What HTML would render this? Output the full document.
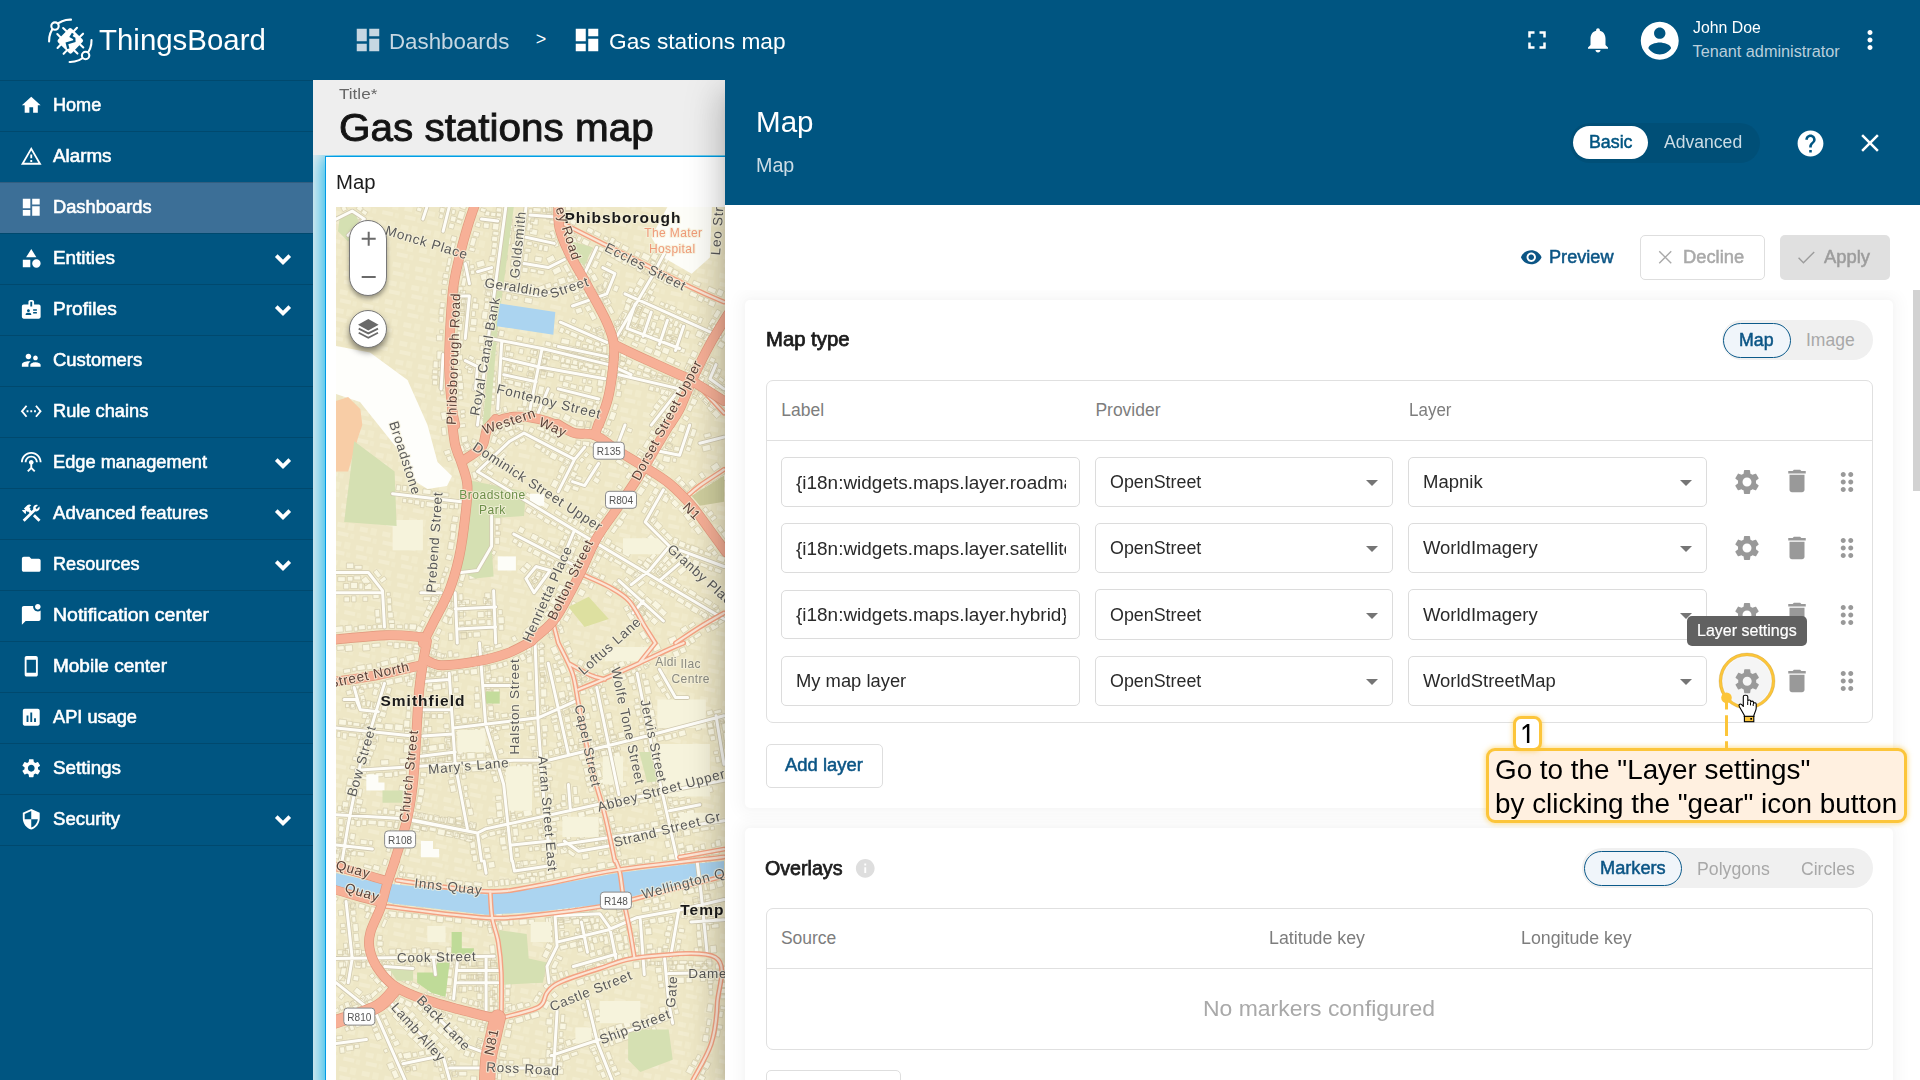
<!DOCTYPE html>
<html lang="en"><head><meta charset="utf-8"><title>ThingsBoard - Gas stations map</title>
<style>
*{box-sizing:border-box;margin:0;padding:0}
html,body{width:1920px;height:1080px;overflow:hidden;background:#fff}
body{position:relative;font-family:"Liberation Sans",Arial,sans-serif;}
.a{position:absolute}
.t{position:absolute;white-space:nowrap;line-height:1;transform-origin:0 50%;}
.ic{position:absolute;overflow:visible}
.sep{position:absolute;left:0;width:313px;height:1px;background:rgba(0,0,0,.14)}
.inp{position:absolute;height:50px;border:1px solid #dcdcdc;border-radius:5px;background:#fff}
.tri{position:absolute;width:0;height:0;border-left:6.5px solid transparent;border-right:6.5px solid transparent;border-top:6.5px solid #757575}
</style></head>
<body>
<!-- ===== dashboard area (left of panel) ===== -->
<div class="a" style="left:313px;top:80px;width:412px;height:1000px;background:#eeeeee"></div>
<!-- selected widget -->
<div class="a" style="left:313px;top:155px;width:412px;height:925px;overflow:hidden"><div class="a" id="widget" style="left:11.8px;top:1px;width:420px;height:940px;background:#fff;border:1.3px solid #039be5;box-shadow:0 0 20px 2px #00b2ec;"></div></div>
<svg class="a" style="left:336px;top:207px;filter:blur(.55px)" width="389" height="873" viewBox="336 207 389 873" font-family="Liberation Sans, Arial, sans-serif">
<rect x="336" y="207" width="389" height="873" fill="#eee7c6"/>
<defs><pattern id="bld" width="23" height="19" patternUnits="userSpaceOnUse" patternTransform="rotate(12)"><rect x="2" y="3" width="8" height="5" fill="#f8f5df"/><rect x="13" y="2" width="6" height="7" fill="#f6f2d8"/><rect x="4" y="12" width="11" height="4" fill="#f9f6e2"/><rect x="17" y="12" width="4" height="5" fill="#f4f0d4"/></pattern></defs>
<rect x="336" y="207" width="389" height="873" fill="url(#bld)" opacity=".35"/>
<path d="M502.0 208.2l-0.6 4.2l-5.4 -0.7l0.6 -4.2zM501.6 213.3l-0.5 3.8l-5.0 -0.7l0.5 -3.8zM500.9 217.9l-0.5 3.9l-4.7 -0.6l0.5 -3.9zM499.3 223.7l-0.9 6.6l-6.3 -0.8l0.9 -6.6zM499.1 231.9l-0.5 3.7l-6.0 -0.8l0.5 -3.7zM497.9 236.8l-0.7 5.0l-5.9 -0.8l0.7 -5.0zM497.5 242.9l-0.7 5.3l-5.1 -0.7l0.7 -5.3zM496.5 249.0l-0.9 6.8l-4.7 -0.6l0.9 -6.8zM495.3 257.1l-0.7 5.0l-5.8 -0.8l0.7 -5.0zM508.0 218.5l-0.5 4.1l4.7 0.6l0.5 -4.1zM507.5 224.5l-0.5 3.7l5.5 0.7l0.5 -3.7zM506.4 229.9l-0.7 5.0l5.5 0.7l0.7 -5.0zM505.1 236.5l-1.0 7.6l6.3 0.8l1.0 -7.6zM503.1 254.8l-0.7 4.9l4.6 0.6l0.7 -4.9zM501.9 261.3l-0.6 4.3l3.8 0.5l0.6 -4.3zM493.8 268.6l-0.7 5.4l-6.1 -0.8l0.7 -5.4zM493.1 274.9l-1.0 7.8l-5.9 -0.8l1.0 -7.8zM492.0 284.8l-0.7 5.2l-6.1 -0.8l0.7 -5.2zM490.9 292.2l-0.6 4.6l-4.2 -0.6l0.6 -4.6zM489.4 298.2l-0.5 3.5l-4.7 -0.6l0.5 -3.5zM489.7 303.1l-0.9 6.9l-5.0 -0.7l0.9 -6.9zM488.2 311.6l-1.1 7.9l-5.8 -0.8l1.1 -7.9zM487.2 321.6l-0.7 5.4l-3.8 -0.5l0.7 -5.4zM500.8 269.5l-0.6 4.3l4.5 0.6l0.6 -4.3zM499.7 279.4l-0.9 6.5l3.9 0.5l0.9 -6.5zM498.8 287.1l-0.5 4.1l6.0 0.8l0.5 -4.1zM498.3 293.4l-0.5 3.9l3.8 0.5l0.5 -3.9zM496.9 298.5l-0.6 4.3l3.5 0.5l0.6 -4.3zM495.1 312.6l-1.0 7.7l5.5 0.7l1.0 -7.7zM484.9 336.2l-0.9 7.5l-5.9 -0.7l0.9 -7.5zM484.0 345.5l-0.7 5.2l-3.6 -0.4l0.7 -5.2zM482.2 359.9l-1.0 8.4l-6.3 -0.8l1.0 -8.4zM480.3 375.7l-1.0 7.6l-4.9 -0.6l1.0 -7.6zM478.8 385.0l-0.8 6.8l-6.2 -0.8l0.8 -6.8zM475.4 408.8l-0.9 7.1l-4.0 -0.5l0.9 -7.1zM493.4 331.1l-0.7 5.2l5.1 0.6l0.7 -5.2zM492.6 337.3l-0.8 6.7l5.0 0.6l0.8 -6.7zM490.8 346.0l-0.9 7.6l4.1 0.5l0.9 -7.6zM490.4 354.8l-0.8 6.4l4.2 0.5l0.8 -6.4zM488.2 369.3l-0.7 5.6l6.2 0.8l0.7 -5.6zM487.6 376.4l-0.4 3.6l4.8 0.6l0.4 -3.6zM486.6 380.9l-0.5 4.3l4.9 0.6l0.5 -4.3zM486.0 387.1l-0.8 6.0l5.1 0.6l0.8 -6.0zM485.0 395.0l-0.6 4.7l4.3 0.5l0.6 -4.7zM484.1 401.6l-0.9 7.2l6.2 0.8l0.9 -7.2zM483.0 410.2l-0.8 6.0l5.5 0.7l0.8 -6.0zM521.4 216.3l-0.5 4.2l-3.8 -0.4l0.5 -4.2zM519.5 227.6l-0.5 4.2l-5.6 -0.6l0.5 -4.2zM519.2 233.6l-0.9 8.3l-4.1 -0.5l0.9 -8.3zM518.0 244.0l-1.0 8.4l-6.0 -0.7l1.0 -8.4zM517.4 253.4l-0.6 5.2l-4.1 -0.5l0.6 -5.2zM516.1 259.8l-0.7 6.2l-4.8 -0.5l0.7 -6.2zM514.9 266.8l-0.7 6.0l-3.7 -0.4l0.7 -6.0zM529.1 208.6l-0.5 4.8l3.6 0.4l0.5 -4.8zM528.4 215.3l-0.6 5.6l6.2 0.7l0.6 -5.6zM527.5 222.8l-0.9 8.0l5.2 0.6l0.9 -8.0zM525.1 248.0l-0.4 3.8l6.0 0.7l0.4 -3.8zM524.2 253.2l-0.9 8.1l4.3 0.5l0.9 -8.1zM523.2 262.2l-0.5 4.0l4.0 0.5l0.5 -4.0zM522.5 267.1l-0.6 5.0l5.7 0.7l0.6 -5.0zM485.8 290.1l7.0 1.4l-1.0 5.1l-7.0 -1.4zM493.9 291.5l4.0 0.8l-1.1 5.8l-4.0 -0.8zM506.4 293.5l5.1 1.0l-1.1 5.9l-5.1 -1.0zM513.2 295.2l5.1 1.0l-0.7 3.6l-5.1 -1.0zM525.0 297.0l7.7 1.5l-1.0 5.4l-7.7 -1.5zM502.8 285.4l5.0 1.0l0.9 -4.5l-5.0 -1.0zM508.5 286.7l5.9 1.1l0.8 -4.0l-5.9 -1.1zM515.9 288.1l3.9 0.7l0.9 -4.6l-3.9 -0.7zM520.7 288.7l4.6 0.9l1.0 -5.2l-4.6 -0.9zM526.9 289.5l7.0 1.3l1.2 -6.0l-7.0 -1.3zM571.4 288.8l6.6 -2.1l1.7 5.3l-6.6 2.1zM579.2 286.8l5.1 -1.6l1.2 3.6l-5.1 1.6zM539.0 291.5l6.6 -2.1l-1.5 -4.7l-6.6 2.1zM546.4 289.1l5.7 -1.8l-1.6 -4.9l-5.7 1.8zM553.9 287.3l4.5 -1.5l-1.1 -3.5l-4.5 1.5zM559.5 285.2l6.9 -2.2l-2.0 -6.1l-6.9 2.2zM567.9 283.0l6.6 -2.1l-1.8 -5.5l-6.6 2.1zM575.9 279.9l4.0 -1.3l-1.3 -4.1l-4.0 1.3zM581.7 277.9l3.4 -1.1l-1.1 -3.5l-3.4 1.1zM491.3 342.1l4.9 0.9l-1.0 5.0l-4.9 -0.9zM519.5 348.3l4.5 0.9l-1.0 5.2l-4.5 -0.9zM530.7 349.6l6.9 1.3l-0.8 4.1l-6.9 -1.3zM491.3 335.1l5.9 1.1l0.9 -4.8l-5.9 -1.1zM498.4 335.9l5.0 1.0l1.1 -5.9l-5.0 -1.0zM516.0 340.1l6.3 1.2l0.9 -4.5l-6.3 -1.2zM528.9 342.3l4.7 0.9l0.8 -4.2l-4.7 -0.9zM543.6 352.2l7.8 1.9l-1.5 6.1l-7.8 -1.9zM552.9 354.7l7.0 1.7l-1.1 4.7l-7.0 -1.7zM561.6 356.8l3.6 0.9l-1.5 6.1l-3.6 -0.9zM566.2 358.3l4.8 1.2l-1.3 5.6l-4.8 -1.2zM573.2 359.5l4.9 1.2l-1.2 5.0l-4.9 -1.2zM579.2 361.7l4.4 1.1l-1.5 6.0l-4.4 -1.1zM585.3 362.3l8.2 2.0l-1.1 4.7l-8.2 -2.0zM594.4 365.0l5.1 1.2l-0.9 3.7l-5.1 -1.2zM544.7 345.5l5.9 1.4l1.1 -4.5l-5.9 -1.4zM552.1 346.7l8.1 2.0l0.9 -3.8l-8.1 -2.0zM561.5 349.4l4.5 1.1l1.0 -4.2l-4.5 -1.1zM567.0 351.2l8.0 1.9l1.4 -5.9l-8.0 -1.9zM577.0 353.6l6.8 1.7l1.5 -6.0l-6.8 -1.7zM592.6 356.9l8.1 2.0l1.0 -4.1l-8.1 -2.0zM601.7 358.8l6.7 1.6l1.5 -6.1l-6.7 -1.6zM608.9 369.2l5.7 2.6l-1.5 3.3l-5.7 -2.6zM616.4 372.3l6.1 2.8l-1.8 4.0l-6.1 -2.8zM612.0 362.6l5.8 2.7l1.9 -4.2l-5.8 -2.7zM619.2 364.9l4.6 2.1l2.0 -4.4l-4.6 -2.1zM505.3 362.7l4.9 1.2l-0.8 3.5l-4.9 -1.2zM511.7 363.8l4.7 1.1l-1.3 5.4l-4.7 -1.1zM518.2 366.1l5.1 1.2l-1.1 4.6l-5.1 -1.2zM505.9 355.6l7.1 1.7l1.0 -4.3l-7.1 -1.7zM526.6 359.8l4.1 1.0l0.8 -3.6l-4.1 -1.0zM540.3 370.4l5.1 0.9l-0.7 4.0l-5.1 -0.9zM547.5 371.8l6.7 1.2l-0.8 4.6l-6.7 -1.2zM560.1 374.7l4.1 0.7l-1.1 6.3l-4.1 -0.7zM565.3 375.2l7.5 1.4l-0.9 4.7l-7.5 -1.4zM582.9 378.1l3.6 0.7l-0.8 4.7l-3.6 -0.7zM588.3 379.8l3.6 0.7l-0.7 3.6l-3.6 -0.7zM540.9 363.9l4.7 0.9l1.0 -5.6l-4.7 -0.9zM560.7 367.0l8.1 1.5l0.8 -4.6l-8.1 -1.5zM570.1 368.4l8.0 1.5l0.7 -4.0l-8.0 -1.5zM579.9 370.6l7.2 1.3l1.0 -5.2l-7.2 -1.3zM588.4 372.3l7.3 1.3l0.7 -3.7l-7.3 -1.3zM596.8 373.1l3.8 0.7l0.6 -3.5l-3.8 -0.7zM505.7 378.9l8.2 1.8l-0.9 4.2l-8.2 -1.8zM514.8 381.1l6.9 1.5l-1.0 4.7l-6.9 -1.5zM522.9 382.3l6.7 1.5l-1.2 5.6l-6.7 -1.5zM507.1 372.0l4.9 1.1l1.1 -5.1l-4.9 -1.1zM526.6 375.5l5.9 1.3l0.9 -4.1l-5.9 -1.3zM497.0 351.2l-0.2 3.7l-4.4 -0.3l0.2 -3.7zM496.4 371.2l-0.2 4.0l-5.3 -0.3l0.2 -4.0zM495.8 376.9l-0.3 4.2l-4.1 -0.2l0.3 -4.2zM495.9 382.3l-0.3 4.5l-3.5 -0.2l0.3 -4.5zM495.7 388.1l-0.3 5.1l-4.1 -0.2l0.3 -5.1zM495.2 395.0l-0.2 4.0l-4.7 -0.3l0.2 -4.0zM494.7 400.6l-0.3 4.3l-5.6 -0.3l0.3 -4.3zM505.6 345.6l-0.3 5.1l5.2 0.3l0.3 -5.1zM504.6 351.9l-0.5 8.5l4.6 0.3l0.5 -8.5zM503.5 366.3l-0.3 5.5l6.1 0.4l0.3 -5.5zM503.7 373.3l-0.4 6.2l5.4 0.3l0.4 -6.2zM503.1 381.6l-0.3 5.3l5.0 0.3l0.3 -5.3zM537.5 350.6l-1.2 5.8l-3.6 -0.7l1.2 -5.8zM536.6 358.5l-1.3 6.5l-5.9 -1.2l1.3 -6.5zM535.1 366.0l-1.1 5.4l-5.9 -1.2l1.1 -5.4zM533.7 373.4l-1.1 5.4l-5.0 -1.0l1.1 -5.4zM531.8 380.0l-1.4 7.0l-6.1 -1.2l1.4 -7.0zM530.4 387.8l-0.7 3.6l-5.9 -1.2l0.7 -3.6zM529.7 392.4l-1.3 6.5l-4.3 -0.9l1.3 -6.5zM527.9 400.2l-1.3 6.7l-4.7 -0.9l1.3 -6.7zM545.1 351.1l-0.9 4.6l5.7 1.1l0.9 -4.6zM543.7 357.5l-1.2 5.8l3.7 0.7l1.2 -5.8zM542.3 364.2l-1.1 5.6l4.9 1.0l1.1 -5.6zM541.5 370.7l-1.4 7.0l5.7 1.1l1.4 -7.0zM539.0 385.6l-1.7 8.3l5.6 1.1l1.7 -8.3zM536.8 395.8l-1.2 5.8l6.2 1.2l1.2 -5.8zM565.4 351.5l4.1 0.9l-1.0 4.9l-4.1 -0.9zM571.6 352.7l5.9 1.2l-0.9 4.4l-5.9 -1.2zM578.2 354.7l8.0 1.7l-1.1 5.4l-8.0 -1.7zM588.2 356.8l4.0 0.8l-1.0 5.0l-4.0 -0.8zM593.9 358.1l6.1 1.3l-1.1 5.1l-6.1 -1.3zM560.6 343.2l8.3 1.7l1.1 -5.1l-8.3 -1.7zM575.3 346.0l4.7 1.0l1.1 -5.3l-4.7 -1.0zM582.1 347.5l5.0 1.0l0.7 -3.4l-5.0 -1.0zM587.8 349.1l5.5 1.2l1.0 -4.9l-5.5 -1.2zM595.3 350.8l6.6 1.4l0.7 -3.5l-6.6 -1.4zM560.7 326.9l4.1 1.8l-2.1 4.9l-4.1 -1.8zM566.2 329.2l4.3 1.9l-1.6 3.6l-4.3 -1.9zM571.5 331.2l6.8 3.0l-1.9 4.3l-6.8 -3.0zM579.2 334.9l5.8 2.5l-1.8 4.2l-5.8 -2.5zM586.7 337.7l6.6 2.9l-1.7 3.9l-6.6 -2.9zM595.4 341.0l5.1 2.2l-1.7 3.9l-5.1 -2.2zM570.8 322.3l4.0 1.7l1.8 -4.1l-4.0 -1.7zM583.2 328.4l6.6 2.9l2.0 -4.5l-6.6 -2.9zM591.7 331.5l3.7 1.6l1.7 -3.8l-3.7 -1.6zM596.1 333.7l6.4 2.8l2.4 -5.5l-6.4 -2.8zM631.8 301.5l3.3 1.5l-1.7 3.9l-3.3 -1.5zM636.4 302.8l6.6 2.9l-1.8 4.1l-6.6 -2.9zM644.6 307.2l7.3 3.3l-2.2 4.9l-7.3 -3.3zM660.8 313.6l5.2 2.3l-2.3 5.2l-5.2 -2.3zM667.5 316.4l6.0 2.7l-1.5 3.4l-6.0 -2.7zM675.5 320.0l3.7 1.6l-2.6 5.7l-3.7 -1.6zM680.0 322.8l3.4 1.5l-2.3 5.1l-3.4 -1.5zM697.7 330.0l7.4 3.3l-2.6 5.8l-7.4 -3.3zM705.6 334.3l3.4 1.5l-2.5 5.5l-3.4 -1.5zM710.8 336.6l6.1 2.7l-1.8 4.0l-6.1 -2.7zM627.7 291.3l4.7 2.1l1.9 -4.4l-4.7 -2.1zM640.8 297.0l5.5 2.5l2.5 -5.5l-5.5 -2.5zM647.8 300.0l5.2 2.3l2.4 -5.3l-5.2 -2.3zM659.4 304.7l4.0 1.8l1.4 -3.2l-4.0 -1.8zM664.1 307.6l3.2 1.4l2.0 -4.5l-3.2 -1.4zM668.9 309.0l5.5 2.4l1.9 -4.1l-5.5 -2.4zM675.8 313.0l4.5 2.0l1.7 -3.8l-4.5 -2.0zM682.2 315.1l6.1 2.7l1.5 -3.4l-6.1 -2.7zM690.1 318.5l6.1 2.7l1.9 -4.2l-6.1 -2.7zM697.2 322.4l3.6 1.6l2.5 -5.6l-3.6 -1.6zM710.2 327.7l4.3 1.9l2.0 -4.5l-4.3 -1.9zM631.2 304.1l-2.4 7.3l-5.2 -1.7l2.4 -7.3zM627.8 313.0l-2.3 7.0l-5.0 -1.7l2.3 -7.0zM625.2 321.0l-1.5 4.4l-3.9 -1.3l1.5 -4.4zM637.9 306.3l-1.4 4.1l4.0 1.3l1.4 -4.1zM636.1 311.5l-1.6 4.9l3.9 1.3l1.6 -4.9zM628.3 332.3l6.7 2.6l-1.7 4.5l-6.7 -2.6zM635.7 335.9l4.2 1.6l-1.7 4.4l-4.2 -1.6zM641.0 337.2l6.5 2.5l-1.8 4.7l-6.5 -2.5zM656.8 343.4l5.3 2.0l-1.9 4.9l-5.3 -2.0zM663.6 346.7l6.6 2.6l-2.2 5.7l-6.6 -2.6zM629.9 325.2l6.2 2.4l1.4 -3.5l-6.2 -2.4zM637.4 328.2l6.2 2.4l1.5 -4.0l-6.2 -2.4zM644.9 331.0l5.2 2.0l2.0 -5.2l-5.2 -2.0zM660.5 336.7l3.4 1.3l1.8 -4.8l-3.4 -1.3zM664.8 338.6l5.7 2.2l1.4 -3.5l-5.7 -2.2zM671.9 341.6l5.7 2.2l1.9 -5.1l-5.7 -2.2zM647.2 313.8l-1.4 4.3l-5.3 -1.8l1.4 -4.3zM645.1 319.3l-2.7 8.0l-4.3 -1.4l2.7 -8.0zM642.2 328.1l-1.1 3.4l-4.5 -1.5l1.1 -3.4zM654.0 314.6l-1.5 4.4l5.4 1.8l1.5 -4.4zM652.4 321.2l-2.4 7.1l4.4 1.5l2.4 -7.1zM649.2 329.2l-2.4 7.2l5.1 1.7l2.4 -7.2zM660.4 328.5l-1.8 5.5l-4.2 -1.4l1.8 -5.5zM658.6 335.7l-1.7 5.0l-5.7 -1.9l1.7 -5.0zM670.1 323.0l-1.4 4.2l3.3 1.1l1.4 -4.2zM668.5 329.1l-1.6 4.8l4.7 1.6l1.6 -4.8zM666.7 335.2l-1.7 5.0l6.0 2.0l1.7 -5.0zM679.7 327.9l-2.3 7.0l-3.7 -1.2l2.3 -7.0zM676.6 336.8l-1.1 3.4l-6.0 -2.0l1.1 -3.4zM674.9 341.8l-1.3 4.0l-4.0 -1.3l1.3 -4.0zM686.5 330.2l-2.4 7.1l3.8 1.3l2.4 -7.1zM680.4 347.4l-1.4 4.3l5.3 1.8l1.4 -4.3zM603.6 272.2l5.6 2.8l-1.9 3.8l-5.6 -2.8zM605.4 264.8l5.2 2.6l1.8 -3.5l-5.2 -2.6zM610.8 274.1l-2.3 5.9l-5.1 -2.0l2.3 -5.9zM608.1 282.0l-3.1 7.7l-3.5 -1.4l3.1 -7.7zM614.7 284.8l-2.2 5.6l4.6 1.8l2.2 -5.6zM603.5 291.1l-4.9 1.7l-2.0 -5.7l4.9 -1.7zM597.3 293.3l-6.9 2.4l-1.4 -3.9l6.9 -2.4zM589.1 296.2l-7.2 2.5l-1.5 -4.1l7.2 -2.5zM579.9 299.2l-4.6 1.6l-1.7 -4.7l4.6 -1.6zM606.6 298.2l-4.8 1.7l1.5 4.1l4.8 -1.7zM600.0 299.8l-3.5 1.2l1.9 5.3l3.5 -1.2zM581.1 307.0l-6.2 2.2l1.8 5.0l6.2 -2.2zM592.7 248.2l-1.9 4.1l-5.0 -2.3l1.9 -4.1zM587.2 259.2l-2.8 6.2l-4.2 -1.9l2.8 -6.2zM583.6 267.1l-2.0 4.3l-4.0 -1.8l2.0 -4.3zM598.8 250.9l-3.4 7.4l3.3 1.5l3.4 -7.4zM594.6 259.7l-3.2 6.9l4.7 2.2l3.2 -6.9zM527.2 241.0l5.4 1.2l-0.8 3.7l-5.4 -1.2zM534.1 243.3l3.5 0.7l-0.7 3.4l-3.5 -0.7zM539.4 244.2l3.9 0.8l-1.3 6.0l-3.9 -0.8zM544.2 245.3l4.6 1.0l-1.2 5.6l-4.6 -1.0zM529.2 234.0l7.6 1.6l1.2 -5.6l-7.6 -1.6zM544.5 237.2l6.9 1.5l0.7 -3.5l-6.9 -1.5zM530.5 268.4l5.9 1.0l-0.6 3.6l-5.9 -1.0zM537.6 269.8l6.8 1.1l-0.6 3.9l-6.8 -1.1zM534.3 261.1l7.3 1.2l0.9 -5.1l-7.3 -1.2zM551.8 269.9l7.5 -3.8l2.7 5.4l-7.5 3.8zM548.6 263.5l7.1 -3.6l-2.6 -5.3l-7.1 3.6zM530.8 218.6l7.6 0.6l-0.5 5.9l-7.6 -0.6zM550.0 220.0l5.2 0.4l-0.3 3.7l-5.2 -0.4zM532.8 211.6l8.1 0.6l0.3 -4.2l-8.1 -0.6zM542.6 212.4l4.5 0.3l0.3 -4.3l-4.5 -0.3zM548.9 212.7l3.9 0.3l0.5 -5.9l-3.9 -0.3zM460.1 299.3l7.9 0.0l-0.0 5.1l-7.9 -0.0zM458.6 292.3l4.4 0.0l0.0 -5.6l-4.4 -0.0zM465.8 298.6l-0.5 5.3l-3.8 -0.4l0.5 -5.3zM465.2 305.6l-0.6 6.5l-4.5 -0.4l0.6 -6.5zM464.2 313.6l-0.8 8.4l-6.1 -0.6l0.8 -8.4zM462.7 323.4l-0.7 7.4l-4.8 -0.5l0.7 -7.4zM473.3 297.7l-0.4 4.4l3.7 0.4l0.4 -4.4zM472.5 302.9l-0.5 5.8l6.3 0.6l0.5 -5.8zM471.8 310.8l-0.5 5.5l3.8 0.4l0.5 -5.5zM470.9 318.3l-0.6 6.7l6.3 0.6l0.6 -6.7zM469.7 326.7l-0.4 4.3l6.4 0.6l0.4 -4.3zM461.8 267.0l0.7 3.7l-5.7 1.1l-0.7 -3.7zM469.4 265.3l0.8 3.9l4.4 -0.9l-0.8 -3.9zM470.0 270.5l0.9 4.3l4.1 -0.8l-0.9 -4.3zM479.9 274.8l7.9 -2.2l1.7 5.9l-7.9 2.2zM477.6 267.9l7.8 -2.2l-1.7 -5.8l-7.8 2.2zM483.7 222.7l5.8 0.7l-0.7 5.3l-5.8 -0.7zM484.7 215.5l4.8 0.6l0.6 -4.7l-4.8 -0.6zM490.5 216.1l5.1 0.6l0.5 -4.0l-5.1 -0.6zM620.5 337.0l4.2 -7.2l3.2 1.9l-4.2 7.2zM625.9 328.1l3.0 -5.1l3.8 2.2l-3.0 5.1zM629.4 322.0l4.3 -7.3l5.6 3.3l-4.3 7.3zM635.3 313.2l4.0 -6.9l3.2 1.9l-4.0 6.9zM639.4 304.3l1.8 -3.1l5.1 3.0l-1.8 3.1zM642.7 300.5l3.9 -6.6l4.4 2.6l-3.9 6.6zM647.0 292.9l2.3 -4.0l4.5 2.6l-2.3 4.0zM649.7 288.0l3.6 -6.1l3.5 2.1l-3.6 6.1zM614.5 332.6l2.5 -4.2l-3.6 -2.1l-2.5 4.2zM618.1 327.2l3.2 -5.5l-3.5 -2.1l-3.2 5.5zM621.4 320.6l3.6 -6.1l-3.2 -1.9l-3.6 6.1zM630.4 305.4l3.0 -5.1l-5.3 -3.1l-3.0 5.1zM634.7 299.7l2.7 -4.6l-3.4 -2.0l-2.7 4.6zM637.4 293.6l3.1 -5.3l-4.2 -2.4l-3.1 5.3zM641.6 287.2l3.8 -6.5l-5.3 -3.1l-3.8 6.5zM655.5 276.7l2.8 -5.3l4.4 2.4l-2.8 5.3zM659.2 270.2l3.9 -7.4l3.7 2.0l-3.9 7.4zM663.6 261.8l3.6 -6.7l3.2 1.7l-3.6 6.7zM668.1 254.6l1.7 -3.2l4.7 2.5l-1.7 3.2zM648.6 274.9l3.7 -6.9l-5.0 -2.7l-3.7 6.9zM653.0 267.4l2.8 -5.3l-3.8 -2.0l-2.8 5.3zM655.7 261.0l3.0 -5.7l-5.4 -2.9l-3.0 5.7zM659.5 254.5l2.0 -3.8l-5.3 -2.8l-2.0 3.8zM620.7 378.8l6.0 1.4l-1.1 4.6l-6.0 -1.4zM649.7 385.7l4.6 1.1l-1.1 4.6l-4.6 -1.1zM656.0 386.8l3.7 0.9l-1.1 4.7l-3.7 -0.9zM661.1 388.7l8.1 1.9l-1.3 5.7l-8.1 -1.9zM622.1 371.2l4.7 1.1l1.3 -5.4l-4.7 -1.1zM628.0 372.6l6.4 1.5l1.0 -4.1l-6.4 -1.5zM635.8 374.8l4.8 1.1l1.0 -4.3l-4.8 -1.1zM642.3 376.4l8.1 1.9l1.1 -4.9l-8.1 -1.9zM651.4 378.6l4.1 1.0l0.9 -3.8l-4.1 -1.0zM656.6 379.4l4.8 1.1l1.0 -4.1l-4.8 -1.1zM662.3 380.8l6.4 1.5l1.2 -5.1l-6.4 -1.5zM670.3 383.1l5.7 1.3l1.2 -5.0l-5.7 -1.3zM676.1 388.1l-2.8 3.6l-4.0 -3.1l2.8 -3.6zM672.1 392.5l-3.2 4.1l-4.8 -3.7l3.2 -4.1zM668.4 397.7l-3.0 3.9l-5.1 -4.0l3.0 -3.9zM664.4 402.4l-2.4 3.0l-4.8 -3.8l2.4 -3.0zM660.8 406.2l-3.5 4.5l-4.5 -3.5l3.5 -4.5zM656.9 411.6l-4.4 5.7l-3.1 -2.4l4.4 -5.7zM681.5 393.0l-4.4 5.7l4.5 3.5l4.4 -5.7zM671.1 406.5l-2.2 2.8l4.6 3.6l2.2 -2.8zM662.6 416.9l-4.0 5.1l3.7 2.9l4.0 -5.1zM657.4 422.9l-3.1 3.9l3.7 2.9l3.1 -3.9zM560.0 392.9l7.5 1.9l-1.2 4.8l-7.5 -1.9zM568.7 395.7l4.1 1.0l-1.3 5.1l-4.1 -1.0zM581.5 398.0l4.4 1.1l-1.2 4.6l-4.4 -1.1zM587.7 400.1l6.1 1.5l-1.2 4.8l-6.1 -1.5zM562.1 386.2l5.9 1.5l1.2 -4.9l-5.9 -1.5zM569.7 387.9l6.3 1.6l1.1 -4.4l-6.3 -1.6zM578.1 389.9l3.9 1.0l1.1 -4.5l-3.9 -1.0zM583.3 391.2l7.7 1.9l1.6 -6.2l-7.7 -1.9zM541.0 395.8l-2.3 5.6l-3.5 -1.5l2.3 -5.6zM538.3 403.5l-3.3 7.8l-5.7 -2.4l3.3 -7.8zM550.9 392.2l-2.3 5.6l3.8 1.6l2.3 -5.6zM548.0 398.7l-2.0 4.9l6.0 2.5l2.0 -4.9zM545.3 405.1l-2.9 6.9l4.1 1.7l2.9 -6.9zM711.4 365.6l-2.5 5.9l-5.1 -2.2l2.5 -5.9zM718.1 367.9l-2.2 5.1l3.6 1.5l2.2 -5.1zM709.7 382.9l6.1 4.4l-2.1 3.0l-6.1 -4.4zM713.3 376.7l3.3 2.3l3.6 -5.1l-3.3 -2.3zM718.1 379.6l4.4 3.2l2.1 -3.0l-4.4 -3.2zM343.0 211.7l4.2 -2.1l-2.1 -4.2l-4.2 2.1zM352.5 215.5l4.9 3.3l-3.3 4.9l-4.9 -3.3zM358.5 219.2l3.7 2.5l-3.6 5.3l-3.7 -2.5zM356.1 208.8l4.5 3.0l2.6 -3.9l-4.5 -3.0zM361.1 212.8l4.4 2.9l2.3 -3.5l-4.4 -2.9zM361.2 217.6l-4.8 4.8l-3.2 -3.2l4.8 -4.8zM355.1 222.6l-3.4 3.4l-4.2 -4.2l3.4 -3.4zM351.3 227.0l-5.3 5.3l-2.8 -2.8l5.3 -5.3zM364.8 223.8l-3.2 3.2l4.5 4.5l3.2 -3.2zM356.6 231.6l-4.6 4.6l3.3 3.3l4.6 -4.6zM422.3 208.3l-1.3 3.9l-4.8 -1.6l1.3 -3.9zM445.3 208.2l-1.3 5.1l-4.9 -1.2l1.3 -5.1zM443.6 214.5l-1.1 4.5l-3.8 -0.9l1.1 -4.5zM452.3 209.1l-1.2 4.7l3.5 0.9l1.2 -4.7zM451.2 215.6l-1.3 5.4l5.3 1.3l1.3 -5.4zM449.5 222.8l-1.3 5.1l5.2 1.3l1.3 -5.1zM466.0 364.7l6.3 3.2l-1.6 3.2l-6.3 -3.2zM468.3 358.3l4.8 2.4l1.6 -3.2l-4.8 -2.4zM473.3 367.8l-0.5 5.7l-5.5 -0.5l0.5 -5.7zM480.6 368.2l-0.7 7.4l4.1 0.4l0.7 -7.4zM439.1 361.2l-0.4 6.9l-5.7 -0.3l0.4 -6.9zM438.1 370.1l-0.2 3.8l-5.6 -0.3l0.2 -3.8zM437.9 375.3l-0.2 4.1l-5.8 -0.3l0.2 -4.1zM437.8 380.3l-0.3 4.8l-5.1 -0.3l0.3 -4.8zM446.5 356.2l-0.2 3.8l4.6 0.3l0.2 -3.8zM446.2 361.4l-0.2 4.2l5.6 0.3l0.2 -4.2zM445.9 367.3l-0.4 6.1l4.8 0.3l0.4 -6.1zM445.9 375.5l-0.5 7.9l3.9 0.2l0.5 -7.9zM402.8 498.2l4.0 0.5l-0.5 4.3l-4.0 -0.5zM408.2 498.9l4.9 0.6l-0.5 4.1l-4.9 -0.6zM414.8 499.6l5.1 0.6l-0.6 4.9l-5.1 -0.6zM421.1 501.0l3.5 0.4l-0.8 6.4l-3.5 -0.4zM426.5 501.4l8.3 1.0l-0.6 5.2l-8.3 -1.0zM441.1 502.9l6.7 0.8l-0.6 5.3l-6.7 -0.8zM449.8 504.5l4.7 0.6l-0.5 3.9l-4.7 -0.6zM395.8 490.5l4.3 0.5l0.7 -5.8l-4.3 -0.5zM402.1 491.1l4.4 0.5l0.7 -5.9l-4.4 -0.5zM407.8 491.7l5.3 0.6l0.7 -6.0l-5.3 -0.6zM422.5 493.7l8.2 1.0l0.6 -4.9l-8.2 -1.0zM432.2 494.7l6.4 0.7l0.4 -3.7l-6.4 -0.7zM440.3 495.9l8.3 1.0l0.4 -3.7l-8.3 -1.0zM477.8 475.9l4.8 2.9l-2.2 3.7l-4.8 -2.9zM490.0 483.4l6.9 4.1l-2.1 3.4l-6.9 -4.1zM497.9 488.1l4.5 2.7l-2.1 3.5l-4.5 -2.7zM511.9 496.8l7.1 4.3l-2.8 4.6l-7.1 -4.3zM527.6 506.5l5.1 3.1l-2.8 4.7l-5.1 -3.1zM534.1 509.5l3.1 1.9l-2.1 3.5l-3.1 -1.9zM538.5 512.7l5.8 3.5l-2.4 4.0l-5.8 -3.5zM545.5 517.4l5.4 3.3l-2.4 4.0l-5.4 -3.3zM552.1 520.4l5.3 3.2l-2.0 3.3l-5.3 -3.2zM559.1 524.8l5.3 3.2l-2.2 3.6l-5.3 -3.2zM565.7 528.6l5.4 3.3l-2.0 3.3l-5.4 -3.3zM481.0 469.1l3.3 2.0l2.5 -4.1l-3.3 -2.0zM485.8 472.6l6.2 3.8l2.0 -3.3l-6.2 -3.8zM501.3 482.1l5.4 3.3l3.0 -5.0l-5.4 -3.3zM507.6 485.7l4.0 2.4l2.4 -4.0l-4.0 -2.4zM525.1 495.6l6.7 4.1l2.1 -3.4l-6.7 -4.1zM533.4 500.7l5.9 3.6l3.1 -5.1l-5.9 -3.6zM539.8 505.3l7.1 4.3l2.9 -4.8l-7.1 -4.3zM554.1 513.1l5.9 3.6l2.2 -3.6l-5.9 -3.6zM560.9 517.2l5.5 3.3l2.0 -3.3l-5.5 -3.3zM566.9 521.3l3.8 2.3l2.7 -4.4l-3.8 -2.3zM571.9 523.9l3.6 2.2l3.2 -5.2l-3.6 -2.2zM574.9 535.1l3.1 1.8l-2.3 3.9l-3.1 -1.8zM586.2 541.8l5.9 3.5l-2.4 4.0l-5.9 -3.5zM593.6 545.6l4.7 2.8l-3.1 5.3l-4.7 -2.8zM599.8 549.1l3.9 2.3l-3.2 5.3l-3.9 -2.3zM605.1 552.5l4.6 2.7l-2.5 4.2l-4.6 -2.7zM611.0 556.1l3.0 1.8l-2.7 4.5l-3.0 -1.8zM615.2 558.4l7.2 4.3l-1.9 3.1l-7.2 -4.3zM623.1 563.4l4.2 2.5l-2.6 4.3l-4.2 -2.5zM628.2 566.7l7.1 4.2l-3.3 5.6l-7.1 -4.2zM636.3 571.1l6.8 4.0l-3.0 5.0l-6.8 -4.0zM650.3 579.6l5.9 3.5l-2.3 3.8l-5.9 -3.5zM658.1 583.7l5.7 3.4l-2.3 3.9l-5.7 -3.4zM665.0 588.2l4.5 2.7l-2.3 3.8l-4.5 -2.7zM671.5 591.7l4.1 2.4l-2.2 3.6l-4.1 -2.4zM578.6 528.6l5.0 3.0l2.5 -4.2l-5.0 -3.0zM585.1 532.0l3.3 2.0l2.3 -3.8l-3.3 -2.0zM589.2 535.0l7.0 4.2l2.3 -3.9l-7.0 -4.2zM598.4 539.7l3.8 2.2l2.7 -4.5l-3.8 -2.2zM604.1 543.0l4.8 2.9l3.1 -5.2l-4.8 -2.9zM609.4 546.9l4.2 2.5l2.2 -3.7l-4.2 -2.5zM614.5 549.5l6.0 3.6l2.1 -3.6l-6.0 -3.6zM621.8 553.5l6.7 4.0l2.8 -4.7l-6.7 -4.0zM636.7 562.4l4.5 2.7l2.0 -3.4l-4.5 -2.7zM642.0 565.7l5.8 3.4l3.2 -5.4l-5.8 -3.4zM648.3 570.3l5.8 3.5l2.4 -4.1l-5.8 -3.5zM655.9 574.3l4.8 2.9l1.9 -3.1l-4.8 -2.9zM662.3 577.6l5.6 3.3l2.2 -3.7l-5.6 -3.3zM669.0 581.9l5.4 3.2l3.3 -5.6l-5.4 -3.2zM675.2 585.5l4.4 2.6l1.9 -3.2l-4.4 -2.6zM678.7 596.6l6.5 3.9l-2.4 4.1l-6.5 -3.9zM686.7 601.0l5.8 3.5l-2.7 4.6l-5.8 -3.5zM693.4 605.5l6.1 3.6l-2.9 5.0l-6.1 -3.6zM701.0 610.2l7.2 4.3l-2.5 4.2l-7.2 -4.3zM709.3 614.9l3.6 2.1l-1.8 3.0l-3.6 -2.1zM714.5 617.2l4.6 2.7l-3.3 5.6l-4.6 -2.7zM682.2 590.4l3.6 2.1l1.9 -3.2l-3.6 -2.1zM687.4 592.8l7.1 4.2l2.3 -4.0l-7.1 -4.2zM695.0 597.9l7.0 4.1l2.0 -3.4l-7.0 -4.1zM703.0 602.0l7.2 4.3l2.5 -4.3l-7.2 -4.3zM711.7 607.2l5.0 3.0l2.3 -3.8l-5.0 -3.0zM486.9 467.6l4.8 -4.5l2.9 3.0l-4.8 4.5zM492.5 462.2l3.4 -3.2l2.8 3.0l-3.4 3.2zM497.6 458.1l6.2 -5.8l2.8 3.0l-6.2 5.8zM476.0 467.6l3.8 -3.5l-3.4 -3.6l-3.8 3.5zM487.0 457.0l3.3 -3.1l-4.2 -4.5l-3.3 3.1zM491.8 453.6l3.2 -3.0l-4.2 -4.4l-3.2 3.0zM499.8 445.3l3.1 -2.9l-3.9 -4.2l-3.1 2.9zM503.4 441.6l2.9 -2.7l-3.1 -3.3l-2.9 2.7zM514.0 442.5l3.2 -1.8l2.1 3.6l-3.2 1.8zM518.8 439.7l5.2 -3.0l2.1 3.6l-5.2 3.0zM510.7 436.8l4.4 -2.5l-3.0 -5.3l-4.4 2.5zM515.7 433.3l4.9 -2.8l-2.0 -3.5l-4.9 2.8zM535.7 442.9l6.3 3.3l-2.0 3.8l-6.3 -3.3zM542.9 446.9l3.3 1.7l-2.3 4.5l-3.3 -1.7zM547.3 449.4l3.2 1.6l-2.6 4.9l-3.2 -1.6zM552.0 451.7l6.2 3.2l-3.0 5.7l-6.2 -3.2zM560.0 455.9l4.5 2.3l-2.2 4.2l-4.5 -2.3zM566.3 459.4l4.9 2.6l-1.8 3.5l-4.9 -2.6zM528.1 431.4l4.2 2.2l2.5 -4.7l-4.2 -2.2zM538.9 436.6l3.3 1.7l2.6 -5.0l-3.3 -1.7zM543.5 438.7l4.5 2.3l3.0 -5.7l-4.5 -2.3zM548.6 441.6l5.4 2.8l2.4 -4.7l-5.4 -2.8zM555.9 445.5l6.4 3.3l2.1 -4.1l-6.4 -3.3zM563.9 449.6l5.8 3.0l2.6 -4.9l-5.8 -3.0zM570.6 459.6l-3.2 6.4l-4.5 -2.3l3.2 -6.4zM566.2 467.0l-3.6 7.3l-4.5 -2.3l3.6 -7.3zM562.0 475.7l-2.1 4.2l-3.6 -1.8l2.1 -4.2zM559.3 481.8l-3.4 6.8l-5.5 -2.8l3.4 -6.8zM576.2 463.2l-3.4 6.8l3.5 1.7l3.4 -6.8zM572.4 470.9l-2.4 4.7l5.3 2.6l2.4 -4.7zM569.7 477.2l-2.4 4.9l5.8 2.9l2.4 -4.9zM566.3 483.6l-3.4 6.7l5.2 2.6l3.4 -6.7zM514.2 537.9l4.2 2.2l-2.1 4.1l-4.2 -2.2zM519.2 541.3l4.0 2.1l-2.4 4.6l-4.0 -2.1zM529.4 546.3l3.5 1.8l-2.5 4.8l-3.5 -1.8zM534.7 549.0l6.6 3.4l-2.5 4.8l-6.6 -3.4zM542.4 553.2l4.7 2.4l-2.6 5.0l-4.7 -2.4zM548.1 556.5l6.7 3.5l-2.1 4.0l-6.7 -3.5zM556.1 560.3l4.0 2.0l-2.9 5.7l-4.0 -2.0zM561.8 563.1l4.6 2.4l-1.7 3.3l-4.6 -2.4zM568.0 566.3l5.3 2.7l-2.8 5.5l-5.3 -2.7zM517.4 531.4l5.2 2.7l2.8 -5.3l-5.2 -2.7zM530.1 538.2l6.1 3.1l2.6 -5.1l-6.1 -3.1zM537.2 542.4l5.6 2.9l2.7 -5.2l-5.6 -2.9zM544.7 545.6l3.5 1.8l2.7 -5.3l-3.5 -1.8zM548.9 548.1l5.6 2.9l1.7 -3.3l-5.6 -2.9zM556.3 551.3l3.4 1.7l2.6 -5.0l-3.4 -1.7zM560.7 554.1l6.7 3.5l2.8 -5.4l-6.7 -3.5zM568.2 558.2l3.1 1.6l3.0 -5.7l-3.1 -1.6zM572.4 560.3l4.2 2.2l2.8 -5.4l-4.2 -2.2zM568.1 536.1l-1.8 4.4l-3.8 -1.6l1.8 -4.4zM565.5 541.2l-2.2 5.4l-4.6 -1.9l2.2 -5.4zM563.1 548.3l-1.7 4.2l-5.8 -2.4l1.7 -4.2zM577.4 533.5l-2.1 5.1l4.8 2.0l2.1 -5.1zM574.4 539.7l-1.9 4.6l5.2 2.2l1.9 -4.6zM571.8 546.0l-3.1 7.5l4.5 1.9l3.1 -7.5zM580.5 446.8l-2.4 2.9l-4.7 -3.9l2.4 -2.9zM577.2 450.1l-5.2 6.2l-4.0 -3.3l5.2 -6.2zM586.2 451.7l-3.2 3.8l3.2 2.6l3.2 -3.8zM581.8 457.0l-2.9 3.5l2.9 2.4l2.9 -3.5zM573.1 485.3l6.4 2.1l-1.4 4.1l-6.4 -2.1zM574.6 478.7l6.6 2.2l1.1 -3.4l-6.6 -2.2zM592.6 480.9l2.7 -4.3l5.1 3.2l-2.7 4.3zM595.2 475.3l2.9 -4.6l3.0 1.9l-2.9 4.6zM589.7 470.7l3.3 -5.2l-3.7 -2.3l-3.3 5.2zM530.7 578.8l2.5 -3.0l3.8 3.2l-2.5 3.0zM524.5 573.9l3.0 -3.6l-4.8 -4.0l-3.0 3.6zM528.5 570.1l3.3 -4.0l-4.9 -4.1l-3.3 4.0zM536.9 570.4l4.6 1.3l-1.6 5.5l-4.6 -1.3zM542.4 572.4l3.7 1.1l-1.4 5.0l-3.7 -1.1zM539.2 563.4l5.6 1.6l1.0 -3.5l-5.6 -1.6zM546.3 565.4l4.0 1.1l1.4 -5.0l-4.0 -1.1zM542.8 573.7l-4.6 6.4l-4.0 -2.9l4.6 -6.4zM538.0 581.1l-2.4 3.3l-4.0 -2.9l2.4 -3.3zM534.9 585.9l-2.5 3.5l-4.1 -3.0l2.5 -3.5zM544.6 584.1l-3.5 4.8l4.7 3.5l3.5 -4.8zM533.7 584.1l-1.9 -3.4l4.5 -2.6l1.9 3.4zM337.7 576.7l7.6 0.0l-0.0 4.9l-7.6 -0.0zM347.3 576.5l5.6 0.0l-0.0 4.7l-5.6 -0.0zM353.8 575.9l6.9 0.0l-0.0 4.0l-6.9 -0.0zM346.4 568.5l7.3 0.0l0.0 -5.4l-7.3 -0.0zM354.7 569.2l7.4 0.0l0.0 -3.8l-7.4 -0.0zM365.9 576.0l4.7 6.0l-5.0 3.9l-4.7 -6.0zM373.2 572.0l4.8 6.2l3.5 -2.7l-4.8 -6.2zM379.2 580.0l2.5 3.2l5.1 -3.9l-2.5 -3.2zM379.0 592.4l0.3 6.0l-6.2 0.3l-0.3 -6.0zM379.5 609.3l0.4 7.6l-4.7 0.3l-0.4 -7.6zM380.8 617.8l0.3 5.2l-5.3 0.3l-0.3 -5.2zM386.4 592.5l0.2 3.6l3.8 -0.2l-0.2 -3.6zM386.9 598.0l0.3 5.8l4.5 -0.2l-0.3 -5.8zM387.2 604.9l0.4 6.6l4.4 -0.2l-0.4 -6.6zM387.6 612.4l0.3 5.7l5.5 -0.3l-0.3 -5.7zM388.3 620.0l0.2 3.7l6.0 -0.3l-0.2 -3.7zM344.0 596.9l5.5 0.0l-0.0 5.0l-5.5 -0.0zM351.6 595.9l4.4 0.0l-0.0 6.0l-4.4 -0.0zM362.9 596.8l4.8 0.0l-0.0 4.6l-4.8 -0.0zM343.6 589.0l5.3 0.0l0.0 -5.5l-5.3 -0.0zM350.6 588.6l6.9 0.0l0.0 -6.2l-6.9 -0.0zM359.0 589.1l3.8 0.0l0.0 -6.0l-3.8 -0.0zM364.5 589.5l7.3 0.0l0.0 -6.2l-7.3 -0.0zM451.3 594.2l0.3 6.4l-5.2 0.2l-0.3 -6.4zM451.8 601.5l0.3 6.7l-4.3 0.2l-0.3 -6.7zM452.3 617.4l0.3 6.9l-4.6 0.2l-0.3 -6.9zM452.8 632.9l0.3 7.5l-4.5 0.2l-0.3 -7.5zM458.8 593.9l0.3 7.2l4.0 -0.2l-0.3 -7.2zM459.1 602.3l0.2 5.4l6.4 -0.3l-0.2 -5.4zM459.2 609.9l0.3 8.2l4.1 -0.2l-0.3 -8.2zM460.6 625.5l0.2 4.8l4.1 -0.2l-0.2 -4.8zM460.8 632.4l0.3 6.7l5.8 -0.2l-0.3 -6.7zM490.2 592.8l0.2 6.3l-5.5 0.2l-0.2 -6.3zM490.6 600.9l0.3 8.1l-5.1 0.2l-0.3 -8.1zM490.8 610.2l0.3 7.4l-3.6 0.1l-0.3 -7.4zM491.0 619.5l0.3 8.2l-4.3 0.2l-0.3 -8.2zM498.1 609.7l0.2 5.2l4.1 -0.2l-0.2 -5.2zM497.9 617.0l0.3 6.8l6.2 -0.2l-0.3 -6.8zM498.7 624.8l0.2 5.6l5.0 -0.2l-0.2 -5.6zM458.0 612.5l7.7 -0.4l0.2 3.9l-7.7 0.4zM477.2 611.7l6.7 -0.3l0.3 6.1l-6.7 0.3zM485.0 611.5l6.6 -0.3l0.2 4.3l-6.6 0.3zM456.6 604.7l4.6 -0.2l-0.2 -4.2l-4.6 0.2zM462.1 604.5l7.5 -0.4l-0.2 -4.6l-7.5 0.4zM471.4 604.6l5.1 -0.3l-0.2 -3.5l-5.1 0.3zM483.5 603.7l3.7 -0.2l-0.3 -6.0l-3.7 0.2zM488.2 603.3l5.2 -0.3l-0.2 -4.5l-5.2 0.3zM458.9 633.0l7.7 -0.4l0.3 5.9l-7.7 0.4zM468.1 632.4l3.6 -0.2l0.3 5.0l-3.6 0.2zM473.1 632.1l7.1 -0.4l0.3 5.2l-7.1 0.4zM458.2 625.2l5.9 -0.3l-0.2 -3.9l-5.9 0.3zM465.5 625.2l5.8 -0.3l-0.2 -4.5l-5.8 0.3zM472.4 624.9l4.5 -0.2l-0.3 -5.7l-4.5 0.2zM478.3 624.1l7.0 -0.4l-0.2 -4.1l-7.0 0.4zM423.3 596.8l7.1 0.0l-0.0 3.7l-7.1 -0.0zM431.5 596.1l7.1 0.0l-0.0 5.4l-7.1 -0.0zM423.1 589.2l8.5 0.0l0.0 -4.4l-8.5 -0.0zM432.5 589.4l8.0 0.0l0.0 -5.9l-8.0 -0.0zM627.8 427.4l-1.4 3.8l4.9 1.8l1.4 -3.8zM685.9 425.6l-2.4 7.2l-5.7 -1.9l2.4 -7.2zM692.2 428.2l-2.5 7.5l4.7 1.6l2.5 -7.5zM689.1 437.3l-2.5 7.6l4.4 1.5l2.5 -7.6zM686.8 446.0l-1.4 4.3l4.6 1.5l1.4 -4.3zM679.2 451.7l-5.7 -1.1l0.9 -4.6l5.7 1.1zM671.8 449.6l-6.6 -1.3l1.1 -5.5l6.6 1.3zM676.7 458.4l-3.7 -0.7l-0.8 4.1l3.7 0.7zM670.9 456.9l-7.3 -1.5l-1.2 5.9l7.3 1.5zM701.8 446.2l8.1 -2.0l1.4 5.7l-8.1 2.0zM704.6 438.2l6.8 -1.7l-1.0 -3.9l-6.8 1.7zM659.6 489.8l-3.2 5.8l-4.6 -2.6l3.2 -5.8zM654.8 496.9l-3.1 5.4l-3.8 -2.1l3.1 -5.4zM651.6 503.8l-1.8 3.2l-5.2 -2.9l1.8 -3.2zM648.2 508.2l-3.3 5.9l-3.6 -2.0l3.3 -5.9zM665.3 493.5l-3.8 6.8l5.3 3.0l3.8 -6.8zM656.9 509.1l-3.6 6.4l3.1 1.7l3.6 -6.4zM652.8 516.3l-3.2 5.7l4.4 2.5l3.2 -5.7zM651.0 533.6l5.4 5.4l-4.0 4.0l-5.4 -5.4zM662.2 544.0l4.0 4.0l-4.0 4.0l-4.0 -4.0zM649.3 520.3l2.8 2.8l3.4 -3.4l-2.8 -2.8zM653.2 525.1l5.2 5.2l4.3 -4.3l-5.2 -5.2zM660.3 531.4l3.4 3.4l3.3 -3.3l-3.4 -3.4zM664.3 535.3l5.7 5.7l3.2 -3.2l-5.7 -5.7zM670.6 550.7l5.8 2.1l-1.3 3.6l-5.8 -2.1zM678.2 553.5l5.0 1.9l-1.8 4.8l-5.0 -1.9zM685.1 556.4l6.3 2.3l-1.8 4.8l-6.3 -2.3zM693.6 558.9l6.5 2.4l-2.2 6.0l-6.5 -2.4zM700.8 562.3l7.5 2.8l-1.2 3.3l-7.5 -2.8zM709.5 565.3l4.1 1.5l-1.7 4.5l-4.1 -1.5zM715.3 567.4l6.8 2.5l-1.5 4.0l-6.8 -2.5zM672.1 543.1l4.5 1.7l2.2 -6.0l-4.5 -1.7zM678.0 545.9l6.1 2.3l1.9 -5.2l-6.1 -2.3zM685.4 548.2l3.4 1.2l1.6 -4.3l-3.4 -1.2zM689.6 550.1l7.8 2.9l1.9 -5.2l-7.8 -2.9zM698.6 553.2l3.8 1.4l1.5 -4.1l-3.8 -1.4zM703.8 554.7l6.7 2.5l1.3 -3.5l-6.7 -2.5zM716.7 560.1l7.0 2.6l1.9 -5.2l-7.0 -2.6zM665.1 546.3l-2.7 3.3l-4.2 -3.5l2.7 -3.3zM660.9 550.5l-2.7 3.2l-2.9 -2.4l2.7 -3.2zM656.7 555.3l-4.1 4.9l-3.2 -2.7l4.1 -4.9zM652.6 561.3l-2.7 3.2l-4.9 -4.1l2.7 -3.2zM670.5 550.4l-3.0 3.7l3.5 2.9l3.0 -3.7zM666.4 555.3l-4.8 5.7l3.3 2.8l4.8 -5.7zM661.1 562.3l-2.9 3.4l3.2 2.7l2.9 -3.4zM657.5 566.9l-3.8 4.5l4.7 3.9l3.8 -4.5zM645.7 568.3l-2.9 2.2l-3.0 -3.8l2.9 -2.2zM642.4 571.5l-3.1 2.4l-2.4 -3.0l3.1 -2.4zM637.9 574.7l-4.5 3.5l-2.4 -3.0l4.5 -3.5zM642.9 579.8l-6.1 4.8l2.4 3.0l6.1 -4.8zM684.0 554.1l-5.9 5.1l-2.7 -3.1l5.9 -5.1zM677.7 560.3l-4.4 3.8l-3.7 -4.3l4.4 -3.8zM672.2 564.1l-3.4 2.9l-3.6 -4.2l3.4 -2.9zM668.1 568.3l-4.5 3.8l-2.6 -3.1l4.5 -3.8zM663.1 572.9l-2.8 2.4l-3.2 -3.7l2.8 -2.4zM683.1 565.7l-6.2 5.4l3.7 4.3l6.2 -5.4zM670.2 575.7l-3.0 2.5l2.7 3.2l3.0 -2.5zM617.8 584.6l5.1 4.6l-2.4 2.6l-5.1 -4.6zM629.7 596.1l4.9 4.4l-2.8 3.1l-4.9 -4.4zM636.5 601.4l4.3 3.9l-2.8 3.1l-4.3 -3.9zM642.5 606.6l3.9 3.5l-3.7 4.1l-3.9 -3.5zM646.8 610.9l5.7 5.1l-2.4 2.6l-5.7 -5.1zM653.9 616.9l4.7 4.2l-3.8 4.2l-4.7 -4.2zM623.9 579.6l3.1 2.9l2.6 -2.9l-3.1 -2.9zM627.8 583.8l2.8 2.5l2.8 -3.1l-2.8 -2.5zM636.5 592.2l6.1 5.6l2.9 -3.2l-6.1 -5.6zM644.4 599.0l6.0 5.4l2.6 -2.8l-6.0 -5.4zM651.3 604.6l6.2 5.6l4.1 -4.5l-6.2 -5.6zM658.1 611.6l5.6 5.1l3.7 -4.0l-5.6 -5.1zM633.7 607.0l-2.9 3.4l-2.9 -2.4l2.9 -3.4zM644.6 605.1l-3.1 3.7l3.2 2.7l3.1 -3.7zM640.7 609.8l-2.5 3.0l4.4 3.7l2.5 -3.0zM487.8 518.5l0.0 3.5l-4.9 0.0l-0.0 -3.5zM488.0 523.8l0.0 4.4l-6.4 0.0l-0.0 -4.4zM495.0 517.7l0.0 6.8l5.8 -0.0l-0.0 -6.8zM495.2 525.5l0.0 4.8l3.6 -0.0l-0.0 -4.8zM495.2 531.3l0.0 3.9l5.2 -0.0l-0.0 -3.9zM494.8 537.3l0.0 7.0l4.8 -0.0l-0.0 -7.0zM486.9 546.3l-2.2 3.7l-4.0 -2.3l2.2 -3.7zM479.4 559.2l-2.3 3.9l-5.0 -2.9l2.3 -3.9zM493.5 549.9l-2.3 3.9l3.1 1.8l2.3 -3.9zM490.2 555.0l-1.9 3.3l3.0 1.8l1.9 -3.3zM475.7 567.0l-5.1 0.6l-0.6 -5.0l5.1 -0.6zM469.4 568.2l-4.8 0.6l-0.5 -3.6l4.8 -0.6zM475.7 574.3l-6.9 0.9l0.5 4.3l6.9 -0.9zM455.8 731.5l3.7 -0.4l0.5 3.9l-3.7 0.4zM461.3 730.7l4.6 -0.5l0.7 5.9l-4.6 0.5zM467.7 729.6l4.4 -0.5l0.7 5.6l-4.4 0.5zM474.1 728.8l3.9 -0.5l0.6 5.5l-3.9 0.5zM479.6 728.2l6.4 -0.8l0.5 3.8l-6.4 0.8zM487.7 727.7l5.6 -0.7l0.6 5.1l-5.6 0.7zM495.1 726.7l4.6 -0.5l0.5 4.3l-4.6 0.5zM501.3 725.6l8.0 -0.9l0.5 4.1l-8.0 0.9zM516.6 723.9l7.0 -0.8l0.8 6.3l-7.0 0.8zM525.5 722.6l7.1 -0.8l0.4 3.6l-7.1 0.8zM455.5 723.9l5.8 -0.7l-0.5 -4.1l-5.8 0.7zM462.3 723.5l5.3 -0.6l-0.7 -5.6l-5.3 0.6zM469.0 722.1l3.8 -0.5l-0.6 -4.6l-3.8 0.5zM474.3 721.4l4.6 -0.5l-0.5 -4.4l-4.6 0.5zM487.8 720.3l6.5 -0.8l-0.5 -3.8l-6.5 0.8zM495.8 719.1l3.7 -0.4l-0.8 -6.4l-3.7 0.4zM501.4 718.1l6.6 -0.8l-0.5 -4.4l-6.6 0.8zM508.9 717.1l5.6 -0.7l-0.4 -3.7l-5.6 0.7zM516.0 717.1l3.7 -0.4l-0.5 -4.3l-3.7 0.4zM526.9 715.6l4.3 -0.5l-0.5 -4.0l-4.3 0.5zM533.1 714.9l4.1 -0.5l-0.5 -4.2l-4.1 0.5zM550.6 716.5l6.0 -2.6l1.8 4.0l-6.0 2.6zM557.9 713.4l3.8 -1.7l1.7 3.7l-3.8 1.7zM563.7 711.0l4.7 -2.1l1.7 3.9l-4.7 2.1zM569.4 708.2l3.9 -1.7l2.5 5.5l-3.9 1.7zM543.8 710.8l5.8 -2.6l-1.4 -3.2l-5.8 2.6zM560.9 703.7l4.4 -2.0l-1.9 -4.2l-4.4 2.0zM566.4 701.0l3.7 -1.6l-1.7 -3.8l-3.7 1.6zM589.1 754.2l4.1 -1.0l1.5 6.1l-4.1 1.0zM594.9 752.4l3.6 -0.9l1.5 5.9l-3.6 0.9zM600.1 751.2l7.2 -1.8l1.4 5.7l-7.2 1.8zM609.4 749.4l4.6 -1.1l0.9 3.7l-4.6 1.1zM615.1 747.4l4.5 -1.1l0.9 3.6l-4.5 1.1zM628.1 744.9l4.9 -1.2l1.3 5.2l-4.9 1.2zM549.4 756.1l3.9 -1.0l-1.2 -5.1l-3.9 1.0zM555.3 754.8l5.4 -1.3l-1.5 -6.0l-5.4 1.3zM562.2 752.6l5.2 -1.3l-1.5 -6.2l-5.2 1.3zM569.2 751.3l3.6 -0.9l-1.3 -5.1l-3.6 0.9zM574.2 750.2l3.8 -0.9l-1.2 -4.9l-3.8 0.9zM579.8 748.3l4.5 -1.1l-1.4 -5.6l-4.5 1.1zM586.1 746.7l8.2 -2.0l-1.1 -4.7l-8.2 2.0zM595.8 745.1l4.4 -1.1l-1.0 -4.3l-4.4 1.1zM601.3 743.0l6.1 -1.5l-1.2 -4.9l-6.1 1.5zM609.0 741.1l8.3 -2.0l-1.2 -5.0l-8.3 2.0zM619.1 738.6l6.1 -1.5l-1.4 -5.6l-6.1 1.5zM650.6 738.7l5.4 -1.4l1.3 5.1l-5.4 1.4zM657.1 736.9l5.9 -1.5l1.2 4.7l-5.9 1.5zM663.9 735.3l6.9 -1.8l1.5 5.6l-6.9 1.8zM671.9 733.3l4.2 -1.1l1.3 5.1l-4.2 1.1zM678.0 731.4l6.9 -1.8l1.5 5.6l-6.9 1.8zM695.0 727.4l5.5 -1.4l1.0 3.6l-5.5 1.4zM707.0 723.7l5.0 -1.3l1.5 5.6l-5.0 1.3zM713.1 722.1l5.4 -1.4l1.4 5.2l-5.4 1.4zM719.7 720.4l3.8 -1.0l1.0 3.9l-3.8 1.0zM647.1 732.4l5.7 -1.5l-1.0 -4.0l-5.7 1.5zM654.3 730.3l3.7 -1.0l-1.4 -5.4l-3.7 1.0zM660.2 729.0l5.4 -1.4l-1.2 -4.4l-5.4 1.4zM684.1 722.2l5.3 -1.4l-1.2 -4.6l-5.3 1.4zM690.6 720.3l6.9 -1.8l-1.6 -6.1l-6.9 1.8zM698.5 718.2l7.2 -1.9l-1.3 -5.1l-7.2 1.9zM707.4 715.9l6.0 -1.6l-1.2 -4.6l-6.0 1.6zM714.5 714.4l7.3 -1.9l-0.9 -3.5l-7.3 1.9zM367.7 773.4l6.7 -0.4l0.3 4.9l-6.7 0.4zM375.6 772.7l7.4 -0.5l0.3 4.3l-7.4 0.5zM384.4 772.5l8.0 -0.5l0.3 5.1l-8.0 0.5zM393.6 771.2l4.3 -0.3l0.4 5.6l-4.3 0.3zM398.7 771.1l7.5 -0.5l0.3 3.9l-7.5 0.5zM431.2 769.3l5.4 -0.3l0.2 3.8l-5.4 0.3zM438.6 768.3l8.4 -0.5l0.2 3.6l-8.4 0.5zM447.9 767.8l7.0 -0.5l0.3 5.4l-7.0 0.5zM455.9 768.1l6.5 -0.4l0.4 5.5l-6.5 0.4zM464.6 767.6l5.7 -0.4l0.3 4.7l-5.7 0.4zM471.4 766.3l8.5 -0.5l0.4 5.6l-8.5 0.5zM480.9 766.2l5.2 -0.3l0.4 5.7l-5.2 0.3zM487.0 765.6l3.7 -0.2l0.3 4.8l-3.7 0.2zM492.6 765.7l7.9 -0.5l0.3 5.3l-7.9 0.5zM501.7 764.4l7.8 -0.5l0.4 6.2l-7.8 0.5zM357.7 766.5l6.9 -0.4l-0.2 -3.5l-6.9 0.4zM366.6 765.9l3.5 -0.2l-0.4 -5.9l-3.5 0.2zM380.8 765.3l8.1 -0.5l-0.3 -5.3l-8.1 0.5zM400.0 764.0l8.4 -0.5l-0.4 -5.6l-8.4 0.5zM409.7 763.4l6.5 -0.4l-0.3 -4.0l-6.5 0.4zM418.3 763.0l8.1 -0.5l-0.2 -3.7l-8.1 0.5zM428.4 762.1l7.3 -0.5l-0.3 -5.2l-7.3 0.5zM437.8 761.6l8.2 -0.5l-0.2 -3.8l-8.2 0.5zM447.8 761.0l4.1 -0.3l-0.4 -6.1l-4.1 0.3zM453.3 760.2l7.1 -0.5l-0.3 -5.4l-7.1 0.5zM461.4 759.5l4.6 -0.3l-0.3 -5.5l-4.6 0.3zM467.1 759.2l8.2 -0.5l-0.4 -6.5l-8.2 0.5zM476.7 758.4l7.3 -0.5l-0.3 -4.9l-7.3 0.5zM486.0 758.1l5.9 -0.4l-0.2 -3.8l-5.9 0.4zM493.7 758.2l3.8 -0.2l-0.4 -6.5l-3.8 0.2zM516.6 764.1l3.7 0.0l-0.0 4.9l-3.7 -0.0zM521.8 764.2l5.2 0.0l-0.0 6.3l-5.2 -0.0zM528.0 763.6l4.1 0.0l-0.0 4.1l-4.1 -0.0zM533.6 764.3l8.1 0.0l-0.0 4.9l-8.1 -0.0zM533.5 756.2l6.9 0.0l0.0 -5.7l-6.9 -0.0zM488.7 832.0l6.1 -1.3l1.0 4.6l-6.1 1.3zM495.9 830.7l5.8 -1.3l0.9 4.2l-5.8 1.3zM503.0 829.4l6.3 -1.4l0.8 3.9l-6.3 1.4zM520.9 824.7l5.3 -1.2l1.1 5.0l-5.3 1.2zM527.6 824.0l4.0 -0.9l0.9 4.3l-4.0 0.9zM533.2 822.4l6.8 -1.5l1.0 4.5l-6.8 1.5zM542.0 820.2l7.6 -1.7l1.2 5.4l-7.6 1.7zM550.8 818.0l8.2 -1.8l0.9 4.1l-8.2 1.8zM561.3 816.5l6.1 -1.3l0.9 4.0l-6.1 1.3zM577.5 812.6l6.7 -1.5l1.2 5.5l-6.7 1.5zM585.0 810.9l8.2 -1.8l0.9 4.3l-8.2 1.8zM487.6 825.0l6.3 -1.4l-1.3 -5.8l-6.3 1.4zM494.5 822.8l7.5 -1.6l-0.8 -3.7l-7.5 1.6zM504.1 820.9l5.9 -1.3l-1.0 -4.4l-5.9 1.3zM512.1 819.1l3.7 -0.8l-1.3 -5.9l-3.7 0.8zM518.0 817.6l4.7 -1.0l-0.8 -3.9l-4.7 1.0zM524.2 817.1l8.3 -1.8l-1.4 -6.3l-8.3 1.8zM542.2 812.7l4.7 -1.0l-0.8 -3.8l-4.7 1.0zM547.9 811.5l7.3 -1.6l-0.8 -3.9l-7.3 1.6zM556.7 809.7l5.4 -1.2l-1.1 -5.0l-5.4 1.2zM568.7 807.2l4.6 -1.0l-0.8 -3.7l-4.6 1.0zM583.6 804.1l5.6 -1.2l-1.1 -4.9l-5.6 1.2zM591.2 802.0l3.8 -0.8l-0.8 -3.7l-3.8 0.8zM599.2 807.6l5.0 -0.9l0.9 4.9l-5.0 0.9zM606.2 806.6l4.9 -0.9l0.8 4.4l-4.9 0.9zM618.4 804.3l6.6 -1.3l0.7 3.9l-6.6 1.3zM626.7 802.7l5.1 -1.0l0.7 3.7l-5.1 1.0zM633.5 801.0l4.3 -0.8l1.0 5.4l-4.3 0.8zM639.2 800.1l7.9 -1.5l0.7 3.4l-7.9 1.5zM648.2 798.4l3.9 -0.7l1.0 5.5l-3.9 0.7zM654.2 797.4l6.7 -1.3l0.8 4.1l-6.7 1.3zM668.0 794.6l8.0 -1.5l0.7 3.7l-8.0 1.5zM677.5 793.5l6.7 -1.3l0.9 4.9l-6.7 1.3zM686.0 791.1l7.4 -1.4l0.9 4.8l-7.4 1.4zM702.9 788.0l3.7 -0.7l1.1 5.5l-3.7 0.7zM708.5 787.4l3.7 -0.7l1.0 5.2l-3.7 0.7zM607.2 799.4l7.0 -1.3l-0.7 -3.8l-7.0 1.3zM635.9 793.6l6.2 -1.2l-0.8 -4.0l-6.2 1.2zM643.6 792.2l5.3 -1.0l-0.9 -4.9l-5.3 1.0zM650.5 791.0l5.9 -1.1l-0.9 -4.9l-5.9 1.1zM657.7 789.0l6.1 -1.2l-0.8 -4.3l-6.1 1.2zM665.7 787.9l6.0 -1.1l-0.8 -4.2l-6.0 1.1zM680.3 785.1l5.8 -1.1l-1.1 -5.6l-5.8 1.1zM687.2 784.0l4.9 -0.9l-0.9 -4.5l-4.9 0.9zM693.9 782.3l4.6 -0.9l-1.1 -5.7l-4.6 0.9zM700.3 781.7l6.8 -1.3l-0.8 -4.2l-6.8 1.3zM560.0 848.4l7.4 -1.1l0.8 5.7l-7.4 1.1zM576.9 846.6l7.8 -1.1l0.7 4.8l-7.8 1.1zM601.1 842.2l5.6 -0.8l0.6 4.0l-5.6 0.8zM608.6 841.2l7.9 -1.2l0.7 4.8l-7.9 1.2zM617.9 840.0l3.6 -0.5l0.7 4.6l-3.6 0.5zM622.7 839.1l7.2 -1.1l0.7 4.5l-7.2 1.1zM631.7 837.8l3.6 -0.5l0.8 5.5l-3.6 0.5zM636.9 837.4l7.7 -1.1l0.9 6.2l-7.7 1.1zM645.7 836.2l5.1 -0.7l0.5 3.6l-5.1 0.7zM652.0 835.0l6.0 -0.9l0.6 3.8l-6.0 0.9zM665.3 833.1l4.7 -0.7l0.9 6.0l-4.7 0.7zM671.1 832.6l3.7 -0.5l0.9 5.8l-3.7 0.5zM676.6 831.3l5.8 -0.9l0.9 6.4l-5.8 0.9zM683.3 830.4l6.6 -1.0l0.8 5.8l-6.6 1.0zM691.9 829.2l7.4 -1.1l0.6 3.8l-7.4 1.1zM700.4 827.5l8.4 -1.2l0.5 3.7l-8.4 1.2zM710.2 826.6l3.9 -0.6l0.5 3.7l-3.9 0.6zM566.4 840.1l4.5 -0.7l-0.9 -6.1l-4.5 0.7zM579.4 838.5l5.3 -0.8l-0.6 -3.8l-5.3 0.8zM586.3 836.8l5.1 -0.7l-0.9 -6.0l-5.1 0.7zM592.7 836.2l5.2 -0.8l-0.7 -4.7l-5.2 0.8zM599.0 835.5l5.7 -0.8l-0.7 -4.7l-5.7 0.8zM605.8 834.7l7.6 -1.1l-0.7 -4.6l-7.6 1.1zM615.1 833.1l8.2 -1.2l-0.8 -5.5l-8.2 1.2zM625.1 831.8l4.4 -0.6l-0.6 -4.0l-4.4 0.6zM631.2 830.7l6.7 -1.0l-0.6 -3.9l-6.7 1.0zM639.5 829.4l5.0 -0.7l-0.7 -5.1l-5.0 0.7zM645.5 828.5l4.1 -0.6l-0.6 -4.4l-4.1 0.6zM651.3 827.4l7.3 -1.1l-0.8 -5.2l-7.3 1.1zM659.7 826.1l6.3 -0.9l-0.8 -5.7l-6.3 0.9zM667.4 825.9l7.5 -1.1l-0.8 -5.4l-7.5 1.1zM675.7 823.8l8.1 -1.2l-0.9 -6.3l-8.1 1.2zM685.6 822.3l4.3 -0.6l-0.9 -5.9l-4.3 0.6zM691.5 821.5l5.6 -0.8l-0.9 -5.9l-5.6 0.8zM698.9 820.9l4.5 -0.7l-0.9 -6.1l-4.5 0.7zM704.7 820.3l3.8 -0.6l-0.5 -3.7l-3.8 0.6zM338.4 818.4l4.9 0.3l-0.4 6.3l-4.9 -0.3zM345.2 819.4l4.0 0.2l-0.4 6.3l-4.0 -0.2zM350.7 819.3l4.2 0.2l-0.3 5.6l-4.2 -0.2zM356.4 820.0l4.5 0.3l-0.4 6.4l-4.5 -0.3zM362.1 819.7l4.7 0.3l-0.3 5.6l-4.7 -0.3zM368.2 819.9l8.3 0.5l-0.3 4.6l-8.3 -0.5zM377.9 820.6l7.3 0.4l-0.3 5.7l-7.3 -0.4zM387.2 821.4l5.2 0.3l-0.3 5.7l-5.2 -0.3zM394.1 822.1l4.3 0.2l-0.4 6.2l-4.3 -0.2zM337.4 811.1l4.9 0.3l0.3 -5.4l-4.9 -0.3zM343.7 811.8l4.6 0.3l0.3 -4.8l-4.6 -0.3zM349.1 812.2l7.6 0.4l0.3 -5.1l-7.6 -0.4zM358.4 812.2l7.4 0.4l0.2 -4.4l-7.4 -0.4zM377.1 813.8l4.4 0.3l0.2 -3.8l-4.4 -0.3zM382.9 814.1l4.6 0.3l0.3 -6.1l-4.6 -0.3zM388.8 814.2l6.4 0.4l0.2 -4.1l-6.4 -0.4zM407.4 822.5l3.6 0.7l-1.1 5.7l-3.6 -0.7zM412.6 823.8l7.3 1.5l-0.9 4.3l-7.3 -1.5zM421.6 825.7l6.6 1.3l-0.9 4.5l-6.6 -1.3zM429.7 826.8l6.8 1.4l-0.8 3.9l-6.8 -1.4zM438.1 828.5l7.5 1.5l-1.2 6.0l-7.5 -1.5zM446.5 830.3l4.7 0.9l-0.7 3.7l-4.7 -0.9zM452.6 831.4l5.7 1.1l-0.9 4.5l-5.7 -1.1zM460.1 833.5l4.5 0.9l-0.7 3.5l-4.5 -0.9zM465.8 834.7l7.3 1.5l-1.3 6.4l-7.3 -1.5zM409.3 815.1l8.0 1.6l0.9 -4.6l-8.0 -1.6zM418.5 817.1l5.9 1.2l0.9 -4.7l-5.9 -1.2zM432.9 820.2l5.4 1.1l1.1 -5.4l-5.4 -1.1zM439.9 821.8l4.6 0.9l1.0 -5.1l-4.6 -0.9zM446.5 822.9l7.7 1.5l1.3 -6.3l-7.7 -1.5zM455.1 824.5l7.6 1.5l1.0 -4.8l-7.6 -1.5zM463.6 826.3l7.0 1.4l0.8 -4.0l-7.0 -1.4zM472.2 828.3l3.5 0.7l0.9 -4.7l-3.5 -0.7zM480.3 835.8l6.1 -3.1l2.0 3.9l-6.1 3.1zM445.6 674.6l0.5 7.1l-4.6 0.3l-0.5 -7.1zM445.6 682.8l0.4 5.6l-3.9 0.3l-0.4 -5.6zM446.8 696.4l0.3 5.1l-5.4 0.4l-0.3 -5.1zM447.1 703.5l0.3 4.9l-3.8 0.3l-0.3 -4.9zM448.2 709.2l0.3 4.5l-4.8 0.3l-0.3 -4.5zM448.9 723.7l0.3 4.7l-5.2 0.3l-0.3 -4.7zM449.7 729.8l0.5 8.1l-4.4 0.3l-0.5 -8.1zM450.4 739.4l0.5 8.1l-3.8 0.3l-0.5 -8.1zM450.8 748.8l0.4 5.4l-3.9 0.3l-0.4 -5.4zM450.9 755.6l0.3 4.6l-3.7 0.2l-0.3 -4.6zM453.3 674.3l0.5 7.6l4.7 -0.3l-0.5 -7.6zM453.4 687.8l0.4 5.5l5.3 -0.4l-0.4 -5.5zM454.3 695.3l0.5 7.0l5.3 -0.4l-0.5 -7.0zM454.7 704.0l0.3 4.4l4.8 -0.3l-0.3 -4.4zM455.7 715.4l0.4 6.0l4.2 -0.3l-0.4 -6.0zM456.9 737.7l0.5 8.2l4.3 -0.3l-0.5 -8.2zM457.4 747.9l0.6 8.5l5.4 -0.4l-0.6 -8.5zM451.9 767.2l0.8 4.4l-4.8 0.9l-0.8 -4.4zM453.6 773.2l0.7 4.0l-4.8 0.9l-0.7 -4.0zM454.3 778.9l0.8 4.4l-6.3 1.2l-0.8 -4.4zM455.2 784.6l1.3 6.9l-5.6 1.1l-1.3 -6.9zM461.3 816.3l1.4 7.5l-6.0 1.1l-1.4 -7.5zM459.4 766.2l1.4 7.6l5.4 -1.0l-1.4 -7.6zM461.2 774.8l0.8 4.5l4.4 -0.8l-0.8 -4.5zM463.0 786.0l0.9 4.9l4.2 -0.8l-0.9 -4.9zM463.8 792.4l1.0 5.3l3.5 -0.7l-1.0 -5.3zM465.2 799.6l1.5 8.2l4.1 -0.8l-1.5 -8.2zM467.2 808.9l1.3 6.9l5.2 -1.0l-1.3 -6.9zM476.6 654.0l0.5 7.0l-5.1 0.4l-0.5 -7.0zM477.2 662.9l0.4 4.8l-4.7 0.4l-0.4 -4.8zM478.6 686.6l0.4 5.3l-3.8 0.3l-0.4 -5.3zM479.6 693.2l0.5 6.7l-5.5 0.4l-0.5 -6.7zM480.1 702.0l0.4 5.8l-5.8 0.4l-0.4 -5.8zM481.0 718.4l0.3 4.1l-3.9 0.3l-0.3 -4.1zM483.9 645.7l0.4 5.7l5.9 -0.4l-0.4 -5.7zM483.9 653.1l0.3 4.4l3.7 -0.3l-0.3 -4.4zM484.9 665.8l0.6 7.4l5.2 -0.4l-0.6 -7.4zM485.7 674.3l0.4 5.5l5.4 -0.4l-0.4 -5.5zM485.7 681.3l0.6 8.5l4.1 -0.3l-0.6 -8.5zM487.3 691.0l0.3 3.8l4.8 -0.4l-0.3 -3.8zM487.1 696.7l0.6 7.7l5.2 -0.4l-0.6 -7.7zM487.8 706.0l0.4 4.8l5.3 -0.4l-0.4 -4.8zM488.7 711.7l0.4 5.9l4.7 -0.4l-0.4 -5.9zM488.2 744.9l2.3 7.6l-4.1 1.2l-2.3 -7.6zM490.4 754.3l2.1 7.0l-5.1 1.5l-2.1 -7.0zM495.1 770.1l1.0 3.5l-4.7 1.4l-1.0 -3.5zM496.8 775.0l1.9 6.3l-4.7 1.4l-1.9 -6.3zM490.2 725.5l1.0 3.4l4.3 -1.3l-1.0 -3.4zM491.4 730.9l1.1 3.5l5.2 -1.6l-1.1 -3.5zM493.0 736.3l1.3 4.4l5.4 -1.6l-1.3 -4.4zM497.6 750.0l1.4 4.5l4.8 -1.5l-1.4 -4.5zM502.7 766.7l1.2 4.1l5.8 -1.7l-1.2 -4.1zM503.8 772.3l1.1 3.7l4.3 -1.3l-1.1 -3.7zM501.7 795.3l0.5 4.6l-6.3 0.7l-0.5 -4.6zM501.6 801.9l0.8 7.8l-5.9 0.6l-0.8 -7.8zM502.4 810.6l0.7 6.6l-6.0 0.6l-0.7 -6.6zM503.4 819.4l0.9 8.1l-4.4 0.5l-0.9 -8.1zM505.1 829.2l0.7 6.3l-4.3 0.5l-0.7 -6.3zM505.4 836.7l0.8 7.8l-6.1 0.6l-0.8 -7.8zM506.9 845.5l0.4 4.1l-5.8 0.6l-0.4 -4.1zM507.1 785.4l0.4 4.0l4.5 -0.5l-0.4 -4.0zM507.9 791.5l0.8 7.2l3.8 -0.4l-0.8 -7.2zM508.7 800.4l0.7 6.8l6.1 -0.6l-0.7 -6.8zM510.3 808.5l0.5 5.2l4.2 -0.4l-0.5 -5.2zM510.5 815.6l0.6 6.1l5.6 -0.6l-0.6 -6.1zM511.3 822.7l0.5 4.9l5.7 -0.6l-0.5 -4.9zM512.5 828.6l0.8 7.8l5.4 -0.6l-0.8 -7.8zM514.4 847.6l0.5 4.8l4.3 -0.4l-0.5 -4.8zM514.6 853.3l0.4 4.3l4.8 -0.5l-0.4 -4.3zM531.2 645.8l0.3 8.0l-4.6 0.2l-0.3 -8.0zM532.0 654.7l0.3 8.1l-5.5 0.2l-0.3 -8.1zM532.0 671.9l0.3 8.1l-4.9 0.2l-0.3 -8.1zM532.8 690.2l0.1 3.6l-6.0 0.2l-0.1 -3.6zM533.7 695.8l0.2 4.6l-5.8 0.2l-0.2 -4.6zM533.5 710.3l0.2 4.6l-4.6 0.2l-0.2 -4.6zM539.3 644.1l0.1 3.8l5.1 -0.2l-0.1 -3.8zM539.5 649.5l0.2 5.6l4.5 -0.2l-0.2 -5.6zM539.1 656.5l0.2 6.5l5.1 -0.2l-0.2 -6.5zM539.3 664.3l0.2 6.0l4.8 -0.2l-0.2 -6.0zM540.3 672.4l0.1 3.8l4.0 -0.1l-0.1 -3.8zM540.1 677.5l0.2 4.7l5.8 -0.2l-0.2 -4.7zM540.2 683.6l0.1 3.7l3.7 -0.1l-0.1 -3.7zM540.6 689.0l0.3 8.1l6.0 -0.2l-0.3 -8.1zM540.4 698.4l0.3 6.8l4.2 -0.2l-0.3 -6.8zM540.9 706.0l0.3 7.2l5.4 -0.2l-0.3 -7.2zM541.7 714.3l0.2 4.4l4.0 -0.2l-0.2 -4.4zM534.5 725.8l0.6 7.5l-5.3 0.4l-0.6 -7.5zM535.1 735.0l0.3 4.4l-6.4 0.5l-0.3 -4.4zM535.9 746.3l0.3 3.6l-4.8 0.4l-0.3 -3.6zM536.3 751.9l0.4 5.0l-4.2 0.3l-0.4 -5.0zM537.1 765.5l0.6 8.4l-4.6 0.3l-0.6 -8.4zM538.5 776.1l0.3 3.6l-5.1 0.4l-0.3 -3.6zM538.7 781.0l0.3 4.5l-5.8 0.4l-0.3 -4.5zM539.6 787.1l0.3 3.7l-5.8 0.4l-0.3 -3.7zM539.6 791.9l0.4 4.8l-5.5 0.4l-0.4 -4.8zM541.8 725.6l0.5 6.5l5.7 -0.4l-0.5 -6.5zM542.2 733.2l0.3 4.0l4.5 -0.3l-0.3 -4.0zM542.5 739.0l0.5 7.1l3.8 -0.3l-0.5 -7.1zM544.1 753.9l0.6 8.2l4.3 -0.3l-0.6 -8.2zM544.6 763.9l0.4 4.8l6.3 -0.5l-0.4 -4.8zM546.2 777.2l0.3 3.6l6.0 -0.4l-0.3 -3.6zM545.8 782.1l0.4 4.8l4.1 -0.3l-0.4 -4.8zM546.4 787.9l0.3 4.4l4.2 -0.3l-0.3 -4.4zM547.5 793.9l0.5 6.1l5.8 -0.4l-0.5 -6.1zM540.4 807.7l0.7 6.3l-4.9 0.5l-0.7 -6.3zM542.2 823.8l0.4 3.6l-5.6 0.6l-0.4 -3.6zM542.9 828.5l0.6 5.2l-5.0 0.5l-0.6 -5.2zM544.2 835.4l0.6 5.6l-6.4 0.7l-0.6 -5.6zM544.8 842.1l0.5 4.8l-3.8 0.4l-0.5 -4.8zM545.6 857.1l0.4 4.1l-4.1 0.4l-0.4 -4.1zM549.9 822.1l0.4 4.1l6.0 -0.6l-0.4 -4.1zM550.6 828.1l0.4 4.0l6.3 -0.7l-0.4 -4.0zM550.5 833.0l0.5 5.1l5.5 -0.6l-0.5 -5.1zM551.9 839.4l0.9 8.1l4.6 -0.5l-0.9 -8.1zM552.3 849.5l0.5 5.0l5.1 -0.5l-0.5 -5.0zM545.0 666.9l1.8 8.0l-6.2 1.4l-1.8 -8.0zM547.1 675.8l1.4 6.4l-3.5 0.8l-1.4 -6.4zM553.5 706.3l1.5 6.7l-5.1 1.1l-1.5 -6.7zM557.1 718.0l0.9 3.9l-6.2 1.4l-0.9 -3.9zM557.9 723.9l1.5 6.8l-4.9 1.1l-1.5 -6.8zM560.0 732.2l1.6 7.3l-3.8 0.8l-1.6 -7.3zM561.4 741.6l1.0 4.6l-4.8 1.1l-1.0 -4.6zM563.7 747.7l1.3 5.9l-4.9 1.1l-1.3 -5.9zM552.6 663.9l1.1 4.9l3.8 -0.8l-1.1 -4.9zM553.8 670.3l1.3 5.8l6.0 -1.3l-1.3 -5.8zM555.3 677.8l1.1 4.9l5.6 -1.2l-1.1 -4.9zM558.1 692.3l1.6 7.3l6.3 -1.4l-1.6 -7.3zM560.3 700.5l1.5 6.9l5.6 -1.2l-1.5 -6.9zM562.3 709.1l1.4 6.2l6.1 -1.4l-1.4 -6.2zM563.9 717.0l1.3 5.8l5.6 -1.3l-1.3 -5.8zM565.5 724.4l1.2 5.5l4.7 -1.0l-1.2 -5.5zM566.7 731.5l1.2 5.5l4.5 -1.0l-1.2 -5.5zM568.7 739.0l1.5 6.9l4.6 -1.0l-1.5 -6.9zM594.5 696.4l1.6 7.5l-4.1 0.9l-1.6 -7.5zM596.2 705.0l1.2 5.7l-4.6 0.9l-1.2 -5.7zM599.7 721.1l1.4 6.9l-4.8 1.0l-1.4 -6.9zM601.2 729.0l0.8 3.8l-5.8 1.2l-0.8 -3.8zM602.8 734.4l1.7 8.0l-5.2 1.1l-1.7 -8.0zM604.8 743.3l1.0 4.6l-6.2 1.3l-1.0 -4.6zM605.6 749.8l1.1 5.1l-5.1 1.1l-1.1 -5.1zM608.4 761.6l1.7 8.1l-4.4 0.9l-1.7 -8.1zM610.7 771.3l1.3 6.5l-5.3 1.1l-1.3 -6.5zM611.6 779.1l1.3 6.2l-3.9 0.8l-1.3 -6.2zM613.2 786.5l1.2 5.9l-4.2 0.9l-1.2 -5.9zM600.3 688.1l1.0 4.7l4.7 -1.0l-1.0 -4.7zM602.3 694.7l0.8 4.1l4.1 -0.8l-0.8 -4.1zM603.5 700.0l1.1 5.4l4.8 -1.0l-1.1 -5.4zM605.5 713.5l1.2 6.0l5.4 -1.1l-1.2 -6.0zM607.4 720.7l1.6 7.8l4.5 -0.9l-1.6 -7.8zM609.4 730.2l0.9 4.4l3.9 -0.8l-0.9 -4.4zM610.3 736.0l0.7 3.4l5.5 -1.1l-0.7 -3.4zM611.3 740.8l0.9 4.5l5.8 -1.2l-0.9 -4.5zM613.1 746.7l1.0 4.9l4.2 -0.9l-1.0 -4.9zM613.6 752.9l1.4 6.8l6.0 -1.3l-1.4 -6.8zM620.1 782.5l1.0 4.7l5.9 -1.2l-1.0 -4.7zM634.0 675.4l1.5 7.4l-6.3 1.3l-1.5 -7.4zM635.5 684.5l1.0 4.8l-3.7 0.7l-1.0 -4.8zM638.3 697.9l0.9 4.6l-3.9 0.8l-0.9 -4.6zM639.8 704.1l0.9 4.3l-6.0 1.2l-0.9 -4.3zM640.2 709.5l1.2 6.0l-4.8 1.0l-1.2 -6.0zM642.3 716.9l1.1 5.7l-3.6 0.7l-1.1 -5.7zM643.8 724.5l0.8 4.1l-5.2 1.0l-0.8 -4.1zM644.5 730.6l1.5 7.6l-5.5 1.1l-1.5 -7.6zM646.9 739.0l1.1 5.4l-3.9 0.8l-1.1 -5.4zM641.1 673.9l1.1 5.4l3.8 -0.8l-1.1 -5.4zM642.8 680.5l1.1 5.4l5.8 -1.2l-1.1 -5.4zM643.9 686.9l1.5 7.7l6.1 -1.2l-1.5 -7.7zM645.9 696.4l1.2 6.2l3.8 -0.8l-1.2 -6.2zM647.2 703.8l1.0 5.0l4.6 -0.9l-1.0 -5.0zM648.0 710.4l1.5 7.3l5.8 -1.2l-1.5 -7.3zM649.8 719.7l1.4 7.2l5.5 -1.1l-1.4 -7.2zM651.7 728.2l1.5 7.5l4.8 -1.0l-1.5 -7.5zM648.0 746.5l1.5 6.8l-4.6 1.0l-1.5 -6.8zM652.9 768.4l0.8 3.6l-5.8 1.3l-0.8 -3.6zM655.2 779.9l0.9 3.9l-3.8 0.9l-0.9 -3.9zM657.0 785.4l1.5 6.8l-6.1 1.4l-1.5 -6.8zM658.8 793.0l1.6 7.2l-3.9 0.9l-1.6 -7.2zM660.5 801.8l1.3 6.0l-6.1 1.4l-1.3 -6.0zM662.4 809.6l1.1 4.8l-6.2 1.4l-1.1 -4.8zM663.3 816.3l1.6 7.0l-4.8 1.1l-1.6 -7.0zM669.2 840.1l1.5 6.9l-4.8 1.1l-1.5 -6.9zM654.7 744.5l1.4 6.2l4.4 -1.0l-1.4 -6.2zM656.6 751.7l1.8 7.8l5.9 -1.3l-1.8 -7.8zM660.6 769.6l1.6 7.0l5.8 -1.3l-1.6 -7.0zM663.7 783.6l1.8 8.1l4.1 -0.9l-1.8 -8.1zM666.1 792.7l0.8 3.7l5.0 -1.1l-0.8 -3.7zM667.3 797.6l1.4 6.3l4.3 -1.0l-1.4 -6.3zM668.9 805.7l1.3 5.7l4.8 -1.1l-1.3 -5.7zM672.1 821.0l1.7 7.6l5.8 -1.3l-1.7 -7.6zM674.2 830.1l1.6 7.0l6.3 -1.4l-1.6 -7.0zM677.2 844.1l1.1 5.1l6.1 -1.4l-1.1 -5.1zM679.0 850.3l1.8 8.1l5.1 -1.2l-1.8 -8.1zM712.2 718.9l1.4 8.3l-6.2 1.0l-1.4 -8.3zM713.8 728.1l1.0 6.1l-6.3 1.0l-1.0 -6.1zM715.0 735.3l0.8 4.8l-5.1 0.9l-0.8 -4.8zM718.1 750.5l0.6 3.5l-4.7 0.8l-0.6 -3.5zM719.3 756.1l1.1 6.3l-4.2 0.7l-1.1 -6.3zM719.7 718.0l0.6 3.8l5.5 -0.9l-0.6 -3.8zM721.4 722.9l1.4 8.4l5.8 -1.0l-1.4 -8.4zM723.0 732.7l1.3 8.0l5.0 -0.8l-1.3 -8.0zM724.1 742.0l1.2 7.1l5.4 -0.9l-1.2 -7.1zM725.6 751.0l1.3 7.6l4.0 -0.7l-1.3 -7.6zM380.4 684.4l-1.2 4.1l-6.0 -1.8l1.2 -4.1zM378.5 689.8l-1.9 6.2l-4.6 -1.4l1.9 -6.2zM374.8 702.6l-2.3 7.6l-3.9 -1.2l2.3 -7.6zM372.3 710.9l-1.5 5.1l-3.4 -1.0l1.5 -5.1zM370.8 717.5l-2.4 8.0l-4.0 -1.2l2.4 -8.0zM367.9 726.4l-1.3 4.4l-4.6 -1.4l1.3 -4.4zM366.0 732.9l-1.7 5.6l-3.8 -1.1l1.7 -5.6zM363.8 739.8l-2.1 7.2l-3.9 -1.2l2.1 -7.2zM361.4 747.9l-2.3 7.7l-3.7 -1.1l2.3 -7.7zM358.5 757.4l-1.2 4.0l-5.1 -1.5l1.2 -4.0zM387.4 686.8l-1.9 6.3l4.6 1.4l1.9 -6.3zM384.9 694.0l-2.3 7.6l6.2 1.9l2.3 -7.6zM382.9 703.3l-1.9 6.4l5.5 1.6l1.9 -6.4zM380.5 710.8l-1.6 5.2l6.1 1.8l1.6 -5.2zM378.0 717.2l-1.3 4.3l4.3 1.3l1.3 -4.3zM374.1 730.9l-2.0 6.6l3.4 1.0l2.0 -6.6zM372.2 738.4l-1.0 3.5l4.9 1.5l1.0 -3.5zM370.4 743.4l-1.6 5.3l6.1 1.8l1.6 -5.3zM368.2 750.0l-1.4 4.6l5.6 1.7l1.4 -4.6zM366.9 755.4l-2.3 7.6l4.8 1.4l2.3 -7.6zM356.2 766.1l-0.8 4.0l-5.7 -1.1l0.8 -4.0zM353.2 779.0l-1.4 7.0l-5.5 -1.1l1.4 -7.0zM351.5 787.0l-1.3 6.7l-5.3 -1.1l1.3 -6.7zM350.8 795.1l-1.2 6.0l-3.5 -0.7l1.2 -6.0zM349.0 802.3l-1.6 8.2l-6.1 -1.2l1.6 -8.2zM346.6 812.3l-0.8 4.0l-5.6 -1.1l0.8 -4.0zM363.2 767.6l-1.2 6.0l4.1 0.8l1.2 -6.0zM362.1 775.6l-0.7 3.4l6.3 1.3l0.7 -3.4zM359.0 788.4l-1.6 8.2l3.7 0.7l1.6 -8.2zM356.8 798.3l-1.0 5.1l6.3 1.3l1.0 -5.1zM356.3 804.4l-1.7 8.3l4.9 1.0l1.7 -8.3zM354.4 814.5l-1.0 5.1l4.6 0.9l1.0 -5.1zM344.3 826.4l-0.9 5.5l-5.1 -0.9l0.9 -5.5zM342.9 832.7l-0.7 4.1l-3.6 -0.6l0.7 -4.1zM342.3 838.6l-0.7 4.5l-5.6 -0.9l0.7 -4.5zM340.6 844.9l-1.0 6.2l-4.6 -0.8l1.0 -6.2zM339.8 852.4l-1.1 6.6l-6.2 -1.0l1.1 -6.6zM350.4 833.0l-1.1 6.3l5.3 0.9l1.1 -6.3zM348.8 840.8l-0.6 3.5l6.4 1.1l0.6 -3.5zM348.3 846.2l-0.8 4.5l5.4 0.9l0.8 -4.5zM346.9 851.7l-0.6 3.5l4.2 0.7l0.6 -3.5zM346.4 856.5l-0.8 4.7l4.2 0.7l0.8 -4.7zM337.3 731.2l3.6 0.4l-0.6 6.0l-3.6 -0.4zM342.6 732.6l4.6 0.5l-0.6 6.2l-4.6 -0.5zM348.8 732.6l7.9 0.8l-0.4 3.8l-7.9 -0.8zM358.1 734.1l5.1 0.5l-0.6 5.3l-5.1 -0.5zM371.1 735.0l7.8 0.8l-0.7 6.2l-7.8 -0.8zM387.0 737.0l7.6 0.8l-0.5 4.6l-7.6 -0.8zM396.7 738.3l6.8 0.7l-0.4 4.2l-6.8 -0.7zM404.9 739.0l4.4 0.5l-0.4 3.9l-4.4 -0.5zM338.4 724.7l7.7 0.8l0.6 -5.7l-7.7 -0.8zM347.3 725.0l4.7 0.5l0.4 -3.9l-4.7 -0.5zM352.8 725.9l6.7 0.7l0.4 -3.7l-6.7 -0.7zM360.6 727.2l3.6 0.4l0.4 -3.8l-3.6 -0.4zM365.8 727.5l7.3 0.8l0.4 -4.2l-7.3 -0.8zM374.8 727.9l8.2 0.9l0.5 -4.7l-8.2 -0.9zM384.4 729.1l8.4 0.9l0.6 -5.8l-8.4 -0.9zM394.3 730.2l8.3 0.9l0.7 -6.4l-8.3 -0.9zM404.4 731.2l5.7 0.6l0.4 -4.2l-5.7 -0.6zM432.6 684.4l8.5 -0.7l0.5 5.9l-8.5 0.7zM423.7 677.6l5.8 -0.4l-0.4 -5.1l-5.8 0.4zM430.7 677.1l3.8 -0.3l-0.3 -4.0l-3.8 0.3zM436.0 676.6l6.1 -0.5l-0.4 -4.7l-6.1 0.5zM422.5 713.0l7.2 0.0l-0.0 5.0l-7.2 -0.0zM431.6 713.9l4.5 0.0l-0.0 4.6l-4.5 -0.0zM437.5 713.5l5.7 0.0l-0.0 5.2l-5.7 -0.0zM423.8 706.1l6.2 0.0l0.0 -5.2l-6.2 -0.0zM430.9 706.2l6.7 0.0l0.0 -4.4l-6.7 -0.0zM439.7 705.5l8.0 0.0l0.0 -4.2l-8.0 -0.0zM424.4 739.9l4.5 -0.3l0.4 5.9l-4.5 0.3zM444.5 737.8l5.9 -0.4l0.3 4.3l-5.9 0.4zM424.0 732.2l7.9 -0.5l-0.3 -5.2l-7.9 0.5zM424.2 759.3l6.4 -0.8l0.4 3.6l-6.4 0.8zM432.6 758.5l4.2 -0.5l0.6 5.0l-4.2 0.5zM438.4 758.2l4.2 -0.5l0.7 5.6l-4.2 0.5zM444.1 757.1l8.1 -1.0l0.7 6.2l-8.1 1.0zM422.3 752.3l4.8 -0.6l-0.7 -5.7l-4.8 0.6zM429.1 751.5l8.3 -1.0l-0.7 -6.1l-8.3 1.0zM438.8 749.9l6.0 -0.7l-0.7 -5.8l-6.0 0.7zM446.0 749.6l3.5 -0.4l-0.6 -5.3l-3.5 0.4zM345.5 703.8l3.7 0.0l-0.0 3.8l-3.7 -0.0zM350.2 703.3l5.3 0.0l-0.0 5.7l-5.3 -0.0zM353.5 703.2l1.5 3.8l-3.5 1.4l-1.5 -3.8zM362.5 713.3l7.3 0.8l-0.5 4.9l-7.3 -0.8zM371.8 715.1l4.6 0.5l-0.4 3.9l-4.6 -0.5zM361.7 705.8l3.5 0.4l0.7 -6.4l-3.5 -0.4zM366.4 706.5l4.0 0.4l0.6 -5.8l-4.0 -0.4zM372.4 707.3l3.5 0.4l0.6 -5.3l-3.5 -0.4zM351.2 689.6l1.2 4.5l-5.3 1.4l-1.2 -4.5zM357.9 688.2l1.5 5.5l5.0 -1.4l-1.5 -5.5zM359.8 695.9l1.7 6.2l4.3 -1.2l-1.7 -6.2zM486.2 689.2l5.8 0.0l-0.0 5.4l-5.8 -0.0zM493.2 689.0l6.2 0.0l-0.0 4.2l-6.2 -0.0zM489.7 682.1l6.9 0.0l0.0 -4.5l-6.9 -0.0zM498.0 682.1l5.3 0.0l0.0 -5.9l-5.3 -0.0zM505.1 681.7l4.6 0.0l0.0 -4.3l-4.6 -0.0zM657.8 673.5l3.1 5.4l-5.4 3.1l-3.1 -5.4zM661.5 680.2l2.9 5.1l-5.5 3.1l-2.9 -5.1zM664.7 686.8l2.2 3.9l-4.7 2.7l-2.2 -3.9zM667.9 691.9l3.6 6.3l-3.3 1.9l-3.6 -6.3zM676.7 701.6l5.8 0.0l-0.0 5.9l-5.8 -0.0zM672.2 813.5l4.3 -0.9l0.9 4.4l-4.3 0.9zM677.5 812.5l6.7 -1.3l1.1 5.3l-6.7 1.3zM686.2 810.7l7.7 -1.5l1.0 5.0l-7.7 1.5zM670.7 806.5l7.9 -1.6l-1.0 -4.9l-7.9 1.6zM679.9 805.2l5.7 -1.1l-0.8 -4.2l-5.7 1.1zM687.0 803.7l4.2 -0.8l-1.0 -4.9l-4.2 0.8zM474.5 835.0l0.6 3.9l-4.9 0.7l-0.6 -3.9zM474.9 841.0l1.0 6.9l-5.3 0.8l-1.0 -6.9zM475.7 849.4l0.6 4.4l-5.5 0.8l-0.6 -4.4zM477.0 854.7l0.9 6.3l-5.0 0.7l-0.9 -6.3zM483.6 847.9l0.7 4.9l5.9 -0.8l-0.7 -4.9zM484.6 854.4l0.7 4.8l5.9 -0.9l-0.7 -4.8zM528.6 847.1l3.8 -0.4l0.5 4.5l-3.8 0.4zM534.2 846.9l4.8 -0.5l0.4 4.1l-4.8 0.5zM540.6 845.4l8.0 -0.8l0.7 6.4l-8.0 0.8zM513.2 841.4l3.9 -0.4l-0.5 -5.0l-3.9 0.4zM524.9 840.1l7.7 -0.8l-0.4 -3.7l-7.7 0.8zM541.8 838.1l7.9 -0.8l-0.5 -4.5l-7.9 0.8zM564.1 845.4l3.2 2.3l-2.2 3.0l-3.2 -2.3zM568.9 848.9l6.8 4.9l-2.4 3.3l-6.8 -4.9zM574.0 843.0l6.1 4.3l3.7 -5.2l-6.1 -4.3zM581.7 854.2l6.6 -1.1l0.9 5.4l-6.6 1.1zM598.3 852.1l3.7 -0.6l0.6 3.6l-3.7 0.6zM603.2 850.9l5.2 -0.9l0.8 4.6l-5.2 0.9zM579.4 847.3l6.0 -1.0l-0.8 -4.9l-6.0 1.0zM594.8 845.1l4.1 -0.7l-1.0 -6.1l-4.1 0.7zM599.7 844.0l4.7 -0.8l-0.8 -4.7l-4.7 0.8zM337.0 848.5l4.1 0.5l-0.6 5.1l-4.1 -0.5zM342.4 849.5l6.8 0.8l-0.5 4.6l-6.8 -0.8zM351.3 850.4l5.1 0.6l-0.6 5.1l-5.1 -0.6zM357.5 851.4l7.0 0.8l-0.5 4.3l-7.0 -0.8zM337.6 841.7l4.2 0.5l0.4 -4.0l-4.2 -0.5zM342.8 842.5l8.0 0.9l0.5 -4.2l-8.0 -0.9zM360.0 844.1l6.8 0.8l0.5 -4.8l-6.8 -0.8zM368.5 844.9l3.9 0.4l0.5 -4.6l-3.9 -0.4zM413.3 824.7l7.2 1.4l-1.1 6.0l-7.2 -1.4zM421.8 826.3l4.7 0.9l-0.8 4.1l-4.7 -0.9zM446.1 830.8l7.7 1.5l-1.0 5.3l-7.7 -1.5zM455.4 833.0l4.2 0.8l-0.9 5.1l-4.2 -0.8zM460.8 833.4l6.3 1.2l-1.1 6.0l-6.3 -1.2zM468.3 834.8l7.5 1.4l-0.8 4.1l-7.5 -1.4zM414.6 817.7l5.8 1.1l0.9 -5.0l-5.8 -1.1zM422.3 819.3l4.9 0.9l1.1 -5.8l-4.9 -0.9zM428.4 820.0l3.8 0.7l1.0 -5.5l-3.8 -0.7zM433.7 821.0l8.1 1.5l0.9 -4.6l-8.1 -1.5zM443.3 823.0l3.7 0.7l1.1 -6.0l-3.7 -0.7zM448.6 823.7l4.4 0.8l1.2 -6.2l-4.4 -0.8zM454.8 825.3l6.2 1.2l0.8 -4.0l-6.2 -1.2zM461.9 826.1l6.2 1.2l0.7 -3.5l-6.2 -1.2zM468.8 828.1l6.5 1.2l1.2 -6.4l-6.5 -1.2zM565.4 794.5l0.5 5.9l-4.1 0.3l-0.5 -5.9zM565.9 801.7l0.4 4.6l-5.6 0.4l-0.4 -4.6zM572.7 786.6l0.6 8.2l4.4 -0.3l-0.6 -8.2zM573.5 796.6l0.6 7.6l5.8 -0.4l-0.6 -7.6zM338.7 961.9l6.9 -0.1l0.1 6.0l-6.9 0.1zM356.5 962.1l3.7 -0.0l0.0 3.5l-3.7 0.0zM361.7 962.0l3.9 -0.1l0.1 6.1l-3.9 0.1zM366.7 962.1l6.9 -0.1l0.1 4.7l-6.9 0.1zM375.2 961.8l6.0 -0.1l0.1 5.1l-6.0 0.1zM382.7 961.5l4.1 -0.1l0.1 5.6l-4.1 0.1zM388.9 961.8l5.3 -0.1l0.0 3.8l-5.3 0.1zM404.7 961.2l5.9 -0.1l0.1 6.1l-5.9 0.1zM420.1 961.2l5.5 -0.1l0.1 4.8l-5.5 0.1zM426.6 961.4l5.3 -0.1l0.1 5.5l-5.3 0.1zM433.4 960.4l4.9 -0.1l0.1 5.1l-4.9 0.1zM440.5 960.3l4.5 -0.1l0.1 4.0l-4.5 0.1zM447.0 961.0l4.9 -0.1l0.1 5.0l-4.9 0.1zM452.9 960.6l5.7 -0.1l0.1 4.2l-5.7 0.1zM460.3 960.7l6.7 -0.1l0.0 3.8l-6.7 0.1zM468.6 960.0l6.6 -0.1l0.1 6.2l-6.6 0.1zM476.8 960.0l7.0 -0.1l0.1 5.9l-7.0 0.1zM484.7 960.4l5.8 -0.1l0.1 6.1l-5.8 0.1zM337.5 954.5l6.6 -0.1l-0.1 -4.6l-6.6 0.1zM345.6 954.2l4.3 -0.1l-0.1 -6.0l-4.3 0.1zM350.9 954.0l8.4 -0.1l-0.1 -4.6l-8.4 0.1zM361.5 954.1l4.5 -0.1l-0.0 -3.6l-4.5 0.1zM367.9 954.3l3.5 -0.0l-0.0 -3.9l-3.5 0.0zM389.2 954.3l6.3 -0.1l-0.1 -5.1l-6.3 0.1zM396.6 953.8l4.5 -0.1l-0.1 -5.3l-4.5 0.1zM402.3 953.7l7.6 -0.1l-0.0 -3.8l-7.6 0.1zM411.9 953.6l4.7 -0.1l-0.1 -5.6l-4.7 0.1zM418.0 953.5l4.2 -0.1l-0.1 -4.4l-4.2 0.1zM424.0 953.6l6.2 -0.1l-0.1 -5.6l-6.2 0.1zM431.5 953.3l7.2 -0.1l-0.0 -3.7l-7.2 0.1zM446.2 953.2l5.3 -0.1l-0.1 -6.1l-5.3 0.1zM453.4 953.1l3.5 -0.0l-0.1 -6.3l-3.5 0.0zM460.7 974.1l8.3 0.0l-0.0 5.2l-8.3 -0.0zM470.8 974.6l6.0 0.0l-0.0 5.0l-6.0 -0.0zM477.9 974.3l7.7 0.0l-0.0 5.6l-7.7 -0.0zM471.7 966.4l4.8 0.0l0.0 -6.3l-4.8 -0.0zM477.8 967.1l6.2 0.0l0.0 -5.5l-6.2 -0.0zM490.2 966.8l6.9 0.0l0.0 -4.1l-6.9 -0.0zM458.9 986.2l7.7 0.0l-0.0 5.9l-7.7 -0.0zM468.1 986.0l4.1 0.0l-0.0 4.5l-4.1 -0.0zM474.1 986.4l4.7 0.0l-0.0 4.9l-4.7 -0.0zM479.6 986.7l4.2 0.0l-0.0 6.2l-4.2 -0.0zM484.8 986.3l5.1 0.0l-0.0 5.1l-5.1 -0.0zM466.6 979.0l6.9 0.0l0.0 -4.0l-6.9 -0.0zM475.8 978.7l7.7 0.0l0.0 -3.8l-7.7 -0.0zM485.2 978.9l6.9 0.0l0.0 -3.7l-6.9 -0.0zM454.2 960.2l-0.8 7.9l-4.3 -0.4l0.8 -7.9zM452.5 969.2l-0.8 7.7l-6.2 -0.6l0.8 -7.7zM452.5 978.0l-0.8 7.8l-6.4 -0.6l0.8 -7.8zM451.1 987.9l-0.5 4.7l-5.0 -0.5l0.5 -4.7zM461.6 960.4l-0.4 3.9l3.8 0.4l0.4 -3.9zM460.5 965.2l-0.4 3.7l5.9 0.6l0.4 -3.7zM458.9 979.3l-0.5 4.6l6.2 0.6l0.5 -4.6zM458.4 985.8l-0.7 6.7l3.9 0.4l0.7 -6.7zM482.1 968.5l0.0 7.4l-5.0 0.0l-0.0 -7.4zM482.9 977.5l0.0 6.2l-4.3 0.0l-0.0 -6.2zM482.4 985.2l0.0 6.1l-6.1 0.0l-0.0 -6.1zM482.2 993.1l0.0 6.4l-5.2 0.0l-0.0 -6.4zM482.8 1000.9l0.0 7.9l-5.0 0.0l-0.0 -7.9zM490.3 959.9l0.0 5.1l4.6 -0.0l-0.0 -5.1zM490.2 975.4l0.0 4.3l5.4 -0.0l-0.0 -4.3zM490.2 990.3l0.0 5.6l4.6 -0.0l-0.0 -5.6zM489.3 997.4l0.0 8.1l5.8 -0.0l-0.0 -8.1zM489.4 1006.5l0.0 4.5l4.5 -0.0l-0.0 -4.5zM554.2 1058.1l5.3 -1.8l1.3 4.0l-5.3 1.8zM561.2 1056.0l7.3 -2.4l1.8 5.5l-7.3 2.4zM570.5 1053.2l6.6 -2.2l1.2 3.7l-6.6 2.2zM588.9 1046.7l6.9 -2.3l1.9 5.6l-6.9 2.3zM550.7 1051.5l5.9 -2.0l-1.2 -3.6l-5.9 2.0zM557.9 1049.9l7.1 -2.4l-1.4 -4.1l-7.1 2.4zM566.9 1046.5l5.1 -1.7l-1.9 -5.6l-5.1 1.7zM572.9 1044.3l7.1 -2.4l-1.4 -4.3l-7.1 2.4zM581.0 1042.1l5.7 -1.9l-1.8 -5.5l-5.7 1.9zM587.8 1040.1l7.4 -2.5l-1.8 -5.3l-7.4 2.5zM602.5 1042.2l4.6 -1.4l1.7 5.5l-4.6 1.4zM609.0 1040.9l3.6 -1.1l1.6 5.2l-3.6 1.1zM614.3 1039.4l7.6 -2.3l1.3 4.4l-7.6 2.3zM623.2 1035.8l6.5 -1.9l1.5 4.8l-6.5 1.9zM631.5 1033.5l6.0 -1.8l1.4 4.5l-6.0 1.8zM638.8 1032.0l4.8 -1.5l1.6 5.5l-4.8 1.5zM645.5 1029.5l4.0 -1.2l1.5 4.8l-4.0 1.2zM651.2 1027.7l4.2 -1.2l1.8 6.1l-4.2 1.2zM600.7 1034.8l7.0 -2.1l-1.5 -5.0l-7.0 2.1zM609.5 1032.5l6.1 -1.8l-1.5 -5.1l-6.1 1.8zM616.7 1030.3l6.8 -2.0l-1.6 -5.3l-6.8 2.0zM624.8 1028.6l6.4 -1.9l-1.8 -6.0l-6.4 1.9zM632.0 1025.8l6.3 -1.9l-1.5 -4.9l-6.3 1.9zM639.3 1024.1l7.5 -2.3l-1.1 -3.6l-7.5 2.3zM648.3 1021.4l7.6 -2.3l-1.8 -6.1l-7.6 2.3zM551.0 917.5l0.4 5.6l-5.6 0.4l-0.4 -5.6zM552.5 925.1l0.4 5.6l-5.5 0.4l-0.4 -5.6zM552.4 931.6l0.3 4.2l-5.9 0.4l-0.3 -4.2zM552.8 936.7l0.4 6.1l-3.6 0.2l-0.4 -6.1zM558.5 916.7l0.4 5.9l4.6 -0.3l-0.4 -5.9zM559.0 924.8l0.3 3.9l5.1 -0.3l-0.3 -3.9zM559.9 930.8l0.4 6.2l4.6 -0.3l-0.4 -6.2zM560.4 939.1l0.3 4.8l4.8 -0.3l-0.3 -4.8zM553.0 945.5l-2.5 5.0l-5.8 -2.9l2.5 -5.0zM550.4 952.0l-3.4 6.8l-5.1 -2.6l3.4 -6.8zM557.4 954.7l-1.8 3.5l5.7 2.8l1.8 -3.5zM554.6 960.1l-3.7 7.3l4.3 2.2l3.7 -7.3zM543.5 969.2l0.9 7.3l-3.9 0.5l-0.9 -7.3zM550.9 968.9l0.6 4.7l5.9 -0.7l-0.6 -4.7zM551.6 975.8l0.7 5.5l4.9 -0.6l-0.7 -5.5zM559.4 945.8l7.8 -1.9l1.1 4.5l-7.8 1.9zM569.0 943.1l7.8 -1.9l1.3 5.5l-7.8 1.9zM578.1 940.7l4.9 -1.2l1.4 5.8l-4.9 1.2zM591.5 937.7l5.1 -1.2l1.5 6.2l-5.1 1.2zM598.8 936.4l4.4 -1.0l1.4 5.7l-4.4 1.0zM564.1 936.5l5.3 -1.3l-0.9 -3.8l-5.3 1.3zM576.9 933.7l3.5 -0.8l-1.3 -5.5l-3.5 0.8zM581.8 931.9l3.5 -0.8l-1.1 -4.4l-3.5 0.8zM586.9 931.2l5.1 -1.2l-1.4 -5.9l-5.1 1.2zM593.9 930.0l5.8 -1.4l-1.4 -5.9l-5.8 1.4zM610.8 932.3l5.5 -2.4l1.5 3.5l-5.5 2.4zM618.3 930.0l7.2 -3.1l1.4 3.3l-7.2 3.1zM626.5 926.4l3.9 -1.7l1.7 4.0l-3.9 1.7zM615.9 922.8l3.4 -1.5l-1.9 -4.5l-3.4 1.5zM620.4 921.0l6.6 -2.8l-2.1 -4.8l-6.6 2.8zM639.8 921.0l8.3 -1.5l0.7 4.1l-8.3 1.5zM649.1 919.0l6.4 -1.2l0.9 5.0l-6.4 1.2zM657.3 917.4l6.7 -1.2l1.1 6.2l-6.7 1.2zM665.0 916.8l7.1 -1.3l0.9 4.7l-7.1 1.3zM642.0 912.7l8.0 -1.5l-1.0 -5.4l-8.0 1.5zM652.2 911.2l6.4 -1.2l-0.7 -4.1l-6.4 1.2zM659.3 909.4l4.1 -0.7l-0.9 -5.1l-4.1 0.7zM664.6 908.9l6.5 -1.2l-1.0 -5.7l-6.5 1.2zM683.3 913.2l6.9 -1.6l0.9 4.0l-6.9 1.6zM690.9 911.4l5.0 -1.2l1.5 6.3l-5.0 1.2zM697.6 909.3l7.5 -1.8l0.9 3.8l-7.5 1.8zM707.1 906.9l5.2 -1.2l1.2 5.0l-5.2 1.2zM714.0 906.1l6.5 -1.5l1.3 5.5l-6.5 1.5zM681.1 906.1l4.0 -0.9l-0.8 -3.5l-4.0 0.9zM693.3 902.9l7.7 -1.8l-0.8 -3.6l-7.7 1.8zM702.7 900.3l7.5 -1.8l-1.2 -5.3l-7.5 1.8zM557.0 919.5l6.1 -0.3l0.3 5.8l-6.1 0.3zM564.0 918.9l7.1 -0.3l0.2 4.5l-7.1 0.3zM572.7 918.7l6.9 -0.3l0.3 6.2l-6.9 0.3zM581.0 918.4l7.7 -0.3l0.2 4.3l-7.7 0.3zM589.8 917.8l4.3 -0.2l0.3 6.4l-4.3 0.2zM595.6 918.1l3.6 -0.2l0.2 4.7l-3.6 0.2zM557.1 911.8l5.8 -0.3l-0.2 -3.6l-5.8 0.3zM564.0 911.5l4.4 -0.2l-0.2 -5.0l-4.4 0.2zM569.5 911.2l6.1 -0.3l-0.3 -5.7l-6.1 0.3zM577.3 910.7l5.9 -0.3l-0.3 -5.8l-5.9 0.3zM590.8 910.7l5.7 -0.3l-0.2 -4.9l-5.7 0.3zM602.2 924.4l2.9 4.0l-3.6 2.5l-2.9 -4.0zM604.3 914.1l2.4 3.4l3.4 -2.4l-2.4 -3.4zM607.1 918.4l4.0 5.6l5.0 -3.6l-4.0 -5.6zM606.1 930.3l0.8 4.1l-4.7 0.9l-0.8 -4.1zM607.5 935.6l1.6 8.2l-4.7 0.9l-1.6 -8.2zM609.2 945.6l1.6 7.8l-6.0 1.2l-1.6 -7.8zM613.4 929.5l0.7 3.5l5.6 -1.1l-0.7 -3.5zM614.8 934.9l1.4 7.0l6.4 -1.3l-1.4 -7.0zM617.2 943.4l1.5 7.4l6.3 -1.3l-1.5 -7.4zM576.7 969.3l8.1 -2.3l1.3 4.7l-8.1 2.3zM586.8 966.8l7.2 -2.1l1.8 6.2l-7.2 2.1zM595.6 963.5l7.8 -2.2l1.7 6.1l-7.8 2.2zM611.7 959.6l4.8 -1.4l1.7 6.1l-4.8 1.4zM590.5 957.5l5.7 -1.6l-1.4 -4.7l-5.7 1.6zM597.8 955.8l5.0 -1.4l-1.6 -5.6l-5.0 1.4zM604.1 954.0l7.7 -2.2l-1.7 -6.1l-7.7 2.2zM638.1 935.4l0.5 7.1l-5.6 0.4l-0.5 -7.1zM638.4 944.4l0.6 7.8l-6.1 0.5l-0.6 -7.8zM638.6 954.0l0.4 6.1l-4.6 0.3l-0.4 -6.1zM639.4 961.5l0.5 6.6l-6.4 0.5l-0.5 -6.6zM644.1 922.0l0.4 5.0l5.5 -0.4l-0.4 -5.0zM645.0 928.3l0.5 6.7l6.5 -0.5l-0.5 -6.7zM646.1 944.3l0.4 5.4l6.4 -0.5l-0.4 -5.4zM646.2 951.0l0.4 5.3l4.7 -0.4l-0.4 -5.3zM646.8 957.6l0.6 7.7l3.7 -0.3l-0.6 -7.7zM674.1 917.9l-1.1 6.6l-4.8 -0.8l1.1 -6.6zM672.4 926.1l-0.9 5.2l-5.1 -0.9l0.9 -5.2zM670.9 932.3l-0.8 4.7l-5.6 -1.0l0.8 -4.7zM670.0 938.4l-0.9 5.3l-3.5 -0.6l0.9 -5.3zM668.3 945.6l-1.2 6.8l-5.1 -0.9l1.2 -6.8zM681.6 912.4l-0.9 5.5l6.1 1.1l0.9 -5.5zM678.9 928.0l-0.7 4.1l5.9 1.0l0.7 -4.1zM677.3 938.9l-0.7 4.3l4.3 0.7l0.7 -4.3zM676.7 944.5l-1.2 6.7l3.9 0.7l1.2 -6.7zM675.6 952.2l-0.7 4.1l3.6 0.6l0.7 -4.1zM671.1 977.1l4.3 -0.1l0.1 4.7l-4.3 0.1zM676.3 977.2l7.9 -0.1l0.1 6.2l-7.9 0.1zM686.0 977.3l6.1 -0.1l0.1 5.5l-6.1 0.1zM700.3 976.6l5.2 -0.1l0.1 4.8l-5.2 0.1zM706.9 976.7l7.4 -0.1l0.1 4.1l-7.4 0.1zM715.8 976.6l7.4 -0.1l0.1 3.8l-7.4 0.1zM670.9 969.4l4.6 -0.1l-0.1 -4.2l-4.6 0.1zM676.8 970.0l7.9 -0.1l-0.1 -5.9l-7.9 0.1zM686.0 969.9l5.8 -0.1l-0.1 -6.4l-5.8 0.1zM692.7 969.2l7.7 -0.1l-0.1 -4.4l-7.7 0.1zM701.9 969.5l6.1 -0.1l-0.1 -5.9l-6.1 0.1zM715.4 969.0l7.1 -0.1l-0.1 -5.0l-7.1 0.1zM660.9 961.3l0.4 4.1l-3.8 0.3l-0.4 -4.1zM661.6 967.1l0.5 5.5l-6.4 0.6l-0.5 -5.5zM662.0 974.6l0.6 6.4l-4.8 0.4l-0.6 -6.4zM663.6 982.9l0.4 4.7l-5.0 0.5l-0.4 -4.7zM668.6 960.3l0.7 8.0l3.7 -0.3l-0.7 -8.0zM669.4 969.6l0.4 4.6l3.6 -0.3l-0.4 -4.6zM669.6 975.2l0.5 5.8l4.9 -0.4l-0.5 -5.8zM670.1 981.7l0.4 3.9l3.7 -0.3l-0.4 -3.9zM671.7 994.2l0.5 5.1l3.7 -0.3l-0.5 -5.1zM665.1 1006.3l1.2 5.8l-6.1 1.2l-1.2 -5.8zM666.5 1013.0l1.6 7.8l-5.9 1.2l-1.6 -7.8zM673.1 1003.9l0.9 4.7l3.5 -0.7l-0.9 -4.7zM673.7 1009.7l1.0 4.9l4.5 -0.9l-1.0 -4.9zM342.1 992.8l3.0 2.4l-3.7 4.6l-3.0 -2.4zM352.2 1000.6l6.4 5.1l-2.9 3.6l-6.4 -5.1zM360.3 1006.3l2.8 2.3l-3.5 4.3l-2.8 -2.3zM368.2 1012.8l4.4 3.5l-4.1 5.1l-4.4 -3.5zM339.5 981.3l5.1 4.1l3.8 -4.8l-5.1 -4.1zM353.4 991.3l5.9 4.7l3.4 -4.2l-5.9 -4.7zM360.4 997.8l5.3 4.3l2.4 -3.0l-5.3 -4.3zM367.0 1002.2l6.4 5.1l2.7 -3.4l-6.4 -5.1zM374.5 1008.2l3.9 3.1l3.9 -4.8l-3.9 -3.1zM374.2 1019.2l2.9 6.6l-4.7 2.1l-2.9 -6.6zM377.3 1026.7l1.6 3.7l-5.0 2.2l-1.6 -3.7zM379.3 1031.7l3.1 7.1l-5.3 2.3l-3.1 -7.1zM386.8 1048.3l1.5 3.4l-3.5 1.5l-1.5 -3.4zM392.5 1061.5l2.7 6.2l-5.9 2.6l-2.7 -6.2zM396.1 1069.4l3.3 7.5l-5.1 2.2l-3.3 -7.5zM380.3 1015.4l1.7 4.0l4.5 -2.0l-1.7 -4.0zM382.9 1020.1l2.9 6.5l3.8 -1.7l-2.9 -6.5zM386.6 1028.6l2.7 6.2l3.8 -1.6l-2.7 -6.2zM389.6 1036.4l1.8 4.1l4.5 -2.0l-1.8 -4.1zM392.5 1042.1l2.1 4.7l5.6 -2.5l-2.1 -4.7zM397.2 1053.9l2.3 5.3l4.0 -1.8l-2.3 -5.3zM400.0 1060.5l3.1 7.0l5.3 -2.3l-3.1 -7.0zM404.3 1068.2l2.0 4.7l4.6 -2.0l-2.0 -4.7zM389.3 1006.2l4.8 4.9l-2.8 2.7l-4.8 -4.9zM395.4 1012.6l5.9 6.1l-3.4 3.3l-5.9 -6.1zM402.0 1020.3l3.6 3.7l-3.3 3.2l-3.6 -3.7zM407.1 1025.1l3.1 3.2l-3.5 3.4l-3.1 -3.2zM411.5 1029.8l4.6 4.7l-4.7 4.5l-4.6 -4.7zM416.8 1035.1l4.3 4.4l-4.3 4.2l-4.3 -4.4zM421.4 1040.5l5.0 5.2l-4.1 3.9l-5.0 -5.2zM433.4 1053.2l3.3 3.4l-4.0 3.9l-3.3 -3.4zM402.0 1008.9l5.1 5.3l3.3 -3.2l-5.1 -5.3zM407.7 1015.7l3.9 4.0l4.5 -4.3l-3.9 -4.0zM412.7 1020.2l3.0 3.1l3.1 -3.0l-3.0 -3.1zM415.9 1024.4l3.8 3.9l4.2 -4.1l-3.8 -3.9zM425.6 1033.3l2.9 3.0l3.8 -3.7l-2.9 -3.0zM429.5 1037.2l5.3 5.5l4.6 -4.4l-5.3 -5.5zM436.2 1044.4l5.1 5.3l3.1 -3.0l-5.1 -5.3zM441.9 1050.9l2.8 2.9l4.4 -4.3l-2.8 -2.9zM440.0 1060.5l1.5 5.3l-5.4 1.5l-1.5 -5.3zM441.9 1067.2l1.0 3.8l-3.4 0.9l-1.0 -3.8zM443.8 1073.0l1.5 5.3l-4.0 1.1l-1.5 -5.3zM447.1 1057.9l0.9 3.4l4.2 -1.2l-0.9 -3.4zM448.7 1063.3l1.5 5.3l4.6 -1.3l-1.5 -5.3zM450.8 1070.3l1.6 5.8l4.1 -1.1l-1.6 -5.8zM415.3 1000.3l3.7 3.7l-3.7 3.7l-3.7 -3.7zM419.5 1005.1l3.8 3.8l-2.9 2.9l-3.8 -3.8zM424.9 1010.1l2.8 2.8l-3.7 3.7l-2.8 -2.8zM428.7 1014.2l5.6 5.6l-3.2 3.2l-5.6 -5.6zM435.0 1020.3l4.6 4.6l-4.1 4.1l-4.6 -4.6zM440.6 1025.8l4.5 4.5l-4.4 4.4l-4.5 -4.5zM445.8 1031.0l5.7 5.7l-3.5 3.5l-5.7 -5.7zM453.1 1037.8l3.6 3.6l-3.9 3.9l-3.6 -3.6zM457.7 1042.1l5.0 5.0l-4.0 4.0l-5.0 -5.0zM421.3 996.5l3.4 3.4l4.0 -4.0l-3.4 -3.4zM430.3 1004.9l5.3 5.3l3.6 -3.6l-5.3 -5.3zM437.3 1011.7l4.4 4.4l2.6 -2.6l-4.4 -4.4zM442.8 1017.8l3.4 3.4l3.3 -3.3l-3.4 -3.4zM452.9 1027.5l2.9 2.9l2.9 -2.9l-2.9 -2.9zM456.5 1031.3l5.7 5.7l2.7 -2.7l-5.7 -5.7zM463.4 1038.0l3.7 3.7l3.4 -3.4l-3.7 -3.7zM465.5 1049.6l5.0 1.9l-2.1 5.6l-5.0 -1.9zM471.9 1051.7l3.5 1.3l-1.9 5.1l-3.5 -1.3zM475.7 1045.5l6.5 2.4l2.3 -6.1l-6.5 -2.4zM452.3 1071.4l5.3 0.0l-0.0 5.5l-5.3 -0.0zM458.7 1071.4l8.1 0.0l-0.0 4.6l-8.1 -0.0zM484.3 1071.6l6.7 0.0l-0.0 5.4l-6.7 -0.0zM492.2 1071.9l5.1 0.0l-0.0 6.5l-5.1 -0.0zM508.3 1072.0l6.9 0.0l-0.0 4.8l-6.9 -0.0zM525.8 1071.5l3.6 0.0l-0.0 4.7l-3.6 -0.0zM530.5 1071.1l6.5 0.0l-0.0 6.2l-6.5 -0.0zM538.4 1071.2l7.7 0.0l-0.0 4.9l-7.7 -0.0zM547.5 1071.6l3.5 0.0l-0.0 6.2l-3.5 -0.0zM551.9 1072.1l6.4 0.0l-0.0 4.2l-6.4 -0.0zM450.8 1064.7l5.0 0.0l0.0 -3.8l-5.0 -0.0zM483.5 1064.5l6.2 0.0l0.0 -4.6l-6.2 -0.0zM491.2 1064.3l6.9 0.0l0.0 -6.0l-6.9 -0.0zM499.7 1064.2l7.3 0.0l0.0 -3.9l-7.3 -0.0zM508.6 1064.1l5.2 0.0l0.0 -3.6l-5.2 -0.0zM522.6 1064.3l7.2 0.0l0.0 -6.1l-7.2 -0.0zM539.3 1063.8l5.7 0.0l0.0 -4.9l-5.7 -0.0zM546.8 1064.1l5.2 0.0l0.0 -6.2l-5.2 -0.0zM552.9 1064.0l4.7 0.0l0.0 -4.8l-4.7 -0.0zM553.0 1013.2l-0.2 4.2l-3.6 -0.2l0.2 -4.2zM552.6 1019.0l-0.4 6.2l-6.3 -0.4l0.4 -6.2zM552.3 1027.2l-0.4 6.0l-4.4 -0.3l0.4 -6.0zM551.2 1042.2l-0.3 5.4l-3.9 -0.2l0.3 -5.4zM551.1 1049.7l-0.5 8.4l-4.8 -0.3l0.5 -8.4zM549.9 1065.7l-0.3 4.6l-4.3 -0.3l0.3 -4.6zM549.5 1072.2l-0.3 4.9l-4.7 -0.3l0.3 -4.9zM560.9 1014.2l-0.5 8.1l4.0 0.2l0.5 -8.1zM559.9 1023.1l-0.4 6.2l6.4 0.4l0.4 -6.2zM559.4 1031.5l-0.3 5.5l3.7 0.2l0.3 -5.5zM558.8 1038.4l-0.3 4.4l5.1 0.3l0.3 -4.4zM558.8 1044.9l-0.3 5.6l4.2 0.2l0.3 -5.6zM557.9 1061.7l-0.3 5.0l5.1 0.3l0.3 -5.0zM557.5 1068.5l-0.3 5.6l6.0 0.4l0.3 -5.6zM584.3 1003.5l1.2 5.0l-3.4 0.8l-1.2 -5.0zM586.4 1010.2l1.6 6.8l-3.6 0.9l-1.6 -6.8zM590.1 1027.8l1.3 5.4l-4.4 1.0l-1.3 -5.4zM591.5 1034.6l1.6 6.9l-6.3 1.5l-1.6 -6.9zM594.0 1010.2l1.5 6.2l5.0 -1.2l-1.5 -6.2zM595.0 1017.5l1.1 4.6l5.7 -1.3l-1.1 -4.6zM598.5 1030.2l1.4 6.0l4.1 -1.0l-1.4 -6.0zM599.9 1037.4l1.0 4.3l3.6 -0.9l-1.0 -4.3zM595.0 1047.3l2.6 6.6l-4.3 1.7l-2.6 -6.6zM597.9 1055.6l2.5 6.3l-3.9 1.5l-2.5 -6.3zM601.2 1063.4l2.3 5.8l-5.8 2.3l-2.3 -5.8zM604.1 1070.8l2.4 6.1l-4.3 1.7l-2.4 -6.1zM605.2 1052.6l3.1 7.9l4.2 -1.7l-3.1 -7.9zM608.8 1061.5l1.5 3.9l3.9 -1.5l-1.5 -3.9zM610.6 1067.2l2.0 5.2l5.2 -2.1l-2.0 -5.2zM613.7 1073.2l1.3 3.3l5.7 -2.2l-1.3 -3.3zM580.1 931.6l1.5 7.5l-5.8 1.2l-1.5 -7.5zM581.3 941.3l0.8 4.1l-5.3 1.1l-0.8 -4.1zM582.4 946.9l0.9 4.5l-5.2 1.0l-0.9 -4.5zM585.0 922.5l1.5 7.4l5.7 -1.1l-1.5 -7.4zM587.0 931.2l0.8 4.1l5.5 -1.1l-0.8 -4.1zM587.8 936.7l0.9 4.7l3.9 -0.8l-0.9 -4.7zM589.5 943.2l1.5 7.7l3.9 -0.8l-1.5 -7.7zM342.9 909.9l0.6 5.6l-4.8 0.5l-0.6 -5.6zM345.0 923.2l0.4 4.2l-4.7 0.5l-0.4 -4.2zM345.6 929.4l0.4 3.6l-5.1 0.5l-0.4 -3.6zM347.3 943.0l0.6 5.6l-3.9 0.4l-0.6 -5.6zM347.4 950.2l0.8 7.0l-5.1 0.6l-0.8 -7.0zM350.2 904.0l0.6 5.2l5.2 -0.6l-0.6 -5.2zM350.4 910.4l0.5 5.0l5.3 -0.6l-0.5 -5.0zM351.6 916.9l0.6 5.5l3.9 -0.4l-0.6 -5.5zM352.6 923.9l0.8 7.9l5.3 -0.6l-0.8 -7.9zM353.2 933.7l0.9 8.1l5.2 -0.6l-0.9 -8.1zM354.8 943.7l0.5 4.3l4.9 -0.5l-0.5 -4.3zM355.0 949.8l0.6 6.1l6.3 -0.7l-0.6 -6.1zM348.5 959.9l-1.2 7.3l-4.1 -0.7l1.2 -7.3zM346.6 967.9l-1.3 7.7l-5.1 -0.9l1.3 -7.7zM345.4 976.5l-0.8 4.6l-6.3 -1.0l0.8 -4.6zM355.5 961.3l-1.1 6.4l6.2 1.0l1.1 -6.4zM353.6 975.4l-0.8 4.9l5.5 0.9l0.8 -4.9zM405.2 1067.0l4.9 -1.0l0.8 4.0l-4.9 1.0zM411.8 1065.9l4.0 -0.8l1.1 5.2l-4.0 0.8zM433.5 1061.6l3.7 -0.8l1.1 5.2l-3.7 0.8zM403.8 1059.5l8.1 -1.7l-1.3 -6.1l-8.1 1.7zM413.0 1057.5l4.5 -0.9l-1.0 -4.6l-4.5 0.9zM419.3 1056.2l5.5 -1.2l-1.0 -4.7l-5.5 1.2zM426.0 1055.4l4.7 -1.0l-1.3 -6.1l-4.7 1.0zM339.4 1047.2l4.9 -0.6l0.8 6.3l-4.9 0.6zM345.6 1045.7l7.5 -1.0l0.7 5.5l-7.5 1.0zM354.3 1044.6l4.8 -0.6l0.5 4.0l-4.8 0.6zM336.5 1039.8l6.2 -0.8l-0.5 -3.6l-6.2 0.8zM481.0 863.3l1.0 6.1l-4.7 0.8l-1.0 -6.1zM487.9 862.3l1.0 6.1l6.4 -1.1l-1.0 -6.1zM516.3 861.9l1.3 6.4l6.2 -1.2l-1.3 -6.4zM517.4 874.7l7.1 -1.1l0.8 5.5l-7.1 1.1zM526.1 872.8l5.2 -0.8l0.6 4.2l-5.2 0.8zM532.3 872.7l4.9 -0.7l0.7 4.3l-4.9 0.7zM538.5 871.6l6.1 -0.9l0.8 5.1l-6.1 0.9zM545.8 869.9l6.0 -0.9l0.7 5.0l-6.0 0.9zM515.2 867.7l4.9 -0.7l-0.5 -3.6l-4.9 0.7zM521.3 866.1l7.2 -1.1l-0.7 -4.8l-7.2 1.1zM530.2 864.8l6.8 -1.0l-0.6 -3.8l-6.8 1.0zM544.7 863.0l4.1 -0.6l-0.6 -4.2l-4.1 0.6zM694.0 863.3l0.9 6.8l-5.8 0.7l-0.9 -6.8zM694.3 872.4l0.6 4.5l-3.5 0.4l-0.6 -4.5zM695.6 878.0l0.5 4.0l-4.3 0.5l-0.5 -4.0zM696.6 884.0l0.5 3.8l-3.6 0.5l-0.5 -3.8zM700.9 862.1l0.7 5.5l5.3 -0.7l-0.7 -5.5zM702.7 876.0l0.8 6.1l5.2 -0.7l-0.8 -6.1zM703.6 883.8l0.8 6.8l5.3 -0.7l-0.8 -6.8zM697.8 896.7l0.8 7.5l-5.1 0.5l-0.8 -7.5zM698.5 905.5l0.6 5.6l-4.8 0.5l-0.6 -5.6zM699.5 912.2l0.4 4.0l-5.4 0.5l-0.4 -4.0zM699.8 918.1l0.4 3.7l-4.9 0.5l-0.4 -3.7zM700.0 923.5l0.6 6.5l-3.6 0.4l-0.6 -6.5zM701.0 930.8l0.7 7.0l-4.8 0.5l-0.7 -7.0zM701.7 939.0l0.7 7.3l-4.7 0.5l-0.7 -7.3zM703.2 947.1l0.7 7.3l-4.7 0.5l-0.7 -7.3zM704.8 894.5l0.8 7.9l5.6 -0.6l-0.8 -7.9zM705.6 903.3l0.6 5.9l3.6 -0.4l-0.6 -5.9zM707.0 911.2l0.4 3.6l5.2 -0.5l-0.4 -3.6zM707.3 917.0l0.8 7.8l5.5 -0.5l-0.8 -7.8zM709.9 945.7l0.7 7.5l6.3 -0.6l-0.7 -7.5zM703.4 925.2l5.9 -0.4l0.3 5.5l-5.9 0.4zM711.3 924.0l7.5 -0.5l0.3 4.3l-7.5 0.5zM693.5 917.8l8.5 -0.5l-0.4 -6.0l-8.5 0.5zM703.5 917.5l5.7 -0.3l-0.3 -5.1l-5.7 0.3zM710.2 916.6l5.3 -0.3l-0.3 -5.5l-5.3 0.3zM385.8 970.2l5.9 0.4l-0.4 6.0l-5.9 -0.4zM393.6 971.0l6.4 0.5l-0.3 3.5l-6.4 -0.5zM401.2 971.0l5.7 0.4l-0.4 5.2l-5.7 -0.4zM397.0 963.4l3.7 0.3l0.5 -6.3l-3.7 -0.3zM402.1 964.2l4.0 0.3l0.4 -5.2l-4.0 -0.3zM407.0 964.6l5.4 0.4l0.3 -4.3l-5.4 -0.4zM429.9 961.3l0.5 4.4l-5.9 0.7l-0.5 -4.4zM437.6 960.0l0.8 6.3l4.3 -0.5l-0.8 -6.3zM564.4 228.2l6.3 3.1l-2.4 4.9l-6.3 -3.1zM572.5 232.3l4.4 2.2l-1.6 3.3l-4.4 -2.2zM578.5 235.6l3.4 1.7l-2.2 4.5l-3.4 -1.7zM583.7 238.2l6.5 3.3l-2.5 4.9l-6.5 -3.3zM567.4 221.9l7.2 3.6l2.4 -4.8l-7.2 -3.6zM586.1 231.2l5.8 2.9l2.1 -4.2l-5.8 -2.9zM593.2 234.5l6.2 3.1l2.0 -4.0l-6.2 -3.1zM599.8 246.0l4.9 2.4l-2.1 4.2l-4.9 -2.4zM606.5 249.5l4.9 2.5l-1.9 3.7l-4.9 -2.5zM612.4 252.2l3.6 1.8l-2.2 4.4l-3.6 -1.8zM617.1 254.2l6.1 3.1l-2.6 5.2l-6.1 -3.1zM624.0 258.7l4.1 2.0l-2.4 4.8l-4.1 -2.0zM630.1 261.0l7.2 3.6l-2.1 4.1l-7.2 -3.6zM638.6 265.5l4.8 2.4l-2.5 5.1l-4.8 -2.4zM644.7 268.5l3.7 1.8l-2.2 4.4l-3.7 -1.8zM649.5 270.8l6.3 3.1l-2.3 4.5l-6.3 -3.1zM657.0 274.8l7.5 3.8l-1.9 3.7l-7.5 -3.8zM665.2 279.0l4.8 2.4l-2.1 4.2l-4.8 -2.4zM671.5 281.4l7.0 3.5l-1.9 3.9l-7.0 -3.5zM603.0 239.1l4.3 2.2l1.7 -3.4l-4.3 -2.2zM609.1 242.0l3.9 2.0l2.5 -5.0l-3.9 -2.0zM613.5 244.9l5.4 2.7l2.2 -4.3l-5.4 -2.7zM620.9 248.6l6.3 3.1l2.1 -4.2l-6.3 -3.1zM633.9 255.2l4.8 2.4l2.3 -4.6l-4.8 -2.4zM640.7 257.8l7.4 3.7l2.8 -5.6l-7.4 -3.7zM649.8 262.7l6.0 3.0l1.6 -3.2l-6.0 -3.0zM665.9 271.2l4.7 2.3l2.8 -5.6l-4.7 -2.3zM671.6 273.3l5.4 2.7l2.2 -4.3l-5.4 -2.7zM677.4 277.1l4.1 2.1l1.9 -3.8l-4.1 -2.1zM683.4 279.6l4.5 2.3l2.8 -5.7l-4.5 -2.3zM690.9 290.9l6.9 3.0l-1.9 4.3l-6.9 -3.0zM699.1 295.4l4.9 2.2l-2.2 4.9l-4.9 -2.2zM705.1 297.4l4.1 1.8l-1.5 3.4l-4.1 -1.8zM710.0 299.7l5.9 2.6l-2.2 5.0l-5.9 -2.6zM692.1 283.9l7.4 3.3l1.7 -3.8l-7.4 -3.3zM707.0 290.7l7.7 3.4l2.0 -4.5l-7.7 -3.4zM716.1 294.6l5.5 2.4l2.6 -5.9l-5.5 -2.4zM696.6 388.9l3.3 3.5l-4.1 3.8l-3.3 -3.5zM700.9 393.5l2.4 2.6l-2.8 2.6l-2.4 -2.6zM704.3 398.0l4.7 5.0l-2.6 2.5l-4.7 -5.0zM710.7 404.3l3.9 4.2l-3.9 3.6l-3.9 -4.2zM716.0 409.4l4.9 5.3l-4.3 4.0l-4.9 -5.3zM701.8 383.6l4.1 4.4l2.7 -2.5l-4.1 -4.4zM707.3 389.3l3.3 3.5l2.9 -2.7l-3.3 -3.5zM711.8 394.7l4.4 4.8l3.8 -3.5l-4.4 -4.8zM721.7 405.2l3.2 3.4l3.2 -2.9l-3.2 -3.4zM582.5 578.9l6.5 3.0l-1.7 3.6l-6.5 -3.0zM590.9 582.1l3.5 1.6l-2.6 5.7l-3.5 -1.6zM586.2 571.8l4.3 2.0l2.3 -5.1l-4.3 -2.0zM591.6 574.8l6.4 3.0l1.8 -3.8l-6.4 -3.0zM599.2 578.4l4.3 2.0l2.1 -4.6l-4.3 -2.0zM607.5 590.3l5.5 3.8l-2.2 3.2l-5.5 -3.8zM612.2 584.5l6.9 4.8l2.2 -3.2l-6.9 -4.8zM621.1 590.1l3.6 2.5l2.8 -4.1l-3.6 -2.5zM626.0 594.1l5.1 3.5l3.6 -5.1l-5.1 -3.5zM627.5 605.1l2.7 4.4l-4.2 2.6l-2.7 -4.4zM630.9 611.3l4.1 6.6l-4.6 2.9l-4.1 -6.6zM635.6 619.2l2.9 4.7l-3.6 2.2l-2.9 -4.7zM632.6 600.2l2.9 4.8l5.5 -3.4l-2.9 -4.8zM636.6 605.3l2.3 3.7l3.7 -2.3l-2.3 -3.7zM639.3 610.7l3.0 4.8l3.4 -2.1l-3.0 -4.8zM642.5 616.4l3.1 5.1l3.3 -2.0l-3.1 -5.1zM643.5 630.5l4.1 6.5l-4.5 2.8l-4.1 -6.5zM648.0 638.0l2.3 3.6l-3.0 1.9l-2.3 -3.6zM720.3 611.2l-3.4 2.0l-2.8 -4.8l3.4 -2.0zM716.1 613.8l-5.1 3.0l-2.8 -4.7l5.1 -3.0zM709.1 617.1l-5.0 2.9l-3.1 -5.4l5.0 -2.9zM723.8 617.5l-6.5 3.8l2.0 3.4l6.5 -3.8zM716.3 621.9l-6.7 3.9l2.9 5.0l6.7 -3.9zM708.5 626.5l-3.5 2.0l2.5 4.3l3.5 -2.0zM695.6 624.9l-5.5 3.6l-2.0 -3.1l5.5 -3.6zM688.6 629.9l-5.5 3.6l-3.0 -4.5l5.5 -3.6zM699.7 631.9l-6.1 4.0l2.1 3.3l6.1 -4.0zM692.5 636.2l-4.0 2.6l3.4 5.2l4.0 -2.6zM687.4 639.5l-3.5 2.3l3.4 5.1l3.5 -2.3zM720.4 467.3l-6.5 4.4l-3.5 -5.2l6.5 -4.4zM705.6 476.9l-3.7 2.4l-3.4 -5.2l3.7 -2.4zM725.0 473.7l-4.5 3.0l2.9 4.4l4.5 -3.0zM718.7 478.0l-5.6 3.8l3.5 5.2l5.6 -3.8zM711.8 482.1l-6.6 4.4l3.1 4.7l6.6 -4.4zM696.5 483.8l-4.7 3.9l-4.1 -4.9l4.7 -3.9zM690.2 489.2l-3.6 3.0l-3.9 -4.6l3.6 -3.0zM701.0 489.7l-6.4 5.4l2.5 3.0l6.4 -5.4zM548.7 621.6l1.7 6.6l-3.5 0.9l-1.7 -6.6zM551.5 630.1l1.8 7.0l-3.6 0.9l-1.8 -7.0zM555.8 619.3l1.6 6.5l3.6 -0.9l-1.6 -6.5zM558.3 626.8l1.8 7.0l4.2 -1.1l-1.8 -7.0zM555.9 645.5l3.2 6.9l-5.7 2.7l-3.2 -6.9zM559.4 654.1l2.0 4.3l-5.8 2.7l-2.0 -4.3zM562.4 659.3l1.6 3.3l-5.3 2.5l-1.6 -3.3zM563.9 664.7l3.4 7.2l-5.4 2.5l-3.4 -7.2zM563.0 643.3l1.5 3.3l5.8 -2.7l-1.5 -3.3zM565.2 648.3l2.7 5.9l4.9 -2.3l-2.7 -5.9zM567.7 655.2l1.5 3.2l3.7 -1.7l-1.5 -3.2zM569.6 676.5l1.0 5.1l-6.2 1.2l-1.0 -5.1zM570.3 683.0l1.4 7.0l-4.3 0.9l-1.4 -7.0zM572.1 691.3l0.8 4.1l-3.9 0.8l-0.8 -4.1zM573.8 696.3l1.4 6.9l-5.8 1.2l-1.4 -6.9zM576.4 674.3l1.3 6.4l4.2 -0.8l-1.3 -6.4zM577.6 682.6l1.4 6.8l4.1 -0.8l-1.4 -6.8zM580.1 690.9l0.8 3.9l5.4 -1.1l-0.8 -3.9zM575.7 706.4l1.2 6.0l-3.9 0.8l-1.2 -6.0zM578.0 720.6l1.0 4.8l-6.1 1.2l-1.0 -4.8zM580.0 727.1l0.9 4.4l-3.6 0.7l-0.9 -4.4zM581.8 738.2l0.8 3.8l-3.5 0.7l-0.8 -3.8zM583.2 743.9l1.4 6.9l-5.0 1.0l-1.4 -6.9zM584.4 752.1l1.4 6.9l-6.1 1.2l-1.4 -6.9zM586.4 759.8l0.9 4.7l-4.9 1.0l-0.9 -4.7zM584.8 713.5l1.2 6.2l4.5 -0.9l-1.2 -6.2zM588.4 736.3l1.0 5.2l3.8 -0.8l-1.0 -5.2zM590.1 742.4l1.6 8.2l5.1 -1.0l-1.6 -8.2zM592.3 752.4l0.9 4.5l6.1 -1.2l-0.9 -4.5zM587.8 767.0l2.1 7.3l-4.6 1.3l-2.1 -7.3zM590.1 775.4l1.3 4.6l-5.6 1.6l-1.3 -4.6zM591.5 781.3l1.1 3.9l-5.6 1.6l-1.1 -3.9zM593.1 787.0l1.2 4.2l-4.8 1.3l-1.2 -4.2zM596.7 800.4l1.0 3.5l-4.1 1.1l-1.0 -3.5zM598.6 805.0l2.1 7.5l-6.1 1.7l-2.1 -7.5zM594.2 765.0l1.1 3.9l6.1 -1.7l-1.1 -3.9zM596.0 770.3l2.2 7.8l4.1 -1.1l-2.2 -7.8zM599.1 779.8l1.1 4.0l4.9 -1.4l-1.1 -4.0zM600.3 785.0l1.2 4.5l3.8 -1.1l-1.2 -4.5zM602.1 790.9l1.4 5.1l3.8 -1.1l-1.4 -5.1zM604.1 796.9l1.9 6.7l5.2 -1.5l-1.9 -6.7zM606.4 805.0l1.7 5.9l4.7 -1.3l-1.7 -5.9zM601.8 817.3l1.6 7.3l-3.8 0.8l-1.6 -7.3zM603.2 826.4l1.1 4.9l-4.6 1.0l-1.1 -4.9zM605.1 832.8l0.9 4.2l-5.9 1.3l-0.9 -4.2zM606.1 838.4l1.0 4.7l-6.0 1.3l-1.0 -4.7zM608.7 816.8l1.2 5.5l4.6 -1.0l-1.2 -5.5zM610.6 824.3l0.9 4.3l4.3 -0.9l-0.9 -4.3zM611.9 830.0l0.8 3.6l4.4 -1.0l-0.8 -3.6zM615.5 844.9l1.3 5.8l3.5 -0.8l-1.3 -5.8zM616.6 851.6l1.1 5.0l3.8 -0.8l-1.1 -5.0zM588.5 689.2l3.6 -1.5l2.3 5.5l-3.6 1.5zM593.1 687.0l7.0 -2.9l1.9 4.5l-7.0 2.9zM578.2 686.0l3.5 -1.4l-1.8 -4.3l-3.5 1.4zM582.7 683.3l7.4 -3.1l-2.0 -4.7l-7.4 3.1zM592.1 679.5l6.4 -2.7l-1.8 -4.3l-6.4 2.7zM612.4 678.8l4.3 -1.9l2.6 5.9l-4.3 1.9zM618.1 676.2l6.4 -2.9l2.6 5.7l-6.4 2.9zM625.8 673.4l4.2 -1.8l1.7 3.8l-4.2 1.8zM630.9 670.4l4.3 -1.9l1.7 3.9l-4.3 1.9zM636.7 668.3l3.6 -1.6l1.4 3.2l-3.6 1.6zM603.9 675.0l6.0 -2.7l-1.8 -4.0l-6.0 2.7zM611.1 671.8l3.4 -1.5l-1.6 -3.6l-3.4 1.5zM615.3 669.5l3.7 -1.6l-2.2 -4.9l-3.7 1.6zM620.2 667.9l5.5 -2.4l-2.3 -5.2l-5.5 2.4zM627.4 664.8l3.4 -1.5l-2.3 -5.1l-3.4 1.5zM643.2 665.5l4.3 -2.0l1.8 3.8l-4.3 2.0zM657.8 658.1l7.1 -3.3l2.7 5.7l-7.1 3.3zM640.3 658.8l4.2 -2.0l-2.7 -5.8l-4.2 2.0zM645.4 655.8l7.7 -3.6l-2.7 -5.7l-7.7 3.6zM654.4 652.0l6.8 -3.2l-2.6 -5.6l-6.8 3.2zM672.3 652.2l5.5 -2.4l2.5 5.7l-5.5 2.4zM679.2 648.9l5.3 -2.3l2.2 5.1l-5.3 2.3zM670.4 644.6l7.3 -3.1l-2.5 -5.9l-7.3 3.1zM574.1 670.6l6.2 3.4l-1.7 3.1l-6.2 -3.4zM581.1 674.5l6.5 3.5l-2.2 4.0l-6.5 -3.5zM577.0 663.9l4.7 2.6l2.7 -5.0l-4.7 -2.6zM583.1 667.3l6.0 3.3l2.9 -5.3l-6.0 -3.3zM596.9 680.7l6.2 1.8l-1.1 3.8l-6.2 -1.8zM646.0 649.2l-4.2 5.2l-2.8 -2.3l4.2 -5.2zM641.0 654.7l-3.5 4.4l-4.3 -3.4l3.5 -4.4zM646.1 660.2l-3.0 3.7l4.3 3.4l3.0 -3.7zM689.9 858.6l7.2 -1.3l0.8 4.5l-7.2 1.3zM704.0 856.4l5.6 -1.0l1.1 6.0l-5.6 1.0zM681.5 852.9l4.2 -0.8l-0.7 -3.6l-4.2 0.8zM686.8 851.9l6.9 -1.3l-1.2 -6.4l-6.9 1.3zM694.7 851.2l4.3 -0.8l-0.7 -3.7l-4.3 0.8zM701.1 849.9l4.4 -0.8l-1.0 -5.4l-4.4 0.8zM711.9 847.9l3.5 -0.6l-0.8 -4.5l-3.5 0.6zM716.2 846.7l5.1 -0.9l-1.1 -6.3l-5.1 0.9zM412.5 886.0l4.3 0.5l-0.5 4.1l-4.3 -0.5zM418.3 886.3l8.4 1.0l-0.4 3.5l-8.4 -1.0zM428.0 888.1l6.4 0.8l-0.8 6.3l-6.4 -0.8zM435.8 889.3l7.7 1.0l-0.8 6.4l-7.7 -1.0zM444.9 889.6l6.5 0.8l-0.8 6.1l-6.5 -0.8zM452.3 891.1l4.1 0.5l-0.5 3.8l-4.1 -0.5zM457.8 891.5l8.1 1.0l-0.6 4.8l-8.1 -1.0zM467.4 893.1l4.8 0.6l-0.4 3.5l-4.8 -0.6zM473.4 893.3l6.9 0.9l-0.6 4.8l-6.9 -0.9zM399.4 876.5l5.9 0.7l0.5 -4.3l-5.9 -0.7zM406.7 877.3l7.9 1.0l0.5 -4.3l-7.9 -1.0zM416.0 879.0l4.1 0.5l0.6 -4.9l-4.1 -0.5zM420.9 879.7l3.5 0.4l0.5 -3.9l-3.5 -0.4zM426.0 880.1l3.7 0.5l0.6 -4.4l-3.7 -0.5zM431.0 880.8l4.6 0.6l0.6 -5.1l-4.6 -0.6zM445.7 882.7l6.8 0.8l0.5 -4.1l-6.8 -0.8zM454.4 883.7l8.1 1.0l0.5 -3.6l-8.1 -1.0zM464.5 885.5l7.4 0.9l0.5 -4.0l-7.4 -0.9zM473.5 885.7l8.2 1.0l0.5 -4.1l-8.2 -1.0zM488.5 895.0l7.7 -0.9l0.5 4.3l-7.7 0.9zM497.7 894.3l7.0 -0.8l0.6 5.2l-7.0 0.8zM511.6 892.3l7.7 -0.9l0.5 4.2l-7.7 0.9zM530.0 889.7l5.0 -0.6l0.7 6.1l-5.0 0.6zM487.9 887.0l5.0 -0.6l-0.7 -6.4l-5.0 0.6zM494.6 886.8l4.1 -0.5l-0.7 -5.7l-4.1 0.5zM500.4 886.0l4.1 -0.5l-0.7 -6.5l-4.1 0.5zM505.4 885.7l4.1 -0.5l-0.7 -6.3l-4.1 0.5zM511.1 884.8l4.2 -0.5l-0.5 -4.4l-4.2 0.5zM516.1 884.2l5.4 -0.6l-0.7 -5.7l-5.4 0.6zM522.6 883.6l6.9 -0.8l-0.5 -4.4l-6.9 0.8zM530.5 882.3l5.4 -0.6l-0.7 -5.9l-5.4 0.6zM540.9 888.5l3.6 -0.7l1.2 6.3l-3.6 0.7zM568.3 882.9l7.3 -1.4l0.9 4.6l-7.3 1.4zM584.9 880.0l6.3 -1.2l0.8 4.2l-6.3 1.2zM592.2 878.5l7.9 -1.6l0.8 3.9l-7.9 1.6zM601.5 876.6l4.3 -0.9l0.9 4.6l-4.3 0.9zM607.3 875.1l6.0 -1.2l1.2 6.2l-6.0 1.2zM540.1 881.5l5.1 -1.0l-0.7 -3.8l-5.1 1.0zM546.7 880.0l7.0 -1.4l-1.0 -5.3l-7.0 1.4zM554.5 878.2l6.4 -1.3l-1.0 -5.1l-6.4 1.3zM562.1 877.0l5.4 -1.1l-1.0 -5.0l-5.4 1.1zM573.9 874.4l8.1 -1.6l-1.1 -5.5l-8.1 1.6zM583.3 872.6l5.5 -1.1l-0.9 -4.4l-5.5 1.1zM589.9 871.9l7.2 -1.4l-0.8 -3.9l-7.2 1.4zM598.1 869.8l7.8 -1.5l-1.2 -6.2l-7.8 1.5zM607.5 867.6l7.2 -1.4l-0.9 -4.4l-7.2 1.4zM618.9 873.7l6.8 -0.8l0.6 5.1l-6.8 0.8zM627.8 872.9l5.0 -0.6l0.5 3.8l-5.0 0.6zM634.3 871.7l4.6 -0.6l0.7 6.1l-4.6 0.6zM640.1 870.7l5.1 -0.6l0.8 6.4l-5.1 0.6zM646.9 870.3l4.0 -0.5l0.6 4.9l-4.0 0.5zM652.5 869.7l5.7 -0.7l0.7 5.9l-5.7 0.7zM664.3 868.4l6.1 -0.7l0.7 6.0l-6.1 0.7zM672.6 867.3l3.6 -0.4l0.7 5.6l-3.6 0.4zM678.0 865.9l7.3 -0.9l0.6 5.0l-7.3 0.9zM686.5 864.8l6.2 -0.8l0.6 5.0l-6.2 0.8zM693.7 864.0l5.0 -0.6l0.7 5.5l-5.0 0.6zM709.7 862.9l8.3 -1.0l0.5 4.3l-8.3 1.0zM616.6 866.0l5.2 -0.6l-0.8 -6.3l-5.2 0.6zM623.7 865.0l3.5 -0.4l-0.6 -5.1l-3.5 0.4zM628.7 865.2l6.7 -0.8l-0.8 -6.4l-6.7 0.8zM637.1 863.9l5.8 -0.7l-0.7 -6.1l-5.8 0.7zM644.5 863.3l5.3 -0.6l-0.4 -3.5l-5.3 0.6zM650.8 861.8l3.7 -0.5l-0.7 -5.7l-3.7 0.5zM662.6 861.0l4.7 -0.6l-0.5 -4.4l-4.7 0.6zM668.8 860.1l7.1 -0.9l-0.7 -5.8l-7.1 0.9zM685.5 858.4l6.3 -0.8l-0.8 -6.3l-6.3 0.8zM693.2 857.4l5.1 -0.6l-0.6 -4.9l-5.1 0.6zM699.0 856.2l4.8 -0.6l-0.7 -6.1l-4.8 0.6zM705.9 855.5l5.9 -0.7l-0.4 -3.6l-5.9 0.7zM713.0 854.9l6.3 -0.8l-0.4 -3.7l-6.3 0.8zM388.4 910.8l8.1 0.9l-0.7 6.1l-8.1 -0.9zM398.2 911.9l5.7 0.6l-0.6 5.6l-5.7 -0.6zM405.2 912.6l6.4 0.7l-0.6 5.3l-6.4 -0.7zM412.9 913.4l5.7 0.6l-0.5 4.8l-5.7 -0.6zM420.0 914.2l7.8 0.9l-0.5 4.1l-7.8 -0.9zM429.5 915.2l6.8 0.8l-0.5 4.7l-6.8 -0.8zM437.1 915.9l6.6 0.7l-0.7 6.2l-6.6 -0.7zM445.4 916.9l7.4 0.8l-0.4 3.9l-7.4 -0.8zM454.9 917.6l6.9 0.8l-0.6 5.1l-6.9 -0.8zM471.5 919.6l6.1 0.7l-0.5 4.4l-6.1 -0.7zM479.0 920.3l4.1 0.5l-0.7 6.4l-4.1 -0.5zM390.1 902.8l7.9 0.9l0.4 -3.8l-7.9 -0.9zM399.9 904.7l5.7 0.6l0.5 -4.8l-5.7 -0.6zM406.5 904.8l7.9 0.9l0.5 -4.1l-7.9 -0.9zM416.3 906.5l7.0 0.8l0.7 -6.3l-7.0 -0.8zM425.0 906.9l4.6 0.5l0.4 -3.8l-4.6 -0.5zM430.8 907.7l3.5 0.4l0.6 -5.0l-3.5 -0.4zM441.3 909.4l5.0 0.6l0.4 -3.8l-5.0 -0.6zM447.4 909.5l5.0 0.6l0.7 -6.4l-5.0 -0.6zM453.7 910.8l3.8 0.4l0.4 -3.7l-3.8 -0.4zM459.6 910.9l4.4 0.5l0.6 -5.7l-4.4 -0.5zM466.1 912.1l5.8 0.6l0.5 -4.1l-5.8 -0.6zM473.1 913.1l7.4 0.8l0.4 -3.7l-7.4 -0.8zM487.7 921.7l4.5 -0.3l0.3 6.0l-4.5 0.3zM494.4 921.4l4.5 -0.3l0.2 3.7l-4.5 0.3zM500.5 920.9l7.7 -0.4l0.3 4.4l-7.7 0.4zM509.2 919.8l3.7 -0.2l0.3 5.6l-3.7 0.2zM519.0 919.4l8.0 -0.5l0.3 5.7l-8.0 0.5zM528.5 919.4l5.8 -0.3l0.3 5.1l-5.8 0.3zM488.9 914.2l7.2 -0.4l-0.3 -6.1l-7.2 0.4zM505.1 913.2l7.4 -0.4l-0.3 -4.4l-7.4 0.4zM513.3 912.3l7.8 -0.5l-0.4 -6.2l-7.8 0.5zM522.7 911.9l6.1 -0.4l-0.3 -4.8l-6.1 0.4zM548.1 917.3l4.3 -0.6l0.8 6.1l-4.3 0.6zM554.6 916.8l5.9 -0.8l0.6 4.5l-5.9 0.8zM561.4 915.0l7.6 -1.0l0.8 6.3l-7.6 1.0zM570.5 914.4l5.6 -0.7l0.7 5.2l-5.6 0.7zM578.3 913.4l3.7 -0.5l0.8 6.4l-3.7 0.5zM583.0 912.5l4.5 -0.6l0.6 4.8l-4.5 0.6zM588.9 911.7l3.8 -0.5l0.7 5.6l-3.8 0.5zM540.8 911.3l4.0 -0.5l-0.6 -4.6l-4.0 0.5zM545.7 910.1l7.8 -1.0l-0.5 -3.7l-7.8 1.0zM555.4 908.6l7.0 -0.9l-0.8 -6.3l-7.0 0.9zM576.5 905.8l5.8 -0.8l-0.6 -4.2l-5.8 0.8zM615.8 906.5l4.6 -1.0l1.4 6.3l-4.6 1.0zM601.2 902.2l3.9 -0.9l-0.8 -3.6l-3.9 0.9zM614.5 899.3l4.2 -0.9l-0.9 -4.1l-4.2 0.9zM620.1 898.4l7.5 -1.7l-1.3 -5.6l-7.5 1.7zM643.8 900.7l7.2 -1.8l0.9 3.7l-7.2 1.8zM652.0 898.3l6.4 -1.6l1.6 6.1l-6.4 1.6zM659.8 896.6l4.9 -1.2l1.1 4.5l-4.9 1.2zM682.3 890.4l3.6 -0.9l1.2 4.6l-3.6 0.9zM686.9 889.3l6.6 -1.7l1.3 5.3l-6.6 1.7zM694.4 887.8l4.6 -1.2l1.3 5.3l-4.6 1.2zM706.3 884.6l8.0 -2.0l1.6 6.3l-8.0 2.0zM716.0 881.8l6.0 -1.5l1.6 6.1l-6.0 1.5zM641.5 893.8l5.4 -1.4l-1.5 -5.7l-5.4 1.4zM664.0 887.8l7.6 -1.9l-1.2 -4.8l-7.6 1.9zM672.4 885.4l5.3 -1.4l-1.1 -4.5l-5.3 1.4zM679.0 884.2l5.9 -1.5l-1.2 -4.6l-5.9 1.5zM686.5 881.7l4.7 -1.2l-1.3 -5.0l-4.7 1.2zM693.0 880.7l5.1 -1.3l-1.4 -5.6l-5.1 1.3zM708.0 876.1l7.4 -1.9l-1.3 -5.1l-7.4 1.9zM716.7 874.7l4.7 -1.2l-1.2 -4.8l-4.7 1.2zM486.1 893.1l0.6 7.5l-5.8 0.4l-0.6 -7.5zM488.1 907.4l0.6 7.2l-3.8 0.3l-0.6 -7.2zM494.1 894.0l0.4 4.9l4.9 -0.4l-0.4 -4.9zM494.6 900.5l0.3 3.8l6.0 -0.5l-0.3 -3.8zM494.6 905.9l0.3 4.4l4.8 -0.4l-0.3 -4.4zM495.6 912.1l0.4 4.9l6.4 -0.5l-0.4 -4.9zM488.8 920.2l0.9 3.8l-5.3 1.3l-0.9 -3.8zM490.6 924.7l2.0 8.1l-3.6 0.9l-2.0 -8.1zM495.7 918.0l1.0 4.1l3.5 -0.9l-1.0 -4.1zM497.5 923.3l1.8 7.4l3.7 -0.9l-1.8 -7.4zM499.6 932.3l1.0 4.0l4.0 -1.0l-1.0 -4.0zM494.6 944.8l0.8 8.5l-5.1 0.5l-0.8 -8.5zM495.7 954.2l0.6 6.4l-4.6 0.5l-0.6 -6.4zM496.7 962.5l0.6 6.2l-6.2 0.6l-0.6 -6.2zM501.8 944.0l0.5 5.4l3.7 -0.4l-0.5 -5.4zM503.0 951.5l0.4 4.2l3.5 -0.4l-0.4 -4.2zM503.7 957.8l0.8 8.2l5.8 -0.6l-0.8 -8.2zM497.4 974.4l0.0 6.5l-6.2 0.0l-0.0 -6.5zM497.5 982.5l0.0 4.3l-3.8 0.0l-0.0 -4.3zM497.5 987.6l0.0 5.8l-5.2 0.0l-0.0 -5.8zM497.4 994.5l0.0 5.5l-5.0 0.0l-0.0 -5.5zM497.9 1002.1l0.0 3.8l-5.0 0.0l-0.0 -3.8zM497.8 1006.7l0.0 5.4l-4.0 0.0l-0.0 -5.4zM497.2 1014.3l0.0 3.9l-4.6 0.0l-0.0 -3.9zM504.7 974.8l0.0 6.7l4.8 -0.0l-0.0 -6.7zM505.1 983.5l0.0 4.6l5.9 -0.0l-0.0 -4.6zM505.1 989.0l0.0 6.9l4.9 -0.0l-0.0 -6.9zM504.9 997.6l0.0 3.7l4.7 -0.0l-0.0 -3.7zM505.3 1003.5l0.0 6.6l6.4 -0.0l-0.0 -6.6zM620.0 861.6l1.2 3.5l5.8 -1.9l-1.2 -3.5zM616.2 875.0l1.1 8.0l-5.8 0.8l-1.1 -8.0zM619.3 892.9l0.8 5.8l-4.7 0.7l-0.8 -5.8zM623.5 875.0l1.2 8.4l3.8 -0.5l-1.2 -8.4zM625.3 885.1l0.6 4.3l4.4 -0.6l-0.6 -4.3zM620.8 903.6l1.2 6.2l-5.2 1.0l-1.2 -6.2zM622.1 911.4l0.9 4.6l-5.4 1.1l-0.9 -4.6zM628.2 903.4l0.9 4.4l4.6 -0.9l-0.9 -4.4zM630.6 917.8l1.4 6.9l4.6 -0.9l-1.4 -6.9zM627.0 935.2l1.4 8.2l-4.0 0.7l-1.4 -8.2zM628.7 944.5l0.7 4.2l-5.8 1.0l-0.7 -4.2zM633.7 932.4l0.7 4.4l3.7 -0.6l-0.7 -4.4zM635.1 938.7l1.3 7.9l4.0 -0.7l-1.3 -7.9zM508.2 1020.3l4.8 -1.4l1.0 3.5l-4.8 1.4zM514.6 1018.4l7.8 -2.3l1.6 5.6l-7.8 2.3zM524.1 1015.2l5.2 -1.5l1.6 5.4l-5.2 1.5zM530.1 1013.6l8.1 -2.4l1.7 5.6l-8.1 2.4zM505.3 1012.6l3.4 -1.0l-1.2 -4.0l-3.4 1.0zM510.0 1011.9l6.4 -1.9l-1.6 -5.5l-6.4 1.9zM518.0 1009.5l6.1 -1.8l-1.6 -5.5l-6.1 1.8zM525.5 1007.5l4.9 -1.4l-1.1 -3.8l-4.9 1.4zM542.8 1007.3l4.1 -7.1l3.8 2.2l-4.1 7.1zM536.7 1003.2l3.4 -6.0l-3.9 -2.2l-3.4 6.0zM540.7 996.3l1.9 -3.2l-3.5 -2.0l-1.9 3.2zM550.8 994.6l3.8 -3.2l3.7 4.4l-3.8 3.2zM545.9 989.3l3.5 -2.9l-2.9 -3.4l-3.5 2.9zM549.9 985.2l4.6 -3.8l-3.8 -4.6l-4.6 3.8zM562.4 985.2l4.6 -1.6l1.2 3.3l-4.6 1.6zM575.6 980.6l7.3 -2.6l2.0 5.7l-7.3 2.6zM584.2 977.4l4.0 -1.4l1.3 3.6l-4.0 1.4zM589.4 976.4l4.7 -1.6l2.0 5.7l-4.7 1.6zM595.2 974.4l3.4 -1.2l1.9 5.4l-3.4 1.2zM560.4 978.6l3.8 -1.3l-2.1 -6.0l-3.8 1.3zM565.8 976.9l3.4 -1.2l-1.9 -5.3l-3.4 1.2zM578.0 972.1l6.0 -2.1l-1.3 -3.6l-6.0 2.1zM585.7 969.7l7.8 -2.7l-1.6 -4.7l-7.8 2.7zM602.1 971.2l5.4 -1.5l1.3 4.9l-5.4 1.5zM608.7 970.2l4.6 -1.3l1.4 5.1l-4.6 1.3zM614.1 968.8l6.9 -1.9l1.2 4.5l-6.9 1.9zM621.8 966.0l3.8 -1.0l1.3 4.6l-3.8 1.0zM600.1 964.1l5.2 -1.4l-1.6 -5.7l-5.2 1.4zM607.0 962.8l5.9 -1.6l-1.7 -6.2l-5.9 1.6zM614.5 960.6l8.2 -2.2l-1.3 -4.8l-8.2 2.2zM624.4 958.2l4.2 -1.2l-1.2 -4.4l-4.2 1.2zM641.3 961.1l5.7 0.0l-0.0 6.0l-5.7 -0.0zM648.9 961.4l5.5 0.0l-0.0 3.5l-5.5 -0.0zM655.3 961.2l4.5 0.0l-0.0 4.4l-4.5 -0.0zM661.3 960.9l5.0 0.0l-0.0 4.5l-5.0 -0.0zM667.2 960.9l5.0 0.0l-0.0 4.1l-5.0 -0.0zM673.6 960.7l4.0 0.0l-0.0 4.1l-4.0 -0.0zM679.2 960.6l7.9 0.0l-0.0 3.7l-7.9 -0.0zM688.4 960.9l5.0 0.0l-0.0 4.8l-5.0 -0.0zM695.2 961.3l8.0 0.0l-0.0 5.4l-8.0 -0.0zM704.6 961.0l8.2 0.0l-0.0 4.2l-8.2 -0.0zM647.1 953.6l8.3 0.0l0.0 -4.5l-8.3 -0.0zM657.3 953.4l4.5 0.0l0.0 -6.2l-4.5 -0.0zM663.3 953.6l6.1 0.0l0.0 -5.0l-6.1 -0.0zM677.3 953.6l6.5 0.0l0.0 -3.6l-6.5 -0.0zM694.2 953.5l8.4 0.0l0.0 -5.7l-8.4 -0.0zM711.6 959.2l0.3 7.5l-5.3 0.2l-0.3 -7.5zM712.5 968.8l0.3 7.8l-5.8 0.3l-0.3 -7.8zM712.9 978.4l0.2 5.1l-5.5 0.2l-0.2 -5.1zM712.4 984.3l0.2 4.5l-4.3 0.2l-0.2 -4.5zM712.7 990.3l0.2 4.6l-3.8 0.2l-0.2 -4.6zM719.8 966.4l0.2 4.4l6.5 -0.3l-0.2 -4.4zM720.0 972.9l0.4 8.2l5.7 -0.3l-0.4 -8.2zM720.4 982.5l0.2 5.2l4.9 -0.2l-0.2 -5.2zM720.2 988.6l0.2 5.0l5.6 -0.2l-0.2 -5.0zM720.7 995.0l0.2 3.9l5.5 -0.2l-0.2 -3.9zM713.3 1004.4l-1.2 7.9l-5.5 -0.8l1.2 -7.9zM711.4 1019.4l-1.0 6.4l-4.1 -0.6l1.0 -6.4zM709.5 1027.9l-0.8 5.3l-3.6 -0.5l0.8 -5.3zM709.2 1035.2l-1.1 7.0l-5.8 -0.9l1.1 -7.0zM720.6 1005.7l-0.5 3.5l5.0 0.8l0.5 -3.5zM719.5 1011.0l-0.9 6.1l3.9 0.6l0.9 -6.1zM717.6 1024.6l-0.6 4.0l5.2 0.8l0.6 -4.0zM716.9 1029.9l-1.0 6.7l3.5 0.5l1.0 -6.7zM701.1 1055.8l-2.5 5.1l-3.3 -1.7l2.5 -5.1zM698.2 1062.0l-2.3 4.5l-4.9 -2.5l2.3 -4.5zM694.6 1067.9l-3.4 6.8l-5.5 -2.8l3.4 -6.8zM706.2 1061.1l-3.0 6.0l4.8 2.4l3.0 -6.0zM702.8 1068.4l-2.6 5.2l3.4 1.7l2.6 -5.2zM699.9 1074.4l-2.0 4.1l5.7 2.9l2.0 -4.1zM468.0 201.9l-2.7 8.0l-5.5 -1.8l2.7 -8.0zM465.4 212.2l-2.5 7.6l-6.0 -2.0l2.5 -7.6zM462.3 220.7l-1.2 3.7l-5.3 -1.8l1.2 -3.7zM481.2 207.5l-1.2 3.5l5.4 1.8l1.2 -3.5zM476.4 221.8l-1.5 4.4l4.7 1.6l1.5 -4.4zM457.1 236.9l-1.4 5.2l-5.3 -1.4l1.4 -5.2zM455.7 243.1l-2.2 8.1l-3.9 -1.0l2.2 -8.1zM473.8 231.2l-1.2 4.6l5.9 1.6l1.2 -4.6zM471.7 237.1l-2.2 8.1l4.9 1.3l2.2 -8.1zM469.7 246.9l-1.0 3.6l5.7 1.5l1.0 -3.6zM451.8 258.2l-1.5 7.7l-3.6 -0.7l1.5 -7.7zM449.9 266.8l-1.1 5.3l-3.6 -0.7l1.1 -5.3zM449.0 274.3l-0.9 4.6l-5.5 -1.1l0.9 -4.6zM447.8 280.5l-0.9 4.6l-5.0 -1.0l0.9 -4.6zM465.7 260.1l-1.4 6.8l4.2 0.8l1.4 -6.8zM464.0 269.0l-1.4 7.0l6.1 1.2l1.4 -7.0zM462.5 277.3l-1.7 8.3l4.3 0.9l1.7 -8.3zM446.4 289.6l-0.4 4.9l-4.7 -0.4l0.4 -4.9zM445.2 302.9l-0.4 4.8l-4.9 -0.4l0.4 -4.8zM444.1 308.7l-0.5 6.4l-4.7 -0.4l0.5 -6.4zM443.7 316.6l-0.4 5.6l-4.5 -0.3l0.4 -5.6zM460.5 290.2l-0.3 4.1l5.2 0.4l0.3 -4.1zM459.5 295.5l-0.6 8.2l4.9 0.4l0.6 -8.2zM459.0 305.6l-0.3 4.1l5.2 0.4l0.3 -4.1zM459.0 310.8l-0.3 4.6l5.8 0.4l0.3 -4.6zM458.4 317.5l-0.4 5.7l3.5 0.3l0.4 -5.7zM443.4 329.9l-0.1 3.6l-3.7 -0.1l0.1 -3.6zM442.8 335.2l-0.1 5.7l-6.3 -0.2l0.1 -5.7zM443.0 351.1l-0.2 8.2l-6.0 -0.1l0.2 -8.2zM442.8 360.9l-0.2 6.7l-4.6 -0.1l0.2 -6.7zM457.2 331.1l-0.2 7.3l3.5 0.1l0.2 -7.3zM456.7 339.9l-0.1 4.3l6.4 0.2l0.1 -4.3zM457.0 345.5l-0.2 8.0l3.5 0.1l0.2 -8.0zM456.5 354.7l-0.1 5.4l6.1 0.2l0.1 -5.4zM456.1 361.3l-0.1 3.9l4.0 0.1l0.1 -3.9zM442.7 370.5l0.5 6.1l-4.8 0.4l-0.5 -6.1zM443.2 378.1l0.3 3.5l-3.7 0.3l-0.3 -3.5zM443.1 383.6l0.4 5.1l-4.4 0.3l-0.4 -5.1zM443.9 390.8l0.3 3.9l-3.6 0.3l-0.3 -3.9zM455.9 370.0l0.3 4.2l5.3 -0.4l-0.3 -4.2zM456.9 375.7l0.4 5.8l5.4 -0.4l-0.4 -5.8zM457.6 382.8l0.5 7.0l5.6 -0.4l-0.5 -7.0zM458.0 391.2l0.3 3.7l4.1 -0.3l-0.3 -3.7zM457.8 396.0l0.3 4.0l5.0 -0.4l-0.3 -4.0zM445.9 411.6l1.4 7.6l-5.3 1.0l-1.4 -7.6zM460.1 410.3l0.7 3.4l4.6 -0.9l-0.7 -3.4zM460.2 414.7l0.7 3.6l4.5 -0.9l-0.7 -3.6zM445.8 426.9l1.1 8.0l-4.6 0.6l-1.1 -8.0zM459.0 424.3l0.5 3.6l6.2 -0.8l-0.5 -3.6zM461.0 436.8l0.8 6.2l6.3 -0.9l-0.8 -6.2zM449.5 449.2l1.5 4.2l-5.9 2.1l-1.5 -4.2zM450.9 455.5l1.6 4.6l-4.4 1.5l-1.6 -4.6zM462.7 444.6l2.3 6.7l5.7 -2.0l-2.3 -6.7zM471.7 472.4l1.7 6.8l4.5 -1.1l-1.7 -6.8zM458.9 500.6l-0.6 8.3l-4.2 -0.3l0.6 -8.3zM473.9 488.5l-0.5 8.1l5.9 0.4l0.5 -8.1zM473.7 498.2l-0.5 8.2l6.1 0.4l0.5 -8.2zM473.1 507.5l-0.3 5.0l4.1 0.3l0.3 -5.0zM458.6 516.8l-0.9 5.8l-6.0 -0.9l0.9 -5.8zM456.8 524.3l-1.1 7.5l-5.8 -0.9l1.1 -7.5zM456.0 532.6l-1.2 7.8l-5.1 -0.8l1.2 -7.8zM454.4 542.4l-1.1 7.5l-5.8 -0.9l1.1 -7.5zM471.9 519.5l-1.0 6.9l4.5 0.7l1.0 -6.9zM470.4 528.1l-0.7 4.4l4.5 0.7l0.7 -4.4zM469.1 540.7l-1.1 7.7l4.3 0.7l1.1 -7.7zM467.1 549.2l-1.1 7.2l5.7 0.8l1.1 -7.2zM452.6 555.6l-1.6 5.3l-5.6 -1.6l1.6 -5.3zM449.1 567.8l-1.4 4.9l-4.0 -1.2l1.4 -4.9zM446.6 573.3l-1.0 3.4l-3.7 -1.1l1.0 -3.4zM445.1 578.2l-1.7 5.7l-3.6 -1.1l1.7 -5.7zM465.1 560.7l-1.3 4.5l4.4 1.3l1.3 -4.5zM461.4 572.5l-2.4 8.0l4.5 1.3l2.4 -8.0zM458.7 582.3l-1.0 3.4l4.3 1.3l1.0 -3.4zM442.4 589.5l-3.6 7.3l-4.3 -2.2l3.6 -7.3zM437.3 598.5l-3.6 7.2l-5.0 -2.5l3.6 -7.2zM432.8 606.8l-2.0 4.0l-4.4 -2.2l2.0 -4.0zM430.7 611.9l-2.9 5.8l-4.5 -2.3l2.9 -5.8zM451.8 601.2l-2.7 5.3l3.9 2.0l2.7 -5.3zM448.4 608.0l-3.3 6.6l5.7 2.9l3.3 -6.6zM444.6 615.4l-2.9 5.9l5.7 2.9l2.9 -5.9zM425.7 622.1l-2.5 5.0l-3.6 -1.8l2.5 -5.0zM422.9 627.9l-2.8 5.5l-5.0 -2.5l2.8 -5.5zM438.2 627.9l-2.8 5.5l3.8 1.9l2.8 -5.5zM434.3 635.2l-1.7 3.4l5.5 2.8l1.7 -3.4zM551.7 205.7l0.3 6.0l-6.4 0.3l-0.3 -6.0zM551.3 212.9l0.3 6.5l-4.9 0.2l-0.3 -6.5zM565.4 204.6l0.2 6.0l5.6 -0.2l-0.2 -6.0zM565.3 211.7l0.2 5.0l5.0 -0.2l-0.2 -5.0zM566.3 217.7l0.2 5.7l3.7 -0.2l-0.2 -5.7zM553.5 230.5l2.6 7.1l-4.1 1.5l-2.6 -7.1zM556.7 239.6l2.4 6.4l-4.0 1.5l-2.4 -6.4zM566.2 225.9l1.6 4.4l3.9 -1.5l-1.6 -4.4zM568.3 231.2l2.3 6.1l4.8 -1.8l-2.3 -6.1zM571.6 238.8l2.7 7.3l3.7 -1.4l-2.7 -7.3zM566.7 263.7l3.9 7.0l-3.9 2.2l-3.9 -7.0zM571.2 271.7l2.8 5.1l-4.0 2.2l-2.8 -5.1zM575.5 250.5l3.5 6.3l3.2 -1.8l-3.5 -6.3zM579.8 258.3l2.5 4.5l4.3 -2.4l-2.5 -4.5zM583.0 263.7l2.8 5.1l3.1 -1.7l-2.8 -5.1zM586.9 270.4l2.3 4.2l3.9 -2.2l-2.3 -4.2zM590.3 275.8l3.4 6.2l4.6 -2.5l-3.4 -6.2zM582.6 292.2l2.5 4.6l-3.4 1.8l-2.5 -4.6zM586.4 298.4l2.4 4.6l-3.5 1.9l-2.4 -4.6zM589.3 304.7l2.7 5.0l-4.8 2.5l-2.7 -5.0zM593.1 310.9l3.9 7.4l-4.7 2.5l-3.9 -7.4zM596.4 286.7l3.3 6.2l5.4 -2.9l-3.3 -6.2zM600.3 294.2l2.8 5.2l5.3 -2.8l-2.8 -5.2zM603.0 300.8l2.9 5.5l5.6 -3.0l-2.9 -5.5zM607.2 307.5l3.7 7.1l3.8 -2.0l-3.7 -7.1zM600.4 326.5l1.1 3.6l-5.6 1.8l-1.1 -3.6zM602.2 331.7l1.8 5.7l-5.5 1.8l-1.8 -5.7zM604.2 338.3l2.1 6.6l-5.3 1.7l-2.1 -6.6zM613.7 321.1l1.4 4.5l4.2 -1.3l-1.4 -4.5zM616.0 326.9l1.3 4.0l4.3 -1.4l-1.3 -4.0zM617.8 332.1l1.1 3.5l3.9 -1.2l-1.1 -3.5zM607.0 346.0l-0.4 8.4l-4.7 -0.2l0.4 -8.4zM606.1 356.3l-0.3 7.7l-6.3 -0.3l0.3 -7.7zM620.5 346.7l-0.2 5.5l5.7 0.2l0.2 -5.5zM620.6 353.3l-0.3 7.8l5.9 0.2l0.3 -7.8zM605.8 369.8l-1.4 8.4l-4.2 -0.7l1.4 -8.4zM604.2 379.5l-1.2 7.2l-6.0 -1.0l1.2 -7.2zM602.7 387.8l-0.8 4.8l-4.5 -0.7l0.8 -4.8zM619.5 372.2l-1.2 7.5l4.0 0.7l1.2 -7.5zM617.3 381.5l-1.3 7.7l4.1 0.7l1.3 -7.7zM616.6 390.8l-0.9 5.4l5.1 0.8l0.9 -5.4zM601.2 398.0l-2.3 6.7l-4.1 -1.4l2.3 -6.7zM597.7 405.3l-1.9 5.5l-3.8 -1.3l1.9 -5.5zM596.1 412.4l-1.5 4.3l-4.6 -1.6l1.5 -4.3zM614.1 403.2l-2.2 6.2l4.3 1.5l2.2 -6.2zM611.1 411.0l-2.7 7.7l5.6 2.0l2.7 -7.7zM607.8 419.5l-1.8 5.1l3.8 1.3l1.8 -5.1zM591.4 422.5l-2.7 8.0l-4.4 -1.5l2.7 -8.0zM604.8 428.0l-2.0 6.1l5.4 1.8l2.0 -6.1zM611.7 351.4l7.4 3.5l-1.6 3.2l-7.4 -3.5zM620.5 355.8l5.1 2.5l-1.7 3.5l-5.1 -2.5zM627.6 358.6l4.9 2.3l-2.2 4.7l-4.9 -2.3zM618.7 339.2l4.2 2.0l2.0 -4.1l-4.2 -2.0zM631.0 344.8l6.0 2.9l1.6 -3.4l-6.0 -2.9zM639.0 364.1l5.6 2.5l-1.6 3.6l-5.6 -2.5zM645.5 366.6l5.7 2.6l-2.5 5.5l-5.7 -2.6zM651.8 370.0l4.8 2.2l-2.6 5.8l-4.8 -2.2zM658.5 372.7l4.0 1.8l-1.7 3.8l-4.0 -1.8zM663.5 375.4l4.2 1.9l-1.9 4.1l-4.2 -1.9zM669.4 377.5l4.5 2.0l-1.5 3.3l-4.5 -2.0zM643.7 350.9l7.5 3.4l2.2 -4.8l-7.5 -3.4zM653.0 354.6l6.4 2.9l2.5 -5.6l-6.4 -2.9zM665.4 361.1l7.5 3.4l2.4 -5.2l-7.5 -3.4zM673.9 364.5l5.1 2.3l1.6 -3.5l-5.1 -2.3zM677.3 381.9l4.2 2.1l-2.6 5.2l-4.2 -2.1zM684.2 368.8l4.0 2.0l2.9 -5.8l-4.0 -2.0zM690.0 371.7l3.5 1.8l1.9 -3.7l-3.5 -1.8zM689.2 387.6l6.2 3.9l-2.1 3.3l-6.2 -3.9zM705.0 397.1l5.2 3.2l-2.2 3.6l-5.2 -3.2zM711.9 401.1l6.2 3.9l-3.1 4.9l-6.2 -3.9zM696.4 375.2l5.3 3.3l1.9 -3.1l-5.3 -3.3zM707.3 381.7l5.0 3.1l2.7 -4.3l-5.0 -3.1zM713.7 386.2l4.2 2.6l1.9 -3.1l-4.2 -2.6zM719.2 389.1l3.3 2.0l3.3 -5.3l-3.3 -2.0zM723.7 392.7l3.2 2.0l2.9 -4.7l-3.2 -2.0zM721.3 311.7l-4.2 7.0l-4.2 -2.5l4.2 -7.0zM716.1 320.3l-3.7 6.2l-3.9 -2.3l3.7 -6.2zM712.2 327.8l-2.9 4.8l-3.5 -2.1l2.9 -4.8zM707.9 333.2l-3.3 5.5l-3.4 -2.0l3.3 -5.5zM733.1 319.9l-2.3 3.9l5.2 3.1l2.3 -3.9zM729.5 325.6l-3.4 5.7l4.4 2.7l3.4 -5.7zM725.1 333.1l-4.2 7.0l4.2 2.5l4.2 -7.0zM720.0 340.7l-3.0 5.0l5.3 3.2l3.0 -5.0zM702.7 343.2l-1.6 3.2l-3.4 -1.7l1.6 -3.2zM698.0 353.0l-2.8 5.6l-5.2 -2.6l2.8 -5.6zM694.6 360.4l-2.9 5.7l-5.3 -2.7l2.9 -5.7zM691.2 367.1l-2.9 5.8l-3.4 -1.7l2.9 -5.8zM711.1 356.9l-2.0 4.0l4.6 2.3l2.0 -4.0zM708.6 362.0l-3.3 6.7l5.6 2.8l3.3 -6.7zM704.9 370.0l-2.3 4.5l4.1 2.1l2.3 -4.5zM701.4 376.1l-3.0 5.9l3.6 1.8l3.0 -5.9zM684.6 379.5l-2.5 5.8l-4.9 -2.1l2.5 -5.8zM681.3 386.3l-1.7 3.9l-3.2 -1.4l1.7 -3.9zM679.6 392.5l-2.0 4.7l-5.3 -2.3l2.0 -4.7zM676.6 399.0l-1.9 4.5l-4.2 -1.8l1.9 -4.5zM697.1 384.7l-1.4 3.3l4.3 1.9l1.4 -3.3zM695.3 388.9l-3.0 7.1l3.8 1.6l3.0 -7.1zM692.3 397.7l-2.5 5.7l5.4 2.3l2.5 -5.7zM689.2 404.3l-2.5 5.8l4.2 1.8l2.5 -5.8zM672.6 407.6l-3.9 6.1l-4.9 -3.1l3.9 -6.1zM668.0 414.9l-2.7 4.2l-4.4 -2.8l2.7 -4.2zM684.6 414.7l-2.4 3.8l5.0 3.2l2.4 -3.8zM663.2 421.2l-2.6 4.4l-3.5 -2.1l2.6 -4.4zM660.2 427.4l-2.4 4.0l-3.5 -2.1l2.4 -4.0zM656.5 432.5l-2.2 3.6l-5.0 -3.0l2.2 -3.6zM654.1 437.6l-1.8 3.0l-3.9 -2.3l1.8 -3.0zM650.7 441.6l-4.3 7.3l-3.8 -2.3l4.3 -7.3zM672.7 432.3l-2.1 3.5l3.5 2.1l2.1 -3.5zM669.8 437.0l-2.1 3.6l3.1 1.9l2.1 -3.6zM667.6 442.2l-2.0 3.4l4.8 2.9l2.0 -3.4zM664.1 446.7l-1.9 3.2l4.1 2.4l1.9 -3.2zM643.9 453.9l-3.3 5.5l-4.1 -2.4l3.3 -5.5zM639.8 460.8l-2.6 4.4l-5.1 -3.1l2.6 -4.4zM656.1 460.7l-3.6 6.0l3.5 2.1l3.6 -6.0zM651.6 468.4l-3.1 5.2l5.0 3.0l3.1 -5.2zM647.8 474.5l-1.8 3.1l4.1 2.5l1.8 -3.1zM632.2 474.2l-3.6 5.5l-3.6 -2.4l3.6 -5.5zM622.7 487.0l-2.0 3.0l-4.2 -2.8l2.0 -3.0zM644.1 480.9l-2.5 3.7l4.8 3.2l2.5 -3.7zM640.6 486.0l-4.4 6.5l5.0 3.4l4.4 -6.5zM631.1 499.8l-4.7 7.1l3.2 2.1l4.7 -7.1zM612.3 503.9l-3.1 4.5l-3.4 -2.3l3.1 -4.5zM607.7 510.1l-3.1 4.5l-4.9 -3.4l3.1 -4.5zM603.3 516.0l-2.4 3.5l-4.9 -3.3l2.4 -3.5zM599.9 521.0l-4.5 6.6l-3.8 -2.6l4.5 -6.6zM595.1 528.7l-3.1 4.5l-2.9 -2.0l3.1 -4.5zM623.8 511.5l-4.2 6.1l3.7 2.6l4.2 -6.1zM618.8 518.3l-3.7 5.4l5.1 3.5l3.7 -5.4zM614.7 524.9l-4.4 6.4l3.7 2.5l4.4 -6.4zM590.1 536.9l-3.2 6.7l-5.0 -2.4l3.2 -6.7zM577.1 562.3l-3.5 7.4l-5.7 -2.7l3.5 -7.4zM597.7 553.4l-3.2 6.8l4.3 2.0l3.2 -6.8zM593.4 561.6l-2.1 4.4l3.7 1.8l2.1 -4.4zM590.5 567.3l-3.0 6.4l3.7 1.7l3.0 -6.4zM565.1 587.0l-3.4 6.2l-5.5 -3.0l3.4 -6.2zM560.8 594.2l-2.2 4.0l-3.9 -2.1l2.2 -4.0zM558.0 599.1l-3.5 6.3l-5.0 -2.8l3.5 -6.3zM553.8 607.4l-3.0 5.4l-4.3 -2.4l3.0 -5.4zM580.2 588.3l-3.1 5.6l5.7 3.1l3.1 -5.6zM572.9 600.9l-1.9 3.4l5.2 2.9l1.9 -3.4zM570.6 605.8l-4.0 7.2l3.9 2.2l4.0 -7.2zM565.9 614.4l-3.0 5.5l4.5 2.5l3.0 -5.5zM551.0 613.1l-4.3 4.3l-3.1 -3.1l4.3 -4.3zM544.8 618.1l-3.0 3.0l-3.2 -3.2l3.0 -3.0zM540.9 622.7l-5.9 5.9l-3.7 -3.7l5.9 -5.9zM560.0 623.8l-3.1 3.1l3.3 3.3l3.1 -3.1zM555.7 627.3l-3.8 3.8l3.5 3.5l3.8 -3.8zM550.9 632.5l-3.4 3.4l3.9 3.9l3.4 -3.4zM532.9 630.8l-4.4 3.4l-3.8 -4.9l4.4 -3.4zM541.5 641.9l-5.8 4.5l3.4 4.4l5.8 -4.5zM479.2 457.6l5.9 -4.3l3.0 4.1l-5.9 4.3zM460.1 454.0l5.8 -4.2l-3.7 -5.2l-5.8 4.2zM466.9 448.9l4.4 -3.2l-3.7 -5.1l-4.4 3.2zM490.5 442.4l2.3 -7.2l4.8 1.5l-2.3 7.2zM475.1 443.6l1.2 -3.8l-3.7 -1.1l-1.2 3.8zM494.0 433.4l5.0 -6.7l2.8 2.1l-5.0 6.7zM482.1 426.0l3.7 -5.0l-4.6 -3.5l-3.7 5.0zM492.5 433.1l5.0 -4.3l2.7 3.2l-5.0 4.3zM484.4 422.3l4.3 -3.6l-3.9 -4.6l-4.3 3.6zM498.4 427.7l4.1 -1.1l1.0 3.8l-4.1 1.1zM504.0 426.6l7.8 -2.1l1.4 5.2l-7.8 2.1zM496.5 413.8l5.4 -1.4l-1.3 -4.8l-5.4 1.4zM504.1 412.6l3.7 -1.0l-1.4 -5.4l-3.7 1.0zM516.0 424.0l7.9 0.7l-0.5 5.9l-7.9 -0.7zM517.3 410.5l6.4 0.5l0.3 -3.6l-6.4 -0.5zM525.6 410.5l5.7 0.5l0.3 -3.5l-5.7 -0.5zM532.1 411.2l5.1 0.4l0.3 -4.0l-5.1 -0.4zM537.4 425.9l7.6 2.6l-1.1 3.4l-7.6 -2.6zM546.1 428.6l3.7 1.2l-1.5 4.4l-3.7 -1.2zM550.9 430.5l6.3 2.1l-1.8 5.2l-6.3 -2.1zM551.8 415.9l7.6 2.5l1.4 -4.1l-7.6 -2.5zM555.4 431.1l5.2 2.7l-2.6 4.8l-5.2 -2.7zM562.3 419.1l6.1 3.2l3.0 -5.7l-6.1 -3.2zM569.5 422.7l7.1 3.7l2.5 -4.6l-7.1 -3.7zM576.2 440.0l4.8 0.5l-0.5 5.0l-4.8 -0.5zM582.7 441.0l7.2 0.7l-0.5 5.1l-7.2 -0.7zM576.4 426.1l6.6 0.7l0.6 -5.8l-6.6 -0.7zM584.3 427.2l6.3 0.6l0.6 -6.4l-6.3 -0.6zM591.5 441.8l5.7 3.8l-2.3 3.5l-5.7 -3.8zM599.1 446.2l3.2 2.1l-2.7 4.1l-3.2 -2.1zM603.1 449.2l6.4 4.3l-2.7 4.0l-6.4 -4.3zM600.1 429.8l5.2 3.5l2.1 -3.1l-5.2 -3.5zM606.8 434.9l3.1 2.0l3.2 -4.8l-3.1 -2.0zM617.7 458.2l6.1 3.8l-2.3 3.7l-6.1 -3.8zM624.8 462.9l4.8 2.9l-2.0 3.3l-4.8 -2.9zM636.3 453.5l6.3 3.9l3.1 -5.0l-6.3 -3.9zM642.8 474.7l6.7 4.5l-2.5 3.7l-6.7 -4.5zM651.2 479.8l6.6 4.4l-2.4 3.7l-6.6 -4.4zM650.1 462.3l6.4 4.2l3.2 -4.8l-6.4 -4.2zM657.3 467.3l5.3 3.5l2.6 -4.0l-5.3 -3.5zM665.6 489.4l2.7 2.7l-2.6 2.6l-2.7 -2.7zM669.7 493.3l4.3 4.3l-2.9 2.9l-4.3 -4.3zM674.7 499.1l4.9 4.9l-3.8 3.8l-4.9 -4.9zM681.3 505.3l4.7 4.7l-3.7 3.7l-4.7 -4.7zM675.0 479.6l2.8 2.8l4.2 -4.2l-2.8 -2.8zM678.5 483.1l4.3 4.3l3.3 -3.3l-4.3 -4.3zM683.6 488.3l5.8 5.8l3.5 -3.5l-5.8 -5.8zM690.5 494.4l5.1 5.1l4.1 -4.1l-5.1 -5.1zM687.7 512.0l4.5 6.1l-4.3 3.2l-4.5 -6.1zM693.1 520.1l3.2 4.3l-4.8 3.6l-3.2 -4.3zM698.1 525.6l4.5 6.0l-4.5 3.4l-4.5 -6.0zM702.7 509.1l2.7 3.6l3.2 -2.4l-2.7 -3.6zM706.4 513.8l2.7 3.6l4.9 -3.6l-2.7 -3.6zM710.1 518.6l2.2 2.9l4.8 -3.6l-2.2 -2.9zM711.2 544.4l2.5 3.4l-5.2 3.8l-2.5 -3.4zM714.9 549.7l2.8 3.9l-3.9 2.8l-2.8 -3.9zM716.8 528.0l3.4 4.7l3.6 -2.6l-3.4 -4.7zM721.0 533.6l3.5 4.8l4.2 -3.1l-3.5 -4.8zM336.7 646.1l7.3 -0.6l0.4 4.4l-7.3 0.6zM345.0 645.4l7.3 -0.6l0.5 6.2l-7.3 0.6zM362.4 644.7l7.2 -0.6l0.5 6.4l-7.2 0.6zM371.8 643.6l8.2 -0.7l0.3 4.0l-8.2 0.7zM335.3 632.6l8.1 -0.7l-0.5 -6.1l-8.1 0.7zM345.5 631.5l6.8 -0.6l-0.5 -5.9l-6.8 0.6zM354.3 631.3l3.6 -0.3l-0.4 -4.4l-3.6 0.3zM358.7 630.0l6.8 -0.6l-0.4 -4.7l-6.8 0.6zM367.4 629.4l4.1 -0.3l-0.3 -3.7l-4.1 0.3zM373.0 629.0l3.6 -0.3l-0.3 -4.0l-3.6 0.3zM377.8 628.8l6.8 -0.6l-0.4 -4.2l-6.8 0.6zM387.4 642.0l5.3 0.3l-0.2 3.6l-5.3 -0.3zM394.1 642.2l5.2 0.3l-0.3 6.1l-5.2 -0.3zM400.2 642.7l5.6 0.3l-0.3 4.8l-5.6 -0.3zM407.9 643.6l4.2 0.2l-0.3 5.1l-4.2 -0.2zM414.0 644.0l5.3 0.3l-0.4 6.4l-5.3 -0.3zM389.1 628.3l5.4 0.3l0.3 -5.0l-5.4 -0.3zM396.6 628.3l6.0 0.3l0.2 -3.6l-6.0 -0.3zM404.4 629.0l3.5 0.2l0.3 -5.2l-3.5 -0.2zM409.1 629.7l7.2 0.4l0.3 -5.9l-7.2 -0.4zM418.9 648.1l-1.0 5.7l-5.9 -1.1l1.0 -5.7zM434.1 643.4l-1.0 5.6l4.6 0.8l1.0 -5.6zM431.9 650.6l-0.9 5.1l5.0 0.9l0.9 -5.1zM430.8 657.1l-0.7 3.6l6.1 1.1l0.7 -3.6zM416.0 663.7l-0.7 5.1l-3.6 -0.5l0.7 -5.1zM415.4 670.0l-1.0 7.6l-5.1 -0.7l1.0 -7.6zM413.3 679.7l-1.0 7.2l-5.6 -0.8l1.0 -7.2zM429.6 665.3l-0.9 7.0l5.5 0.7l0.9 -7.0zM427.8 681.2l-0.7 5.1l5.1 0.7l0.7 -5.1zM426.9 687.7l-0.5 3.5l6.1 0.8l0.5 -3.5zM411.9 695.0l-0.3 5.0l-5.0 -0.3l0.3 -5.0zM411.0 702.0l-0.5 8.2l-4.2 -0.3l0.5 -8.2zM411.0 711.2l-0.4 7.5l-4.7 -0.3l0.4 -7.5zM410.0 720.4l-0.5 8.2l-6.0 -0.4l0.5 -8.2zM409.2 730.7l-0.3 5.3l-4.7 -0.3l0.3 -5.3zM425.6 696.6l-0.5 7.9l4.3 0.3l0.5 -7.9zM425.3 706.3l-0.2 3.6l4.8 0.3l0.2 -3.6zM424.7 710.9l-0.4 6.9l6.1 0.4l0.4 -6.9zM424.5 719.9l-0.3 5.6l4.3 0.3l0.3 -5.6zM423.4 727.4l-0.4 6.7l4.4 0.3l0.4 -6.7zM423.8 735.4l-0.5 8.4l3.9 0.2l0.5 -8.4zM409.0 744.9l-0.6 8.2l-5.0 -0.4l0.6 -8.2zM422.7 746.0l-0.3 4.5l5.3 0.4l0.3 -4.5zM422.5 752.1l-0.3 4.5l4.7 0.4l0.3 -4.5zM421.6 758.2l-0.3 4.0l4.1 0.3l0.3 -4.0zM420.7 772.1l-0.3 4.5l6.0 0.5l0.3 -4.5zM420.3 778.1l-0.5 6.2l3.9 0.3l0.5 -6.2zM405.8 786.2l-0.9 5.4l-6.1 -1.0l0.9 -5.4zM404.1 792.6l-1.1 6.3l-5.7 -0.9l1.1 -6.3zM401.6 806.3l-0.7 4.3l-6.4 -1.1l0.7 -4.3zM401.0 812.1l-1.2 7.3l-5.6 -0.9l1.2 -7.3zM419.1 788.2l-1.2 7.1l5.6 0.9l1.2 -7.1zM417.7 796.2l-1.0 6.1l5.4 0.9l1.0 -6.1zM416.4 803.9l-0.8 4.9l4.7 0.8l0.8 -4.9zM399.6 821.3l-2.3 7.7l-3.9 -1.2l2.3 -7.7zM396.2 830.5l-1.4 4.7l-5.2 -1.6l1.4 -4.7zM394.8 836.2l-2.2 7.3l-3.4 -1.0l2.2 -7.3zM392.1 844.4l-2.4 8.1l-3.8 -1.1l2.4 -8.1zM410.2 833.6l-2.1 7.1l4.4 1.3l2.1 -7.1zM407.3 842.6l-1.1 3.5l4.7 1.4l1.1 -3.5zM406.3 847.6l-2.2 7.4l4.4 1.3l2.2 -7.4zM350.6 686.3l8.4 -1.3l0.6 4.0l-8.4 1.3zM360.4 684.8l6.1 -0.9l0.7 4.8l-6.1 0.9zM367.8 683.7l4.9 -0.8l0.7 4.7l-4.9 0.8zM343.8 673.6l7.0 -1.1l-0.6 -4.2l-7.0 1.1zM352.4 671.4l4.0 -0.6l-0.5 -3.6l-4.0 0.6zM357.6 670.8l7.9 -1.2l-0.8 -5.1l-7.9 1.2zM367.2 669.9l5.3 -0.8l-0.8 -5.4l-5.3 0.8zM379.8 681.9l4.9 -1.1l1.2 5.2l-4.9 1.1zM385.3 680.0l7.3 -1.7l1.3 5.7l-7.3 1.7zM394.1 678.4l7.9 -1.8l1.2 5.4l-7.9 1.8zM404.0 676.7l4.9 -1.1l1.3 5.9l-4.9 1.1zM410.7 675.2l4.4 -1.0l0.9 3.8l-4.4 1.0zM416.4 673.1l3.6 -0.8l1.4 6.1l-3.6 0.8zM377.1 667.5l3.6 -0.8l-1.0 -4.3l-3.6 0.8zM381.6 666.7l7.5 -1.7l-1.1 -5.0l-7.5 1.7zM390.8 664.4l7.5 -1.7l-1.4 -6.2l-7.5 1.7zM400.3 662.3l4.6 -1.1l-0.9 -3.7l-4.6 1.1zM406.8 661.7l8.2 -1.9l-1.3 -5.8l-8.2 1.9zM424.3 666.2l7.1 2.7l-1.4 3.8l-7.1 -2.7zM432.3 669.4l4.8 1.8l-1.6 4.2l-4.8 -1.8zM429.4 653.5l4.8 1.8l2.2 -5.8l-4.8 -1.8zM435.9 656.3l7.3 2.7l1.7 -4.5l-7.3 -2.7zM443.8 671.7l3.9 -0.4l0.7 6.2l-3.9 0.4zM449.6 671.1l6.8 -0.8l0.6 5.1l-6.8 0.8zM457.7 670.0l5.5 -0.6l0.4 3.6l-5.5 0.6zM464.2 670.2l4.7 -0.5l0.5 4.1l-4.7 0.5zM470.1 669.2l7.0 -0.8l0.7 5.9l-7.0 0.8zM441.3 658.2l5.3 -0.6l-0.4 -3.9l-5.3 0.6zM448.4 657.5l4.2 -0.5l-0.7 -6.4l-4.2 0.5zM453.9 657.3l5.1 -0.6l-0.4 -4.0l-5.1 0.6zM480.5 667.2l7.2 -1.9l1.4 5.4l-7.2 1.9zM488.8 665.4l7.2 -1.9l1.4 5.2l-7.2 1.9zM497.3 663.6l4.6 -1.2l1.3 4.9l-4.6 1.2zM502.7 662.0l4.2 -1.1l1.2 4.6l-4.2 1.1zM477.3 653.9l7.0 -1.9l-1.2 -4.4l-7.0 1.9zM486.2 652.1l7.7 -2.1l-1.0 -3.9l-7.7 2.1zM495.2 648.9l7.1 -1.9l-1.1 -4.0l-7.1 1.9zM512.9 657.9l4.6 -2.3l2.2 4.4l-4.6 2.3zM518.9 655.5l4.4 -2.2l2.9 5.7l-4.4 2.2zM524.5 652.9l5.2 -2.6l2.4 4.8l-5.2 2.6zM513.5 642.1l3.9 -1.9l-2.3 -4.7l-3.9 1.9zM524.3 636.7l3.2 -1.6l-2.0 -3.9l-3.2 1.6zM388.1 859.8l-2.1 6.1l-4.0 -1.3l2.1 -6.1zM400.7 864.5l-2.0 6.0l3.4 1.1l2.0 -6.0zM399.1 872.0l-1.9 5.6l4.7 1.6l1.9 -5.6zM396.4 878.4l-2.5 7.5l5.7 1.9l2.5 -7.5zM379.2 886.3l-1.2 4.4l-3.6 -1.0l1.2 -4.4zM377.2 892.5l-2.2 8.1l-5.0 -1.4l2.2 -8.1zM393.4 889.2l-1.1 4.2l3.8 1.0l1.1 -4.2zM391.1 894.3l-1.4 5.0l6.0 1.6l1.4 -5.0zM389.7 900.1l-1.0 3.7l4.2 1.2l1.0 -3.7zM370.7 912.7l-2.6 6.3l-3.6 -1.5l2.6 -6.3zM386.0 912.9l-1.5 3.6l4.5 1.9l1.5 -3.6zM384.2 918.6l-3.3 7.8l3.3 1.4l3.3 -7.8zM377.7 935.2l-0.3 4.8l4.6 0.3l0.3 -4.8zM377.1 940.9l-0.3 5.0l6.1 0.4l0.3 -5.0zM363.6 953.3l3.0 7.7l-4.3 1.7l-3.0 -7.7zM377.1 948.0l2.3 6.0l4.2 -1.6l-2.3 -6.0zM379.7 955.8l2.0 5.2l5.4 -2.1l-2.0 -5.2zM372.4 972.9l2.8 3.1l-3.2 2.8l-2.8 -3.1zM376.6 976.9l4.1 4.6l-3.3 3.0l-4.1 -4.6zM383.6 964.0l5.5 6.2l4.2 -3.7l-5.5 -6.2zM392.2 992.7l6.4 3.2l-2.7 5.4l-6.4 -3.2zM400.4 996.7l4.7 2.4l-2.7 5.3l-4.7 -2.4zM406.3 999.7l6.7 3.3l-2.4 4.8l-6.7 -3.3zM398.2 979.2l6.1 3.1l2.7 -5.3l-6.1 -3.1zM404.9 982.9l3.8 1.9l1.6 -3.3l-3.8 -1.9zM410.6 985.4l7.3 3.6l1.8 -3.6l-7.3 -3.6zM424.1 1006.5l7.2 2.2l-1.6 5.4l-7.2 -2.2zM432.2 1008.8l7.3 2.2l-1.4 4.8l-7.3 -2.2zM441.3 1011.3l4.7 1.4l-1.2 3.9l-4.7 -1.4zM447.9 1013.4l4.8 1.4l-1.3 4.3l-4.8 -1.4zM426.8 992.6l4.8 1.4l1.7 -5.5l-4.8 -1.4zM433.5 994.9l6.6 2.0l1.8 -6.1l-6.6 -2.0zM441.8 996.7l4.8 1.5l1.4 -4.7l-4.8 -1.5zM448.2 999.1l7.4 2.2l1.2 -4.1l-7.4 -2.2zM458.0 1016.7l7.4 1.9l-1.0 4.0l-7.4 -1.9zM467.3 1018.9l3.7 0.9l-1.2 4.9l-3.7 -0.9zM472.1 1019.6l4.5 1.1l-1.6 6.3l-4.5 -1.1zM478.5 1021.8l7.1 1.8l-1.1 4.4l-7.1 -1.8zM487.8 1023.4l5.1 1.3l-1.3 5.1l-5.1 -1.3zM461.2 1002.3l5.1 1.3l1.3 -5.1l-5.1 -1.3zM468.0 1004.6l4.1 1.0l1.4 -5.5l-4.1 -1.0zM473.6 1005.5l5.2 1.3l1.2 -4.8l-5.2 -1.3zM480.2 1007.2l5.3 1.3l1.4 -5.6l-5.3 -1.3zM487.1 1018.2l-1.4 6.3l-3.6 -0.8l1.4 -6.3zM485.1 1025.9l-1.4 6.3l-4.1 -0.9l1.4 -6.3zM507.4 1022.8l-1.1 5.1l4.7 1.1l1.1 -5.1zM505.5 1029.3l-1.6 7.2l6.2 1.4l1.6 -7.2zM482.7 1038.8l-1.1 5.1l-4.9 -1.1l1.1 -5.1zM480.6 1045.1l-1.1 4.9l-3.6 -0.8l1.1 -4.9zM502.0 1044.4l-1.1 5.1l5.9 1.3l1.1 -5.1zM500.2 1051.4l-1.2 5.2l6.3 1.4l1.2 -5.2zM478.3 1060.2l-0.4 6.6l-5.7 -0.3l0.4 -6.6zM476.8 1076.3l-0.4 6.7l-6.0 -0.4l0.4 -6.7zM499.1 1059.7l-0.3 5.8l4.2 0.3l0.3 -5.8zM498.5 1067.1l-0.2 4.0l6.0 0.4l0.2 -4.0zM497.6 1073.2l-0.4 6.6l4.2 0.3l0.4 -6.6zM497.7 1081.3l-0.2 3.9l4.0 0.2l0.2 -3.9zM344.6 1027.6l3.5 -1.2l1.4 3.9l-3.5 1.2zM349.1 1025.9l3.9 -1.4l1.8 5.0l-3.9 1.4zM354.9 1023.9l5.6 -2.0l1.4 4.0l-5.6 2.0zM361.4 1021.5l7.0 -2.5l1.6 4.5l-7.0 2.5zM370.3 1018.5l4.1 -1.5l2.0 5.5l-4.1 1.5zM333.9 1013.5l5.6 -2.0l-1.3 -3.8l-5.6 2.0zM340.8 1010.4l3.5 -1.2l-1.7 -4.7l-3.5 1.2zM345.9 1008.3l4.5 -1.6l-1.9 -5.3l-4.5 1.6zM352.2 1006.2l5.2 -1.9l-1.6 -4.4l-5.2 1.9zM358.5 1004.7l6.9 -2.5l-1.6 -4.5l-6.9 2.5zM366.6 1001.4l5.8 -2.1l-2.0 -5.7l-5.8 2.1zM389.9 1007.0l6.1 -5.8l2.8 2.9l-6.1 5.8zM372.2 998.7l6.1 -5.8l-2.9 -3.0l-6.1 5.8zM379.5 992.4l3.4 -3.2l-2.8 -2.9l-3.4 3.2zM384.2 987.7l3.4 -3.2l-4.4 -4.6l-3.4 3.2zM334.1 872.6l8.1 2.2l-1.2 4.6l-8.1 -2.2zM343.2 875.3l5.6 1.5l-1.6 6.1l-5.6 -1.5zM350.5 877.2l7.3 2.0l-1.6 5.8l-7.3 -2.0zM338.3 860.2l5.7 1.5l1.4 -5.3l-5.7 -1.5zM359.9 880.1l6.9 2.0l-1.3 4.4l-6.9 -2.0zM368.5 882.9l3.8 1.1l-1.1 3.9l-3.8 -1.1zM373.3 884.1l7.7 2.3l-1.3 4.4l-7.7 -2.3zM363.3 867.2l8.0 2.3l1.0 -3.4l-8.0 -2.3zM372.4 869.4l6.4 1.9l1.4 -5.0l-6.4 -1.9zM333.3 896.1l4.8 1.4l-1.0 3.4l-4.8 -1.4zM344.1 899.3l6.1 1.8l-1.3 4.6l-6.1 -1.8zM351.6 901.9l3.7 1.1l-1.8 6.2l-3.7 -1.1zM337.0 883.4l3.6 1.1l1.2 -4.0l-3.6 -1.1zM341.8 884.2l7.3 2.1l1.5 -5.1l-7.3 -2.1zM359.3 903.2l6.1 1.6l-1.2 4.5l-6.1 -1.6zM366.1 905.7l3.7 1.0l-1.5 5.6l-3.7 -1.0zM371.4 906.5l4.9 1.3l-1.6 6.0l-4.9 -1.3zM362.9 890.6l7.7 2.0l1.0 -4.0l-7.7 -2.0zM372.5 893.3l5.6 1.5l1.1 -4.0l-5.6 -1.5z" fill="#f9f6e2" stroke="#cfc6a6" stroke-width=".6"/>
<path d="M667.4 207.0 L711.9 207.0 L709.9 257.5 L691.7 273.7 L663.4 257.5 L651.3 237.3 Z" fill="#fdfdf8"/>
<path d="M336.0 346.0 L370.0 352.5 L407.5 380.0 L427.5 425.0 L437.5 462.0 L452.0 476.0 L447.0 486.0 L427.5 489.0 L413.0 480.0 L400.0 452.0 L380.0 427.0 L360.0 402.0 L336.0 394.0 Z" fill="#fefefb"/>
<path d="M497.7 556.4 L515.9 556.4 L515.9 570.5 L497.7 570.5 Z" fill="#fdfdf8"/>
<path d="M530.0 493.7 L544.2 493.7 L544.2 505.8 L530.0 505.8 Z" fill="#fdfdf8"/>
<path d="M366.3 774.4 L378.4 774.4 L378.4 782.5 L384.5 782.5 L384.5 790.5 L366.3 790.5 Z" fill="#fdfdf8"/>
<path d="M420.9 841.1 L433.0 841.1 L433.0 849.1 L439.1 849.1 L439.1 857.2 L420.9 857.2 Z" fill="#fdfdf8"/>
<path d="M457.3 729.9 L485.6 729.9 L485.6 752.1 L457.3 752.1 Z" fill="#f6f3dc"/>
<path d="M505.8 766.3 L532.0 766.3 L532.0 810.7 L505.8 810.7 Z" fill="#f6f3dc"/>
<path d="M659.4 744.1 L709.9 744.1 L709.9 796.6 L659.4 796.6 Z" fill="#f6f3dc"/>
<path d="M604.8 647.0 L651.3 647.0 L651.3 661.2 L604.8 661.2 Z" fill="#f6f3dc"/>
<path d="M657.3 699.6 L705.8 699.6 L705.8 727.9 L657.3 727.9 Z" fill="#f6f3dc"/>
<path d="M562.4 816.8 L598.7 816.8 L598.7 837.0 L562.4 837.0 Z" fill="#f6f3dc"/>
<path d="M679.6 812.8 L720.0 812.8 L720.0 824.9 L679.6 824.9 Z" fill="#f6f3dc"/>
<path d="M392.6 520.0 L422.9 520.0 L422.9 550.3 L392.6 550.3 Z" fill="#f6f3dc"/>
<path d="M623.0 538.2 L667.4 538.2 L667.4 554.3 L623.0 554.3 Z" fill="#f6f3dc"/>
<path d="M530.7 921.9 L551.0 921.9 L551.0 942.1 L530.7 942.1 Z" fill="#f6f3dc"/>
<path d="M427.3 925.9 L445.5 925.9 L445.5 942.1 L427.3 942.1 Z" fill="#f6f3dc"/>
<path d="M599.7 1001.0 L640.3 1001.0 L640.3 1023.3 L599.7 1023.3 Z" fill="#f6f3dc"/>
<path d="M575.4 1027.3 L591.6 1027.3 L591.6 1043.6 L575.4 1043.6 Z" fill="#f6f3dc"/>
<path d="M602.8 756.2 L623.0 756.2 L623.0 784.5 L602.8 784.5 Z" fill="#f6f3dc"/>
<path d="M336.0 401.0 L348.1 397.0 L360.3 409.1 L362.3 425.1 L336.0 425.1 Z" fill="#f8cda6"/>
<path d="M336.0 425.0 L362.3 425.0 L358.2 437.1 L348.1 471.5 L336.0 471.5 Z" fill="#f8cda6"/>
<path d="M354.2 441.2 L394.6 471.5 L396.6 526.1 L344.1 522.0 Z" fill="#d5e0b2"/>
<path d="M465.3 479.6 L526.0 491.7 L524.0 515.9 L493.6 518.0 L491.6 546.3 L493.6 576.6 L475.5 578.6 L459.3 570.5 L467.4 515.9 Z" fill="#d5e0b2"/>
<path d="M691.7 495.7 L724.0 475.5 L724.0 501.8 L699.8 505.8 Z" fill="#d0cf9f"/>
<path d="M568.4 606.9 L588.6 596.8 L608.8 619.0 L584.6 627.1 Z" fill="#dde0a0"/>
<path d="M506.8 207.0 L513.8 207.0 L497.7 328.3 L489.6 425.1 L482.5 425.1 L491.6 328.3 Z" fill="#d5e0b2"/>
<path d="M572.5 241.4 L592.7 247.4 L584.6 265.6 L570.4 255.5 Z" fill="#d5e0b2"/>
<path d="M485.6 691.5 L499.7 691.5 L499.7 703.6 L485.6 703.6 Z" fill="#c4dc9c"/>
<path d="M639.2 752.1 L653.3 752.1 L663.4 780.4 L647.2 782.5 Z" fill="#d5e0b2"/>
<path d="M382.5 790.5 L402.7 790.5 L402.7 802.7 L382.5 802.7 Z" fill="#d5e0b2"/>
<path d="M498.3 930.0 L526.7 934.0 L528.7 958.4 L547.0 962.4 L542.9 982.7 L504.4 984.7 Z" fill="#d5e0b2"/>
<path d="M451.6 932.0 L461.8 932.0 L461.8 948.2 L473.9 948.2 L473.9 958.4 L451.6 958.4 Z" fill="#bfdb98"/>
<path d="M417.1 972.6 L433.4 972.6 L437.4 962.4 L449.6 962.4 L445.5 996.9 L431.3 992.8 L417.1 982.7 Z" fill="#bfdb98"/>
<path d="M386.7 964.4 L413.1 966.5 L413.1 980.7 L396.9 980.7 Z" fill="#d5e0b2"/>
<path d="M628.1 1029.4 L668.7 1029.4 L672.7 1059.8 L640.3 1072.0 L628.1 1059.8 Z" fill="#d5e0b2"/>
<path d="M340.0 215.1 L354.2 211.0 L360.3 225.2 L348.1 241.4 L338.0 231.3 Z" fill="#d5e0b2"/>
<path d="M499.7 303.6 L555.3 312.1 L553.3 334.7 L496.7 326.2 Z" fill="#abd4f0"/>
<path d="M336.0 873.2 L380.6 883.3 L394.8 884.3 L486.1 894.5 L538.8 887.4 L615.9 873.2 L680.8 865.1 L724.0 861.0 L724.0 873.2 L640.3 894.5 L599.7 904.6 L538.8 911.7 L486.1 914.8 L392.8 903.6 L378.6 898.5 L336.0 887.4 Z" fill="#abd4f0"/>
<path d="M505.8 207.0 L497.7 267.6 L489.6 328.3 L477.5 425.1 M526.0 207.0 L517.9 277.7 M485.6 285.8 L538.1 295.9 L588.6 279.8 M489.6 338.4 L542.1 348.5 L608.8 364.6 L631.1 374.7 M503.7 358.6 L538.1 366.7 L604.8 378.8 M503.7 374.7 L536.1 381.8 M501.7 342.4 L497.7 409.1 M542.1 348.5 L530.0 409.1 M558.3 346.5 L606.8 356.6 M560.3 322.2 L606.8 342.4 M625.0 293.9 L720.0 336.3 M635.1 304.0 L627.0 328.3 L679.6 348.5 M651.3 312.1 L643.2 336.3 M667.4 320.2 L659.4 344.4 M683.6 326.2 L675.5 350.5 M602.8 267.6 L614.9 273.7 L606.8 293.9 L572.5 306.0 M596.7 247.4 L584.6 273.7 M526.0 237.3 L554.3 243.4 M524.0 263.6 L548.2 267.6 L564.4 259.5 M530.0 215.1 L556.3 217.1 M457.3 295.9 L469.4 295.9 L465.3 338.4 M465.3 263.6 L469.4 283.8 M477.5 271.7 L491.6 267.6 M481.5 219.1 L497.7 221.1 M616.9 336.3 L651.3 277.7 L667.4 247.4 M618.9 374.7 L679.6 388.9 L651.3 425.1 M558.3 388.9 L598.7 399.0 M548.2 388.9 L538.1 413.1 M716.0 364.6 L709.9 378.8 L724.0 388.9 M336.0 219.1 L352.2 211.0 L364.3 219.1 L348.1 235.3 M426.9 207.0 L422.9 219.1 M449.2 207.0 L443.1 231.3 M465.3 360.6 L477.5 366.7 L475.5 388.9 M443.1 354.5 L441.1 388.9 M392.6 493.7 L461.3 501.8 M477.5 471.5 L574.5 530.1 L679.6 592.7 L724.0 619.0 M477.5 471.5 L509.8 441.2 L524.0 433.1 L574.5 459.4 L558.3 491.7 M513.8 534.1 L576.5 566.5 M574.5 530.1 L564.4 554.3 M584.6 447.2 L574.5 459.4 M572.5 481.6 L584.6 485.6 L598.7 463.4 M526.0 578.6 L536.1 566.5 L550.2 570.5 L534.1 592.7 L526.0 578.6 M336.0 572.5 L368.3 572.5 L382.5 590.7 L384.5 627.1 M336.0 592.7 L380.5 592.7 M455.2 592.7 L457.3 643.1 M493.6 590.7 L495.7 643.1 M455.2 608.9 L495.7 606.9 M457.3 629.1 L495.7 627.1 M420.9 592.7 L441.1 592.7 M625.0 425.0 L618.9 441.2 M689.7 425.0 L679.6 455.3 L659.4 451.3 M699.8 443.2 L724.0 437.1 M663.4 489.7 L645.2 522.0 L669.5 546.3 L724.0 566.5 M669.5 546.3 L649.3 570.5 L631.1 584.7 M687.7 556.4 L659.4 580.6 M618.9 580.6 L663.4 621.0 M643.2 600.8 L633.1 613.0 M491.6 515.9 L491.6 546.3 L477.5 570.5 L461.3 572.5 M453.2 727.9 L538.1 717.8 L574.5 701.6 M548.2 760.2 L639.2 738.0 L724.0 715.8 M356.2 770.3 L513.8 760.2 L548.2 760.2 M485.6 828.9 L596.7 804.7 L724.0 780.4 M558.3 845.1 L724.0 820.8 M336.0 814.8 L406.7 818.8 L477.5 833.0 L485.6 828.9 M449.2 673.3 L455.2 764.3 L467.4 828.9 M479.5 643.0 L485.6 723.8 L503.7 784.5 L511.8 861.1 M535.1 643.0 L538.1 723.8 L544.2 804.7 L550.2 861.1 M548.2 663.2 L568.4 754.2 M596.7 687.5 L618.9 794.6 M637.1 673.3 L651.3 744.1 L677.6 861.1 M716.0 715.8 L724.0 764.3 M384.5 683.4 L360.3 764.3 L348.1 824.9 L342.1 861.1 M336.0 727.9 L412.8 736.0 M422.9 681.4 L449.2 679.4 M420.9 709.7 L451.2 709.7 M422.9 736.0 L453.2 733.9 M420.9 756.2 L455.2 752.1 M344.1 699.6 L356.2 699.6 L360.3 709.7 L378.4 711.7 M354.2 687.5 L360.3 709.7 M483.5 685.4 L509.8 685.4 M659.4 669.3 L675.5 697.6 L687.7 697.6 M669.5 810.7 L699.8 804.7 M477.5 833.0 L481.5 861.1 M511.8 845.1 L550.2 841.1 M564.4 841.1 L578.5 851.2 L614.9 845.1 M336.0 845.1 L372.4 849.1 M412.8 820.8 L477.5 833.0 M568.4 784.5 L570.4 810.7 M336.0 958.4 L494.2 956.3 M457.7 970.5 L498.3 970.5 M457.7 982.7 L498.3 982.7 M457.7 958.4 L453.6 998.9 M486.1 958.4 L486.1 1011.1 M551.0 1055.7 L599.7 1039.5 L660.5 1021.2 M555.1 915.8 L557.1 946.2 L547.0 966.5 L549.0 982.7 M557.1 942.1 L607.8 930.0 L636.2 917.8 L680.8 909.7 L724.0 899.5 M555.1 915.8 L599.7 913.7 L609.8 927.9 L615.9 958.4 M573.3 966.5 L615.9 954.3 M640.3 919.8 L644.3 974.6 M678.8 909.7 L670.7 956.3 M668.7 973.6 L724.0 972.6 M664.6 958.4 L668.7 1003.0 L672.7 1023.3 M336.0 982.7 L376.6 1015.2 L405.0 1079.9 M390.8 1003.0 L443.5 1057.8 L449.6 1079.9 M417.1 996.9 L465.8 1045.6 L482.0 1051.7 M449.6 1067.9 L559.1 1067.9 M557.1 1011.1 L553.0 1079.9 M587.5 1001.0 L597.7 1043.6 L611.9 1079.9 M581.4 921.9 L587.5 952.3 M346.1 901.6 L352.2 958.4 L348.2 982.7 M402.9 1063.8 L441.5 1055.7 M336.0 1043.6 L366.4 1039.5 M484.1 861.0 L486.1 873.2 M512.5 861.0 L514.5 871.1 L555.1 865.1 M697.1 861.0 L701.1 893.5 L707.2 954.3 M691.0 921.9 L724.0 919.8 M384.7 966.5 L413.1 968.5 M433.4 958.4 L435.4 974.6" fill="none" stroke="#d0c9b0" stroke-width="4.6" stroke-linecap="round" stroke-linejoin="round"/>
<path d="M505.8 207.0 L497.7 267.6 L489.6 328.3 L477.5 425.1 M526.0 207.0 L517.9 277.7 M485.6 285.8 L538.1 295.9 L588.6 279.8 M489.6 338.4 L542.1 348.5 L608.8 364.6 L631.1 374.7 M503.7 358.6 L538.1 366.7 L604.8 378.8 M503.7 374.7 L536.1 381.8 M501.7 342.4 L497.7 409.1 M542.1 348.5 L530.0 409.1 M558.3 346.5 L606.8 356.6 M560.3 322.2 L606.8 342.4 M625.0 293.9 L720.0 336.3 M635.1 304.0 L627.0 328.3 L679.6 348.5 M651.3 312.1 L643.2 336.3 M667.4 320.2 L659.4 344.4 M683.6 326.2 L675.5 350.5 M602.8 267.6 L614.9 273.7 L606.8 293.9 L572.5 306.0 M596.7 247.4 L584.6 273.7 M526.0 237.3 L554.3 243.4 M524.0 263.6 L548.2 267.6 L564.4 259.5 M530.0 215.1 L556.3 217.1 M457.3 295.9 L469.4 295.9 L465.3 338.4 M465.3 263.6 L469.4 283.8 M477.5 271.7 L491.6 267.6 M481.5 219.1 L497.7 221.1 M616.9 336.3 L651.3 277.7 L667.4 247.4 M618.9 374.7 L679.6 388.9 L651.3 425.1 M558.3 388.9 L598.7 399.0 M548.2 388.9 L538.1 413.1 M716.0 364.6 L709.9 378.8 L724.0 388.9 M336.0 219.1 L352.2 211.0 L364.3 219.1 L348.1 235.3 M426.9 207.0 L422.9 219.1 M449.2 207.0 L443.1 231.3 M465.3 360.6 L477.5 366.7 L475.5 388.9 M443.1 354.5 L441.1 388.9 M392.6 493.7 L461.3 501.8 M477.5 471.5 L574.5 530.1 L679.6 592.7 L724.0 619.0 M477.5 471.5 L509.8 441.2 L524.0 433.1 L574.5 459.4 L558.3 491.7 M513.8 534.1 L576.5 566.5 M574.5 530.1 L564.4 554.3 M584.6 447.2 L574.5 459.4 M572.5 481.6 L584.6 485.6 L598.7 463.4 M526.0 578.6 L536.1 566.5 L550.2 570.5 L534.1 592.7 L526.0 578.6 M336.0 572.5 L368.3 572.5 L382.5 590.7 L384.5 627.1 M336.0 592.7 L380.5 592.7 M455.2 592.7 L457.3 643.1 M493.6 590.7 L495.7 643.1 M455.2 608.9 L495.7 606.9 M457.3 629.1 L495.7 627.1 M420.9 592.7 L441.1 592.7 M625.0 425.0 L618.9 441.2 M689.7 425.0 L679.6 455.3 L659.4 451.3 M699.8 443.2 L724.0 437.1 M663.4 489.7 L645.2 522.0 L669.5 546.3 L724.0 566.5 M669.5 546.3 L649.3 570.5 L631.1 584.7 M687.7 556.4 L659.4 580.6 M618.9 580.6 L663.4 621.0 M643.2 600.8 L633.1 613.0 M491.6 515.9 L491.6 546.3 L477.5 570.5 L461.3 572.5 M453.2 727.9 L538.1 717.8 L574.5 701.6 M548.2 760.2 L639.2 738.0 L724.0 715.8 M356.2 770.3 L513.8 760.2 L548.2 760.2 M485.6 828.9 L596.7 804.7 L724.0 780.4 M558.3 845.1 L724.0 820.8 M336.0 814.8 L406.7 818.8 L477.5 833.0 L485.6 828.9 M449.2 673.3 L455.2 764.3 L467.4 828.9 M479.5 643.0 L485.6 723.8 L503.7 784.5 L511.8 861.1 M535.1 643.0 L538.1 723.8 L544.2 804.7 L550.2 861.1 M548.2 663.2 L568.4 754.2 M596.7 687.5 L618.9 794.6 M637.1 673.3 L651.3 744.1 L677.6 861.1 M716.0 715.8 L724.0 764.3 M384.5 683.4 L360.3 764.3 L348.1 824.9 L342.1 861.1 M336.0 727.9 L412.8 736.0 M422.9 681.4 L449.2 679.4 M420.9 709.7 L451.2 709.7 M422.9 736.0 L453.2 733.9 M420.9 756.2 L455.2 752.1 M344.1 699.6 L356.2 699.6 L360.3 709.7 L378.4 711.7 M354.2 687.5 L360.3 709.7 M483.5 685.4 L509.8 685.4 M659.4 669.3 L675.5 697.6 L687.7 697.6 M669.5 810.7 L699.8 804.7 M477.5 833.0 L481.5 861.1 M511.8 845.1 L550.2 841.1 M564.4 841.1 L578.5 851.2 L614.9 845.1 M336.0 845.1 L372.4 849.1 M412.8 820.8 L477.5 833.0 M568.4 784.5 L570.4 810.7 M336.0 958.4 L494.2 956.3 M457.7 970.5 L498.3 970.5 M457.7 982.7 L498.3 982.7 M457.7 958.4 L453.6 998.9 M486.1 958.4 L486.1 1011.1 M551.0 1055.7 L599.7 1039.5 L660.5 1021.2 M555.1 915.8 L557.1 946.2 L547.0 966.5 L549.0 982.7 M557.1 942.1 L607.8 930.0 L636.2 917.8 L680.8 909.7 L724.0 899.5 M555.1 915.8 L599.7 913.7 L609.8 927.9 L615.9 958.4 M573.3 966.5 L615.9 954.3 M640.3 919.8 L644.3 974.6 M678.8 909.7 L670.7 956.3 M668.7 973.6 L724.0 972.6 M664.6 958.4 L668.7 1003.0 L672.7 1023.3 M336.0 982.7 L376.6 1015.2 L405.0 1079.9 M390.8 1003.0 L443.5 1057.8 L449.6 1079.9 M417.1 996.9 L465.8 1045.6 L482.0 1051.7 M449.6 1067.9 L559.1 1067.9 M557.1 1011.1 L553.0 1079.9 M587.5 1001.0 L597.7 1043.6 L611.9 1079.9 M581.4 921.9 L587.5 952.3 M346.1 901.6 L352.2 958.4 L348.2 982.7 M402.9 1063.8 L441.5 1055.7 M336.0 1043.6 L366.4 1039.5 M484.1 861.0 L486.1 873.2 M512.5 861.0 L514.5 871.1 L555.1 865.1 M697.1 861.0 L701.1 893.5 L707.2 954.3 M691.0 921.9 L724.0 919.8 M384.7 966.5 L413.1 968.5 M433.4 958.4 L435.4 974.6" fill="none" stroke="#fefdf8" stroke-width="3" stroke-linecap="round" stroke-linejoin="round"/>
<path d="M564.4 224.2 C570.1 227.0 577.8 230.9 598.7 241.4 C619.6 251.8 668.8 276.7 689.7 286.8 C710.6 296.9 718.3 299.5 724.0 302.0 M697.8 384.8 L724.0 413.1 M582.6 574.6 C586.9 576.6 601.1 582.3 608.8 586.7 C616.6 591.1 623.0 594.1 629.0 600.8 C635.1 607.6 640.8 620.1 645.2 627.1 C649.6 634.1 653.6 640.4 655.3 643.1 M724.0 613.0 C720.0 615.3 707.9 622.1 699.8 627.1 C691.7 632.1 679.6 640.4 675.5 643.1 M724.0 469.5 C720.0 472.2 705.8 481.3 699.8 485.6 C693.7 490.0 689.7 494.1 687.7 495.7 M552.2 619.0 L558.3 643.1 M558.3 643.0 C560.7 648.1 569.1 663.2 572.5 673.3 C575.8 683.4 575.5 688.5 578.5 703.6 C581.6 718.8 586.3 745.7 590.6 764.3 C595.0 782.8 600.8 798.7 604.8 814.8 C608.8 830.9 613.2 853.4 614.9 861.1 M578.5 689.5 C582.6 687.8 592.7 683.8 602.8 679.4 C612.9 675.0 628.0 668.3 639.2 663.2 C650.3 658.2 662.1 652.4 669.5 649.1 C676.9 645.7 681.3 644.0 683.6 643.0 M568.4 663.2 C572.1 665.2 584.6 672.6 590.6 675.3 C596.7 678.0 602.4 678.7 604.8 679.4 M655.3 643.0 L639.2 663.2 M679.6 857.2 L724.0 849.1 M396.9 880.3 C411.7 882.1 462.4 890.6 486.1 891.4 C509.8 892.3 517.2 888.9 538.8 885.3 C560.5 881.8 585.1 874.9 615.9 870.1 C646.8 865.4 706.0 859.1 724.0 856.9 M386.7 906.6 C403.3 908.5 460.7 916.4 486.1 917.8 C511.5 919.1 519.9 916.6 538.8 914.8 C557.8 912.9 582.8 909.5 599.7 906.6 C616.6 903.8 619.5 902.6 640.3 897.5 C661.0 892.4 710.1 879.8 724.0 876.2 M490.2 891.4 C490.5 895.8 490.8 909.3 492.2 917.8 C493.5 926.2 496.8 933.0 498.3 942.1 C499.8 951.3 500.8 959.7 501.3 972.6 C501.8 985.4 501.3 1011.4 501.3 1019.2 M615.9 861.0 C616.6 863.0 618.6 866.4 620.0 873.2 C621.3 879.9 622.3 891.8 624.0 901.6 C625.7 911.4 628.4 922.9 630.1 932.0 C631.8 941.1 633.5 952.3 634.2 956.3 M504.4 1017.2 C510.1 1015.5 531.7 1011.1 538.8 1007.0 C545.9 1003.0 543.6 996.9 547.0 992.8 C550.3 988.8 550.3 986.8 559.1 982.7 C567.9 978.6 586.2 972.7 599.7 968.5 C613.2 964.3 621.0 959.2 640.3 957.3 C659.5 955.5 702.5 949.7 715.3 957.3 C728.2 965.0 718.0 988.6 717.3 1003.0 C716.7 1017.4 715.3 1030.7 711.3 1043.6 C707.2 1056.4 696.0 1073.8 693.0 1079.9" fill="none" stroke="#f3a283" stroke-width="5" stroke-linecap="round" stroke-linejoin="round"/>
<path d="M564.4 224.2 C570.1 227.0 577.8 230.9 598.7 241.4 C619.6 251.8 668.8 276.7 689.7 286.8 C710.6 296.9 718.3 299.5 724.0 302.0 M697.8 384.8 L724.0 413.1 M582.6 574.6 C586.9 576.6 601.1 582.3 608.8 586.7 C616.6 591.1 623.0 594.1 629.0 600.8 C635.1 607.6 640.8 620.1 645.2 627.1 C649.6 634.1 653.6 640.4 655.3 643.1 M724.0 613.0 C720.0 615.3 707.9 622.1 699.8 627.1 C691.7 632.1 679.6 640.4 675.5 643.1 M724.0 469.5 C720.0 472.2 705.8 481.3 699.8 485.6 C693.7 490.0 689.7 494.1 687.7 495.7 M552.2 619.0 L558.3 643.1 M558.3 643.0 C560.7 648.1 569.1 663.2 572.5 673.3 C575.8 683.4 575.5 688.5 578.5 703.6 C581.6 718.8 586.3 745.7 590.6 764.3 C595.0 782.8 600.8 798.7 604.8 814.8 C608.8 830.9 613.2 853.4 614.9 861.1 M578.5 689.5 C582.6 687.8 592.7 683.8 602.8 679.4 C612.9 675.0 628.0 668.3 639.2 663.2 C650.3 658.2 662.1 652.4 669.5 649.1 C676.9 645.7 681.3 644.0 683.6 643.0 M568.4 663.2 C572.1 665.2 584.6 672.6 590.6 675.3 C596.7 678.0 602.4 678.7 604.8 679.4 M655.3 643.0 L639.2 663.2 M679.6 857.2 L724.0 849.1 M396.9 880.3 C411.7 882.1 462.4 890.6 486.1 891.4 C509.8 892.3 517.2 888.9 538.8 885.3 C560.5 881.8 585.1 874.9 615.9 870.1 C646.8 865.4 706.0 859.1 724.0 856.9 M386.7 906.6 C403.3 908.5 460.7 916.4 486.1 917.8 C511.5 919.1 519.9 916.6 538.8 914.8 C557.8 912.9 582.8 909.5 599.7 906.6 C616.6 903.8 619.5 902.6 640.3 897.5 C661.0 892.4 710.1 879.8 724.0 876.2 M490.2 891.4 C490.5 895.8 490.8 909.3 492.2 917.8 C493.5 926.2 496.8 933.0 498.3 942.1 C499.8 951.3 500.8 959.7 501.3 972.6 C501.8 985.4 501.3 1011.4 501.3 1019.2 M615.9 861.0 C616.6 863.0 618.6 866.4 620.0 873.2 C621.3 879.9 622.3 891.8 624.0 901.6 C625.7 911.4 628.4 922.9 630.1 932.0 C631.8 941.1 633.5 952.3 634.2 956.3 M504.4 1017.2 C510.1 1015.5 531.7 1011.1 538.8 1007.0 C545.9 1003.0 543.6 996.9 547.0 992.8 C550.3 988.8 550.3 986.8 559.1 982.7 C567.9 978.6 586.2 972.7 599.7 968.5 C613.2 964.3 621.0 959.2 640.3 957.3 C659.5 955.5 702.5 949.7 715.3 957.3 C728.2 965.0 718.0 988.6 717.3 1003.0 C716.7 1017.4 715.3 1030.7 711.3 1043.6 C707.2 1056.4 696.0 1073.8 693.0 1079.9" fill="none" stroke="#fbe6d6" stroke-width="2.2" stroke-linecap="round" stroke-linejoin="round"/>
<path d="M475.5 203.0 C474.1 207.0 470.1 218.1 467.4 227.2 C464.7 236.3 461.6 247.4 459.3 257.5 C456.9 267.6 454.7 276.1 453.2 287.8 C451.7 299.6 450.9 314.8 450.2 328.3 C449.5 341.7 448.8 355.2 449.2 368.7 C449.5 382.2 451.2 399.7 452.2 409.1 C453.2 418.5 454.7 422.4 455.2 425.1" fill="none" stroke="#e0977c" stroke-width="9.9" stroke-linecap="round" stroke-linejoin="round"/>
<path d="M452.2 423.0 C452.7 426.7 453.6 438.1 455.2 445.2 C456.9 452.3 460.3 458.7 462.3 465.4 C464.3 472.2 466.9 477.2 467.4 485.6 C467.9 494.1 466.7 504.2 465.3 515.9 C464.0 527.7 462.0 543.9 459.3 556.4 C456.6 568.8 453.6 579.6 449.2 590.7 C444.8 601.8 437.4 614.3 433.0 623.1 C428.6 631.8 424.6 639.7 422.9 643.1" fill="none" stroke="#e0977c" stroke-width="9.9" stroke-linecap="round" stroke-linejoin="round"/>
<path d="M558.3 203.0 C558.5 207.0 557.6 219.1 559.3 227.2 C561.0 235.3 563.5 241.4 568.4 251.5 C573.3 261.6 582.2 276.1 588.6 287.8 C595.0 299.6 602.6 312.8 606.8 322.2 C611.0 331.6 612.9 336.7 613.9 344.4 C614.9 352.2 613.9 359.6 612.9 368.7 C611.9 377.8 610.2 389.6 607.8 399.0 C605.5 408.4 600.2 420.7 598.7 425.1" fill="none" stroke="#e0977c" stroke-width="9.9" stroke-linecap="round" stroke-linejoin="round"/>
<path d="M598.7 423.0 L594.7 435.1" fill="none" stroke="#e0977c" stroke-width="9.9" stroke-linecap="round" stroke-linejoin="round"/>
<path d="M613.9 344.4 C618.1 346.5 628.2 351.5 639.2 356.6 C650.1 361.6 670.8 370.7 679.6 374.7 C688.3 378.8 684.3 376.4 691.7 380.8 C699.1 385.2 718.6 397.6 724.0 401.0" fill="none" stroke="#e0977c" stroke-width="9.9" stroke-linecap="round" stroke-linejoin="round"/>
<path d="M728.1 314.1 C725.0 319.2 716.0 333.3 709.9 344.4 C703.8 355.5 696.8 370.0 691.7 380.8 C686.6 391.6 683.3 401.7 679.6 409.1 C675.9 416.5 671.2 422.4 669.5 425.1" fill="none" stroke="#e0977c" stroke-width="9.9" stroke-linecap="round" stroke-linejoin="round"/>
<path d="M670.5 423.0 C667.3 428.4 656.5 446.6 651.3 455.3 C646.1 464.1 644.5 467.1 639.2 475.5 C633.8 483.9 626.0 495.4 618.9 505.8 C611.9 516.3 603.4 526.4 596.7 538.2 C590.0 550.0 585.3 563.4 578.5 576.6 C571.8 589.7 563.0 607.2 556.3 617.0 C549.6 626.8 542.8 630.8 538.1 635.2 C533.4 639.5 529.7 641.8 528.0 643.1" fill="none" stroke="#e0977c" stroke-width="9.9" stroke-linecap="round" stroke-linejoin="round"/>
<path d="M463.3 460.4 C466.4 458.2 477.6 452.1 481.5 447.2 C485.4 442.3 484.2 435.8 486.6 431.1 C488.9 426.3 494.1 421.0 495.7 418.9" fill="none" stroke="#e0977c" stroke-width="9.9" stroke-linecap="round" stroke-linejoin="round"/>
<path d="M486.6 429.3 C488.1 428.0 491.1 423.7 495.7 421.6 C500.2 419.5 506.8 417.3 513.8 416.8 C520.9 416.3 530.4 417.2 538.1 418.8 C545.8 420.4 556.6 425.0 560.3 426.3" fill="none" stroke="#e0977c" stroke-width="9.9" stroke-linecap="round" stroke-linejoin="round"/>
<path d="M557.3 424.0 C560.2 425.5 568.2 431.2 574.5 433.1 C580.7 434.9 587.3 432.1 594.7 435.1 C602.1 438.1 610.5 445.9 618.9 451.3 C627.4 456.7 636.8 462.1 645.2 467.4 C653.6 472.8 661.7 477.2 669.5 483.6 C677.2 490.0 685.0 498.1 691.7 505.8 C698.4 513.6 704.2 522.3 709.9 530.1 C715.6 537.8 723.4 548.6 726.1 552.3" fill="none" stroke="#e0977c" stroke-width="9.9" stroke-linecap="round" stroke-linejoin="round"/>
<path d="M334.0 639.6 C342.7 638.9 371.7 635.6 386.5 635.2 C401.3 634.8 416.8 636.9 422.9 637.2" fill="none" stroke="#e0977c" stroke-width="9.9" stroke-linecap="round" stroke-linejoin="round"/>
<path d="M426.9 641.0 C426.3 644.7 424.3 654.5 422.9 663.2 C421.6 672.0 420.0 680.1 418.9 693.5 C417.7 707.0 416.8 728.9 415.8 744.1 C414.8 759.2 414.3 771.7 412.8 784.5 C411.3 797.3 409.8 808.1 406.7 820.8 C403.7 833.6 396.6 854.4 394.6 861.1" fill="none" stroke="#e0977c" stroke-width="9.9" stroke-linecap="round" stroke-linejoin="round"/>
<path d="M334.0 681.8 C341.1 680.7 361.9 678.1 376.4 675.3 C390.9 672.6 413.5 666.9 420.9 665.2" fill="none" stroke="#e0977c" stroke-width="9.9" stroke-linecap="round" stroke-linejoin="round"/>
<path d="M424.9 659.2 C427.6 660.2 432.3 664.9 441.1 665.2 C449.9 665.6 466.4 663.2 477.5 661.2 C488.6 659.2 498.7 656.5 507.8 653.1 C516.9 649.7 528.0 643.0 532.0 641.0" fill="none" stroke="#e0977c" stroke-width="9.9" stroke-linecap="round" stroke-linejoin="round"/>
<path d="M395.2 860.0 C393.8 864.2 389.1 877.4 386.7 885.3 C384.3 893.3 383.3 899.9 380.6 907.7 C377.9 915.4 372.3 925.2 370.5 932.0 C368.6 938.8 368.5 942.5 369.5 948.2 C370.5 954.0 372.7 960.4 376.6 966.5 C380.5 972.6 386.0 979.7 392.8 984.7 C399.6 989.8 406.3 992.8 417.1 996.9 C428.0 1001.0 444.2 1005.4 457.7 1009.1 C471.2 1012.8 491.5 1017.5 498.3 1019.2" fill="none" stroke="#e0977c" stroke-width="9.9" stroke-linecap="round" stroke-linejoin="round"/>
<path d="M497.7 1017.6 C496.8 1021.3 494.1 1033.2 492.6 1039.9 C491.1 1046.6 489.5 1050.5 488.5 1058.0 C487.6 1065.5 487.2 1080.4 486.9 1084.9" fill="none" stroke="#e0977c" stroke-width="16.3" stroke-linecap="round" stroke-linejoin="round"/>
<path d="M334.0 1022.3 C341.1 1019.7 366.4 1012.5 376.6 1007.0 C386.7 1001.6 391.8 992.7 394.8 989.8" fill="none" stroke="#e0977c" stroke-width="13.3" stroke-linecap="round" stroke-linejoin="round"/>
<path d="M334.0 866.1 C338.4 867.3 351.9 870.8 360.3 873.2 C368.8 875.5 380.6 879.1 384.7 880.3" fill="none" stroke="#e0977c" stroke-width="9.3" stroke-linecap="round" stroke-linejoin="round"/>
<path d="M334.0 889.4 C338.0 890.6 350.4 894.3 358.3 896.5 C366.3 898.7 377.8 901.6 381.6 902.6" fill="none" stroke="#e0977c" stroke-width="9.3" stroke-linecap="round" stroke-linejoin="round"/>
<path d="M475.5 203.0 C474.1 207.0 470.1 218.1 467.4 227.2 C464.7 236.3 461.6 247.4 459.3 257.5 C456.9 267.6 454.7 276.1 453.2 287.8 C451.7 299.6 450.9 314.8 450.2 328.3 C449.5 341.7 448.8 355.2 449.2 368.7 C449.5 382.2 451.2 399.7 452.2 409.1 C453.2 418.5 454.7 422.4 455.2 425.1" fill="none" stroke="#f7b097" stroke-width="8.6" stroke-linecap="round" stroke-linejoin="round"/>
<path d="M452.2 423.0 C452.7 426.7 453.6 438.1 455.2 445.2 C456.9 452.3 460.3 458.7 462.3 465.4 C464.3 472.2 466.9 477.2 467.4 485.6 C467.9 494.1 466.7 504.2 465.3 515.9 C464.0 527.7 462.0 543.9 459.3 556.4 C456.6 568.8 453.6 579.6 449.2 590.7 C444.8 601.8 437.4 614.3 433.0 623.1 C428.6 631.8 424.6 639.7 422.9 643.1" fill="none" stroke="#f7b097" stroke-width="8.6" stroke-linecap="round" stroke-linejoin="round"/>
<path d="M558.3 203.0 C558.5 207.0 557.6 219.1 559.3 227.2 C561.0 235.3 563.5 241.4 568.4 251.5 C573.3 261.6 582.2 276.1 588.6 287.8 C595.0 299.6 602.6 312.8 606.8 322.2 C611.0 331.6 612.9 336.7 613.9 344.4 C614.9 352.2 613.9 359.6 612.9 368.7 C611.9 377.8 610.2 389.6 607.8 399.0 C605.5 408.4 600.2 420.7 598.7 425.1" fill="none" stroke="#f7b097" stroke-width="8.6" stroke-linecap="round" stroke-linejoin="round"/>
<path d="M598.7 423.0 L594.7 435.1" fill="none" stroke="#f7b097" stroke-width="8.6" stroke-linecap="round" stroke-linejoin="round"/>
<path d="M613.9 344.4 C618.1 346.5 628.2 351.5 639.2 356.6 C650.1 361.6 670.8 370.7 679.6 374.7 C688.3 378.8 684.3 376.4 691.7 380.8 C699.1 385.2 718.6 397.6 724.0 401.0" fill="none" stroke="#f7b097" stroke-width="8.6" stroke-linecap="round" stroke-linejoin="round"/>
<path d="M728.1 314.1 C725.0 319.2 716.0 333.3 709.9 344.4 C703.8 355.5 696.8 370.0 691.7 380.8 C686.6 391.6 683.3 401.7 679.6 409.1 C675.9 416.5 671.2 422.4 669.5 425.1" fill="none" stroke="#f7b097" stroke-width="8.6" stroke-linecap="round" stroke-linejoin="round"/>
<path d="M670.5 423.0 C667.3 428.4 656.5 446.6 651.3 455.3 C646.1 464.1 644.5 467.1 639.2 475.5 C633.8 483.9 626.0 495.4 618.9 505.8 C611.9 516.3 603.4 526.4 596.7 538.2 C590.0 550.0 585.3 563.4 578.5 576.6 C571.8 589.7 563.0 607.2 556.3 617.0 C549.6 626.8 542.8 630.8 538.1 635.2 C533.4 639.5 529.7 641.8 528.0 643.1" fill="none" stroke="#f7b097" stroke-width="8.6" stroke-linecap="round" stroke-linejoin="round"/>
<path d="M463.3 460.4 C466.4 458.2 477.6 452.1 481.5 447.2 C485.4 442.3 484.2 435.8 486.6 431.1 C488.9 426.3 494.1 421.0 495.7 418.9" fill="none" stroke="#f7b097" stroke-width="8.6" stroke-linecap="round" stroke-linejoin="round"/>
<path d="M486.6 429.3 C488.1 428.0 491.1 423.7 495.7 421.6 C500.2 419.5 506.8 417.3 513.8 416.8 C520.9 416.3 530.4 417.2 538.1 418.8 C545.8 420.4 556.6 425.0 560.3 426.3" fill="none" stroke="#f7b097" stroke-width="8.6" stroke-linecap="round" stroke-linejoin="round"/>
<path d="M557.3 424.0 C560.2 425.5 568.2 431.2 574.5 433.1 C580.7 434.9 587.3 432.1 594.7 435.1 C602.1 438.1 610.5 445.9 618.9 451.3 C627.4 456.7 636.8 462.1 645.2 467.4 C653.6 472.8 661.7 477.2 669.5 483.6 C677.2 490.0 685.0 498.1 691.7 505.8 C698.4 513.6 704.2 522.3 709.9 530.1 C715.6 537.8 723.4 548.6 726.1 552.3" fill="none" stroke="#f7b097" stroke-width="8.6" stroke-linecap="round" stroke-linejoin="round"/>
<path d="M334.0 639.6 C342.7 638.9 371.7 635.6 386.5 635.2 C401.3 634.8 416.8 636.9 422.9 637.2" fill="none" stroke="#f7b097" stroke-width="8.6" stroke-linecap="round" stroke-linejoin="round"/>
<path d="M426.9 641.0 C426.3 644.7 424.3 654.5 422.9 663.2 C421.6 672.0 420.0 680.1 418.9 693.5 C417.7 707.0 416.8 728.9 415.8 744.1 C414.8 759.2 414.3 771.7 412.8 784.5 C411.3 797.3 409.8 808.1 406.7 820.8 C403.7 833.6 396.6 854.4 394.6 861.1" fill="none" stroke="#f7b097" stroke-width="8.6" stroke-linecap="round" stroke-linejoin="round"/>
<path d="M334.0 681.8 C341.1 680.7 361.9 678.1 376.4 675.3 C390.9 672.6 413.5 666.9 420.9 665.2" fill="none" stroke="#f7b097" stroke-width="8.6" stroke-linecap="round" stroke-linejoin="round"/>
<path d="M424.9 659.2 C427.6 660.2 432.3 664.9 441.1 665.2 C449.9 665.6 466.4 663.2 477.5 661.2 C488.6 659.2 498.7 656.5 507.8 653.1 C516.9 649.7 528.0 643.0 532.0 641.0" fill="none" stroke="#f7b097" stroke-width="8.6" stroke-linecap="round" stroke-linejoin="round"/>
<path d="M395.2 860.0 C393.8 864.2 389.1 877.4 386.7 885.3 C384.3 893.3 383.3 899.9 380.6 907.7 C377.9 915.4 372.3 925.2 370.5 932.0 C368.6 938.8 368.5 942.5 369.5 948.2 C370.5 954.0 372.7 960.4 376.6 966.5 C380.5 972.6 386.0 979.7 392.8 984.7 C399.6 989.8 406.3 992.8 417.1 996.9 C428.0 1001.0 444.2 1005.4 457.7 1009.1 C471.2 1012.8 491.5 1017.5 498.3 1019.2" fill="none" stroke="#f7b097" stroke-width="8.6" stroke-linecap="round" stroke-linejoin="round"/>
<path d="M497.7 1017.6 C496.8 1021.3 494.1 1033.2 492.6 1039.9 C491.1 1046.6 489.5 1050.5 488.5 1058.0 C487.6 1065.5 487.2 1080.4 486.9 1084.9" fill="none" stroke="#f7b097" stroke-width="15" stroke-linecap="round" stroke-linejoin="round"/>
<path d="M334.0 1022.3 C341.1 1019.7 366.4 1012.5 376.6 1007.0 C386.7 1001.6 391.8 992.7 394.8 989.8" fill="none" stroke="#f7b097" stroke-width="12" stroke-linecap="round" stroke-linejoin="round"/>
<path d="M334.0 866.1 C338.4 867.3 351.9 870.8 360.3 873.2 C368.8 875.5 380.6 879.1 384.7 880.3" fill="none" stroke="#f7b097" stroke-width="8" stroke-linecap="round" stroke-linejoin="round"/>
<path d="M334.0 889.4 C338.0 890.6 350.4 894.3 358.3 896.5 C366.3 898.7 377.8 901.6 381.6 902.6" fill="none" stroke="#f7b097" stroke-width="8" stroke-linecap="round" stroke-linejoin="round"/>
<rect x="593.3" y="442.2" width="31" height="17" rx="3.5" fill="#fdfdfd" stroke="#8a8a8a" stroke-width="1"/><text x="608.8" y="455.0" font-size="11.5" fill="#555" text-anchor="middle" textLength="24" lengthAdjust="spacingAndGlyphs">R135</text>
<rect x="605.5" y="491.3" width="31" height="17" rx="3.5" fill="#fdfdfd" stroke="#8a8a8a" stroke-width="1"/><text x="621.0" y="504.1" font-size="11.5" fill="#555" text-anchor="middle" textLength="24" lengthAdjust="spacingAndGlyphs">R804</text>
<rect x="384.6" y="830.9" width="31" height="17" rx="3.5" fill="#fdfdfd" stroke="#8a8a8a" stroke-width="1"/><text x="400.1" y="843.7" font-size="11.5" fill="#555" text-anchor="middle" textLength="24" lengthAdjust="spacingAndGlyphs">R108</text>
<rect x="600.4" y="892.1" width="31" height="17" rx="3.5" fill="#fdfdfd" stroke="#8a8a8a" stroke-width="1"/><text x="615.9" y="904.9" font-size="11.5" fill="#555" text-anchor="middle" textLength="24" lengthAdjust="spacingAndGlyphs">R148</text>
<rect x="343.8" y="1008.1" width="31" height="17" rx="3.5" fill="#fdfdfd" stroke="#8a8a8a" stroke-width="1"/><text x="359.3" y="1020.9" font-size="11.5" fill="#555" text-anchor="middle" textLength="24" lengthAdjust="spacingAndGlyphs">R810</text>
<text x="564.4" y="222.8" font-size="15.5" font-weight="700" fill="#1a1a1a" letter-spacing="1.0" stroke="#f6f2dc" stroke-width="2.2" stroke-opacity=".75" paint-order="stroke" stroke-linejoin="round">Phibsborough</text>
<text x="644.2" y="237.3" font-size="12" fill="#ef9a78" letter-spacing="0.4" stroke="#f6f2dc" stroke-width="2.2" stroke-opacity=".75" paint-order="stroke" stroke-linejoin="round">The Mater</text>
<text x="648.9" y="252.5" font-size="12" fill="#ef9a78" letter-spacing="0.4" stroke="#f6f2dc" stroke-width="2.2" stroke-opacity=".75" paint-order="stroke" stroke-linejoin="round">Hospital</text>
<text x="384.5" y="234.3" font-size="13.5" fill="#595959" letter-spacing="0.75" stroke="#f6f2dc" stroke-width="2.2" stroke-opacity=".75" paint-order="stroke" stroke-linejoin="round" transform="rotate(17 384.5 234.3)">Monck Place</text>
<text x="518.9" y="278.7" font-size="13.5" fill="#595959" letter-spacing="0.75" stroke="#f6f2dc" stroke-width="2.2" stroke-opacity=".75" paint-order="stroke" stroke-linejoin="round" transform="rotate(-84 518.9 278.7)">Goldsmith</text>
<text x="483.9" y="287.0" font-size="13.5" fill="#595959" letter-spacing="0.75" stroke="#f6f2dc" stroke-width="2.2" stroke-opacity=".75" paint-order="stroke" stroke-linejoin="round" transform="rotate(9 483.9 287.0)">Geraldine</text>
<text x="551.8" y="298.4" font-size="13.5" fill="#595959" letter-spacing="0.75" stroke="#f6f2dc" stroke-width="2.2" stroke-opacity=".75" paint-order="stroke" stroke-linejoin="round" transform="rotate(-19 551.8 298.4)">Street</text>
<text x="554.3" y="205.0" font-size="13.5" fill="#5a4038" letter-spacing="0.75" stroke="#f6f2dc" stroke-width="2.2" stroke-opacity=".75" paint-order="stroke" stroke-linejoin="round" transform="rotate(72 554.3 205.0)">ley Road</text>
<text x="603.8" y="250.5" font-size="13.5" fill="#595959" letter-spacing="0.75" stroke="#f6f2dc" stroke-width="2.2" stroke-opacity=".75" paint-order="stroke" stroke-linejoin="round" transform="rotate(27 603.8 250.5)">Eccles Street</text>
<text x="720.0" y="255.5" font-size="13.5" fill="#595959" letter-spacing="0.75" stroke="#f6f2dc" stroke-width="2.2" stroke-opacity=".75" paint-order="stroke" stroke-linejoin="round" transform="rotate(-86 720.0 255.5)">Leo Str</text>
<text x="455.8" y="425.1" font-size="13.5" fill="#5a4038" letter-spacing="0.75" stroke="#f6f2dc" stroke-width="2.2" stroke-opacity=".75" paint-order="stroke" stroke-linejoin="round" transform="rotate(-88 455.8 425.1)">Phibsborough Road</text>
<text x="479.1" y="416.2" font-size="13.5" fill="#595959" letter-spacing="0.75" stroke="#f6f2dc" stroke-width="2.2" stroke-opacity=".75" paint-order="stroke" stroke-linejoin="round" transform="rotate(-80 479.1 416.2)">Royal Canal Bank</text>
<text x="495.7" y="392.9" font-size="13.5" fill="#595959" letter-spacing="0.75" stroke="#f6f2dc" stroke-width="2.2" stroke-opacity=".75" paint-order="stroke" stroke-linejoin="round" transform="rotate(14 495.7 392.9)">Fontenoy Street</text>
<text x="484.5" y="434.6" font-size="13.5" fill="#5a4038" letter-spacing="0.75" stroke="#f6f2dc" stroke-width="2.2" stroke-opacity=".75" paint-order="stroke" stroke-linejoin="round" transform="rotate(-19 484.5 434.6)">Western</text>
<text x="538.1" y="425.5" font-size="13.5" fill="#5a4038" letter-spacing="0.75" stroke="#f6f2dc" stroke-width="2.2" stroke-opacity=".75" paint-order="stroke" stroke-linejoin="round" transform="rotate(24 538.1 425.5)">Way</text>
<text x="639.2" y="481.6" font-size="13.5" fill="#5a4038" letter-spacing="0.75" stroke="#f6f2dc" stroke-width="2.2" stroke-opacity=".75" paint-order="stroke" stroke-linejoin="round" transform="rotate(-62 639.2 481.6)">Dorset Street Upper</text>
<text x="389.0" y="423.0" font-size="13.5" fill="#595959" letter-spacing="0.75" stroke="#f6f2dc" stroke-width="2.2" stroke-opacity=".75" paint-order="stroke" stroke-linejoin="round" transform="rotate(72 389.0 423.0)">Broadstone</text>
<text x="471.8" y="449.3" font-size="13.5" fill="#595959" letter-spacing="0.75" stroke="#f6f2dc" stroke-width="2.2" stroke-opacity=".75" paint-order="stroke" stroke-linejoin="round" transform="rotate(33 471.8 449.3)">Dominick Street Upper</text>
<text x="459.3" y="499.4" font-size="12" fill="#6d8f4a" letter-spacing="0.5" stroke="#f6f2dc" stroke-width="2.2" stroke-opacity=".75" paint-order="stroke" stroke-linejoin="round">Broadstone</text>
<text x="479.1" y="513.9" font-size="12" fill="#6d8f4a" letter-spacing="0.5" stroke="#f6f2dc" stroke-width="2.2" stroke-opacity=".75" paint-order="stroke" stroke-linejoin="round">Park</text>
<text x="435.4" y="593.1" font-size="13.5" fill="#595959" letter-spacing="0.75" stroke="#f6f2dc" stroke-width="2.2" stroke-opacity=".75" paint-order="stroke" stroke-linejoin="round" transform="rotate(-86 435.4 593.1)">Prebend Street</text>
<text x="682.0" y="507.9" font-size="13.5" fill="#5a4038" letter-spacing="0.75" stroke="#f6f2dc" stroke-width="2.2" stroke-opacity=".75" paint-order="stroke" stroke-linejoin="round" transform="rotate(45 682.0 507.9)">N1</text>
<text x="666.4" y="550.3" font-size="13.5" fill="#595959" letter-spacing="0.75" stroke="#f6f2dc" stroke-width="2.2" stroke-opacity=".75" paint-order="stroke" stroke-linejoin="round" transform="rotate(42 666.4 550.3)">Granby Plac</text>
<text x="530.4" y="643.1" font-size="13.5" fill="#595959" letter-spacing="0.75" stroke="#f6f2dc" stroke-width="2.2" stroke-opacity=".75" paint-order="stroke" stroke-linejoin="round" transform="rotate(-66 530.4 643.1)">Henrietta Place</text>
<text x="555.3" y="621.0" font-size="13.5" fill="#5a4038" letter-spacing="0.75" stroke="#f6f2dc" stroke-width="2.2" stroke-opacity=".75" paint-order="stroke" stroke-linejoin="round" transform="rotate(-64 555.3 621.0)">Bolton Street</text>
<text x="583.6" y="675.6" font-size="13.5" fill="#595959" letter-spacing="0.75" stroke="#f6f2dc" stroke-width="2.2" stroke-opacity=".75" paint-order="stroke" stroke-linejoin="round" transform="rotate(-42 583.6 675.6)">Loftus Lane</text>
<text x="330.3" y="687.9" font-size="13.5" fill="#5a4038" letter-spacing="0.75" stroke="#f6f2dc" stroke-width="2.2" stroke-opacity=".75" paint-order="stroke" stroke-linejoin="round" transform="rotate(-12 330.3 687.9)">Street North</text>
<text x="380.5" y="706.1" font-size="15.5" font-weight="700" fill="#1a1a1a" letter-spacing="1.0" stroke="#f6f2dc" stroke-width="2.2" stroke-opacity=".75" paint-order="stroke" stroke-linejoin="round">Smithfield</text>
<text x="355.8" y="797.6" font-size="13.5" fill="#595959" letter-spacing="0.75" stroke="#f6f2dc" stroke-width="2.2" stroke-opacity=".75" paint-order="stroke" stroke-linejoin="round" transform="rotate(-74 355.8 797.6)">Bow Street</text>
<text x="408.4" y="822.9" font-size="13.5" fill="#5a4038" letter-spacing="0.75" stroke="#f6f2dc" stroke-width="2.2" stroke-opacity=".75" paint-order="stroke" stroke-linejoin="round" transform="rotate(-84 408.4 822.9)">Church Street</text>
<text x="428.6" y="774.0" font-size="13.5" fill="#595959" letter-spacing="0.75" stroke="#f6f2dc" stroke-width="2.2" stroke-opacity=".75" paint-order="stroke" stroke-linejoin="round" transform="rotate(-5 428.6 774.0)">Mary&#39;s Lane</text>
<text x="518.9" y="754.6" font-size="13.5" fill="#595959" letter-spacing="0.75" stroke="#f6f2dc" stroke-width="2.2" stroke-opacity=".75" paint-order="stroke" stroke-linejoin="round" transform="rotate(-90 518.9 754.6)">Halston Street</text>
<text x="538.1" y="756.2" font-size="13.5" fill="#595959" letter-spacing="0.75" stroke="#f6f2dc" stroke-width="2.2" stroke-opacity=".75" paint-order="stroke" stroke-linejoin="round" transform="rotate(85 538.1 756.2)">Arran Street East</text>
<text x="574.5" y="705.7" font-size="13.5" fill="#595959" letter-spacing="0.75" stroke="#f6f2dc" stroke-width="2.2" stroke-opacity=".75" paint-order="stroke" stroke-linejoin="round" transform="rotate(78 574.5 705.7)">Capel Street</text>
<text x="610.9" y="668.3" font-size="13.5" fill="#595959" letter-spacing="0.75" stroke="#f6f2dc" stroke-width="2.2" stroke-opacity=".75" paint-order="stroke" stroke-linejoin="round" transform="rotate(78 610.9 668.3)">Wolfe Tone Street</text>
<text x="640.2" y="700.6" font-size="13.5" fill="#595959" letter-spacing="0.75" stroke="#f6f2dc" stroke-width="2.2" stroke-opacity=".75" paint-order="stroke" stroke-linejoin="round" transform="rotate(78 640.2 700.6)">Jervis Street</text>
<text x="655.3" y="665.6" font-size="12" fill="#8a8a80" letter-spacing="0.4" stroke="#f6f2dc" stroke-width="2.2" stroke-opacity=".75" paint-order="stroke" stroke-linejoin="round">Aldi</text>
<text x="680.6" y="667.7" font-size="12" fill="#8a8a80" letter-spacing="0.4" stroke="#f6f2dc" stroke-width="2.2" stroke-opacity=".75" paint-order="stroke" stroke-linejoin="round">Ilac</text>
<text x="671.5" y="682.8" font-size="12" fill="#8a8a80" letter-spacing="0.4" stroke="#f6f2dc" stroke-width="2.2" stroke-opacity=".75" paint-order="stroke" stroke-linejoin="round">Centre</text>
<text x="598.7" y="811.8" font-size="13.5" fill="#595959" letter-spacing="0.75" stroke="#f6f2dc" stroke-width="2.2" stroke-opacity=".75" paint-order="stroke" stroke-linejoin="round" transform="rotate(-15 598.7 811.8)">Abbey Street Upper</text>
<text x="614.9" y="847.1" font-size="13.5" fill="#595959" letter-spacing="0.75" stroke="#f6f2dc" stroke-width="2.2" stroke-opacity=".75" paint-order="stroke" stroke-linejoin="round" transform="rotate(-14 614.9 847.1)">Strand Street Gr</text>
<text x="335.0" y="868.7" font-size="13.5" fill="#5a4038" letter-spacing="0.75" stroke="#f6f2dc" stroke-width="2.2" stroke-opacity=".75" paint-order="stroke" stroke-linejoin="round" transform="rotate(16 335.0 868.7)">Quay</text>
<text x="344.1" y="891.4" font-size="13.5" fill="#5a4038" letter-spacing="0.75" stroke="#f6f2dc" stroke-width="2.2" stroke-opacity=".75" paint-order="stroke" stroke-linejoin="round" transform="rotate(17 344.1 891.4)">Quay</text>
<text x="414.1" y="887.4" font-size="13.5" fill="#595959" letter-spacing="0.75" stroke="#f6f2dc" stroke-width="2.2" stroke-opacity=".75" paint-order="stroke" stroke-linejoin="round" transform="rotate(6 414.1 887.4)">Inns Quay</text>
<text x="643.3" y="899.1" font-size="13.5" fill="#595959" letter-spacing="0.75" stroke="#f6f2dc" stroke-width="2.2" stroke-opacity=".75" paint-order="stroke" stroke-linejoin="round" transform="rotate(-15 643.3 899.1)">Wellington Q</text>
<text x="680.2" y="914.8" font-size="15.5" font-weight="700" fill="#1a1a1a" letter-spacing="1.0" stroke="#f6f2dc" stroke-width="2.2" stroke-opacity=".75" paint-order="stroke" stroke-linejoin="round">Temple</text>
<text x="396.9" y="962.4" font-size="13.5" fill="#595959" letter-spacing="0.75" stroke="#f6f2dc" stroke-width="2.2" stroke-opacity=".75" paint-order="stroke" stroke-linejoin="round" transform="rotate(-1 396.9 962.4)">Cook Street</text>
<text x="688.3" y="978.2" font-size="13.5" fill="#595959" letter-spacing="0.75" stroke="#f6f2dc" stroke-width="2.2" stroke-opacity=".75" paint-order="stroke" stroke-linejoin="round">Dame</text>
<text x="552.0" y="1011.5" font-size="13.5" fill="#595959" letter-spacing="0.75" stroke="#f6f2dc" stroke-width="2.2" stroke-opacity=".75" paint-order="stroke" stroke-linejoin="round" transform="rotate(-22 552.0 1011.5)">Castle Street</text>
<text x="601.7" y="1044.6" font-size="13.5" fill="#595959" letter-spacing="0.75" stroke="#f6f2dc" stroke-width="2.2" stroke-opacity=".75" paint-order="stroke" stroke-linejoin="round" transform="rotate(-21 601.7 1044.6)">Ship Street</text>
<text x="675.1" y="1008.1" font-size="13.5" fill="#595959" letter-spacing="0.75" stroke="#f6f2dc" stroke-width="2.2" stroke-opacity=".75" paint-order="stroke" stroke-linejoin="round" transform="rotate(-86 675.1 1008.1)">Gate</text>
<text x="416.1" y="1001.0" font-size="13.5" fill="#595959" letter-spacing="0.75" stroke="#f6f2dc" stroke-width="2.2" stroke-opacity=".75" paint-order="stroke" stroke-linejoin="round" transform="rotate(46 416.1 1001.0)">Back Lane</text>
<text x="390.4" y="1008.1" font-size="13.5" fill="#595959" letter-spacing="0.75" stroke="#f6f2dc" stroke-width="2.2" stroke-opacity=".75" paint-order="stroke" stroke-linejoin="round" transform="rotate(48 390.4 1008.1)">Lamb Alley</text>
<text x="493.2" y="1056.1" font-size="13.5" fill="#5a4038" letter-spacing="0.75" stroke="#f6f2dc" stroke-width="2.2" stroke-opacity=".75" paint-order="stroke" stroke-linejoin="round" transform="rotate(-78 493.2 1056.1)">N81</text>
<text x="486.1" y="1071.5" font-size="13.5" fill="#595959" letter-spacing="0.75" stroke="#f6f2dc" stroke-width="2.2" stroke-opacity=".75" paint-order="stroke" stroke-linejoin="round" transform="rotate(3 486.1 1071.5)">Ross Road</text>
</svg>
<!-- map controls -->
<div class="a" style="left:349px;top:219.5px;width:38px;height:76px;border-radius:19px;background:#fff;border:1px solid #777;box-shadow:0 3px 4px rgba(0,0,0,.35)"></div>
<div class="a" style="left:349px;top:309.5px;width:38px;height:38px;border-radius:19px;background:#fff;border:1px solid #777;box-shadow:0 4px 6px rgba(0,0,0,.45)"></div>

<!-- ===== top toolbar ===== -->
<div class="a" style="left:0;top:0;width:1920px;height:80px;background:#005581"></div>
<!-- ===== side menu ===== -->
<div class="a" style="left:0;top:80px;width:313px;height:1000px;background:#005581"></div>
<div class="a" style="left:0;top:182.3px;width:313px;height:51px;background:#3c6f97"></div>
<div class="sep" style="top:79.7px"></div><div class="sep" style="top:130.7px"></div><div class="sep" style="top:181.7px"></div><div class="sep" style="top:232.7px"></div><div class="sep" style="top:283.7px"></div><div class="sep" style="top:334.7px"></div><div class="sep" style="top:385.7px"></div><div class="sep" style="top:436.7px"></div><div class="sep" style="top:487.7px"></div><div class="sep" style="top:538.7px"></div><div class="sep" style="top:589.7px"></div><div class="sep" style="top:640.7px"></div><div class="sep" style="top:691.7px"></div><div class="sep" style="top:742.7px"></div><div class="sep" style="top:793.7px"></div><div class="sep" style="top:844.7px"></div>

<!-- ===== right panel ===== -->
<div class="a" style="left:313px;top:80px;width:1607px;height:1000px;overflow:hidden;pointer-events:none"><div class="a" id="panel" style="left:412px;top:0;width:1195px;height:1000px;background:#fff;overflow:hidden;box-shadow:0 10px 12.5px -6px rgba(0,0,0,.2),0 20px 30px 2.5px rgba(0,0,0,.14),0 7.5px 37.5px 6px rgba(0,0,0,.12)">
  <div class="a" style="left:0;top:0;width:1195px;height:124.5px;background:#005581"></div>
  <!-- scroll content -->
  <div class="a" style="left:0;top:210px;width:1195px;height:790px;overflow:hidden">
    <!-- card 1 : top 300 => local 10 -->
    <div class="a" style="left:20px;top:10px;width:1148px;height:508px;background:#fff;border-radius:5px;box-shadow:0 0 14px 8px rgba(0,0,0,.028),0 0 4px 1px rgba(0,0,0,.02)"></div>
    <div class="a" style="left:20px;top:538px;width:1148px;height:400px;background:#fff;border-radius:5px;box-shadow:0 0 14px 8px rgba(0,0,0,.028),0 0 4px 1px rgba(0,0,0,.02)"></div>
  </div>
  <!-- scrollbar thumb -->
  <div class="a" style="left:1188px;top:210px;width:7px;height:201px;background:#d2d2d2"></div>
</div></div>

<!-- header toggle: Basic / Advanced -->
<div class="a" style="left:1570px;top:123px;width:190px;height:40px;border-radius:20px;background:rgba(0,0,0,.07)"></div>
<div class="a" style="left:1573px;top:126px;width:74.5px;height:33px;border-radius:17px;background:#fff"></div>

<!-- action buttons -->
<div class="a" style="left:1639.5px;top:235px;width:125px;height:45px;border:1px solid #dedede;border-radius:5px;background:#fff"></div>
<div class="a" style="left:1780px;top:235px;width:110px;height:45px;border-radius:5px;background:#e0e0e0"></div>

<!-- Map type card content -->
<div class="a" style="left:1721.5px;top:320px;width:151.5px;height:40px;border-radius:20px;background:#f0f0f0"></div>
<div class="a" style="left:1723px;top:323px;width:68px;height:35px;border-radius:17.5px;background:#f0f5fa;border:1.5px solid #0b5a8a"></div>
<div class="a" style="left:765.5px;top:380px;width:1107px;height:342.5px;border:1px solid #e0e0e0;border-radius:7px"></div>
<div class="a" style="left:766px;top:440px;width:1106px;height:1px;background:#e0e0e0"></div>
<!-- rows -->
<div class="inp" style="left:781px;top:457.4px;width:299px;height:49.4px"></div><div class="inp" style="left:1095px;top:456.5px;width:298px;height:50.5px"></div><div class="inp" style="left:1408px;top:456.5px;width:299px;height:50.5px"></div>
<div class="inp" style="left:781px;top:523.2px;width:299px;height:49.4px"></div><div class="inp" style="left:1095px;top:522.9px;width:298px;height:50.5px"></div><div class="inp" style="left:1408px;top:522.9px;width:299px;height:50.5px"></div>
<div class="inp" style="left:781px;top:590px;width:299px;height:49.4px"></div><div class="inp" style="left:1095px;top:589.3px;width:298px;height:50.5px"></div><div class="inp" style="left:1408px;top:589.3px;width:299px;height:50.5px"></div>
<div class="inp" style="left:781px;top:656.4px;width:299px;height:49.4px"></div><div class="inp" style="left:1095px;top:655.7px;width:298px;height:50.5px"></div><div class="inp" style="left:1408px;top:655.7px;width:299px;height:50.5px"></div>
<div class="tri" style="left:1365.5px;top:480px"></div><div class="tri" style="left:1679.5px;top:480px"></div>
<div class="tri" style="left:1365.5px;top:546.4px"></div><div class="tri" style="left:1679.5px;top:546.4px"></div>
<div class="tri" style="left:1365.5px;top:612.8px"></div><div class="tri" style="left:1679.5px;top:612.8px"></div>
<div class="tri" style="left:1365.5px;top:679.2px"></div><div class="tri" style="left:1679.5px;top:679.2px"></div>
<!-- add layer button -->
<div class="a" style="left:765.5px;top:743.5px;width:117px;height:44px;border:1px solid #dedede;border-radius:5px;background:#fff"></div>

<!-- Overlays card content -->
<div class="a" style="left:1582px;top:848px;width:291px;height:40px;border-radius:20px;background:#f0f0f0"></div>
<div class="a" style="left:1584px;top:851px;width:98px;height:35px;border-radius:17.5px;background:#f0f5fa;border:1.5px solid #0b5a8a"></div>
<div class="a" style="left:765.5px;top:908px;width:1107px;height:141.5px;border:1px solid #e0e0e0;border-radius:7px"></div>
<div class="a" style="left:766px;top:968px;width:1106px;height:1px;background:#e0e0e0"></div>
<div class="a" style="left:765.5px;top:1070px;width:135px;height:44px;border:1px solid #dedede;border-radius:5px;background:#fff"></div>

<svg class="ic" style="left:352.50px;top:25.00px" width="30" height="30" viewBox="0 0 24 24"><path fill="#c6d7e2" d="M3 13h8V3H3v10zm0 8h8v-6H3v6zm10 0h8V11h-8v10zm0-18v6h8V3h-8z"/></svg>
<svg class="ic" style="left:571.90px;top:25.00px" width="30" height="30" viewBox="0 0 24 24"><path fill="#fff" d="M3 13h8V3H3v10zm0 8h8v-6H3v6zm10 0h8V11h-8v10zm0-18v6h8V3h-8z"/></svg>
<svg class="ic" style="left:1522.40px;top:25.30px" width="30" height="30" viewBox="0 0 24 24"><path fill="#fff" d="M7 14H5v5h5v-2H7v-3zm-2-4h2V7h3V5H5v5zm12 7h-3v2h5v-5h-2v3zM14 5v2h3v3h2V5h-5z"/></svg>
<svg class="ic" style="left:1582.50px;top:25.30px" width="30" height="30" viewBox="0 0 24 24"><path fill="#fff" d="M12 22c1.1 0 2-.9 2-2h-4c0 1.1.89 2 2 2zm6-6v-5c0-3.07-1.64-5.64-4.5-6.32V4c0-.83-.67-1.5-1.5-1.5s-1.5.67-1.5 1.5v.68C7.63 5.36 6 7.92 6 11v5l-2 2v1h16v-1l-2-2z"/></svg>
<svg class="ic" style="left:1637.25px;top:17.65px" width="45.5" height="45.5" viewBox="0 0 24 24"><path fill="#fff" d="M12 2C6.48 2 2 6.48 2 12s4.48 10 10 10 10-4.48 10-10S17.52 2 12 2zm0 3c1.66 0 3 1.34 3 3s-1.34 3-3 3-3-1.34-3-3 1.34-3 3-3zm0 14.2c-2.5 0-4.71-1.28-6-3.22.03-1.99 4-3.08 6-3.08 1.99 0 5.97 1.09 6 3.08-1.29 1.94-3.5 3.22-6 3.22z"/></svg>
<svg class="ic" style="left:1855.20px;top:25.30px" width="30" height="30" viewBox="0 0 24 24"><path fill="#fff" d="M12 8c1.1 0 2-.9 2-2s-.9-2-2-2-2 .9-2 2 .9 2 2 2zm0 2c-1.1 0-2 .9-2 2s.9 2 2 2 2-.9 2-2-.9-2-2-2zm0 6c-1.1 0-2 .9-2 2s.9 2 2 2 2-.9 2-2-.9-2-2-2z"/></svg>
<svg class="ic" style="left:20.00px;top:94.45px" width="22.5" height="22.5" viewBox="0 0 24 24"><path fill="#fff" d="M10 20v-6h4v6h5v-8h3L12 3 2 12h3v8z"/></svg>
<svg class="ic" style="left:20.00px;top:145.45px" width="22.5" height="22.5" viewBox="0 0 24 24"><path fill="#fff" d="M12 5.99L19.53 19H4.47L12 5.99M12 2L1 21h22L12 2zm1 14h-2v2h2v-2zm0-6h-2v4h2v-4z"/></svg>
<svg class="ic" style="left:20.00px;top:196.45px" width="22.5" height="22.5" viewBox="0 0 24 24"><path fill="#fff" d="M3 13h8V3H3v10zm0 8h8v-6H3v6zm10 0h8V11h-8v10zm0-18v6h8V3h-8z"/></svg>
<svg class="ic" style="left:20.00px;top:247.45px" width="22.5" height="22.5" viewBox="0 0 24 24"><path fill="#fff" d="M12 2l-5.5 9h11zM17.5 13a4.5 4.5 0 1 0 0 9a4.5 4.5 0 1 0 0-9zM3 13.5h8v8H3z"/></svg>
<svg class="ic" style="left:20.00px;top:298.45px" width="22.5" height="22.5" viewBox="0 0 24 24"><path fill="#fff" d="M20 7h-5V4c0-1.1-.9-2-2-2h-2c-1.1 0-2 .9-2 2v3H4c-1.1 0-2 .9-2 2v11c0 1.1.9 2 2 2h16c1.1 0 2-.9 2-2V9c0-1.1-.9-2-2-2zM9 12c.83 0 1.5.67 1.5 1.5S9.83 15 9 15s-1.5-.67-1.5-1.5S8.17 12 9 12zm3 6H6v-.75c0-1 2-1.5 3-1.5s3 .5 3 1.5V18zm1-9h-2V4h2v5zm5 7.5h-4V15h4v1.5zm0-3h-4V12h4v1.5z"/></svg>
<svg class="ic" style="left:20.00px;top:349.45px" width="22.5" height="22.5" viewBox="0 0 24 24"><path fill="#fff" d="M16.5 12c1.38 0 2.49-1.12 2.49-2.5S17.88 7 16.5 7C15.12 7 14 8.12 14 9.5s1.12 2.5 2.5 2.5zM9 11c1.66 0 2.99-1.34 2.99-3S10.66 5 9 5C7.34 5 6 6.34 6 8s1.34 3 3 3zm7.5 3c-1.83 0-5.5.92-5.5 2.75V19h11v-2.25c0-1.83-3.67-2.75-5.5-2.75zM9 13c-2.33 0-7 1.17-7 3.5V19h7v-2.25c0-.85.33-2.34 2.37-3.47C10.5 13.1 9.66 13 9 13z"/></svg>
<svg class="ic" style="left:20.00px;top:400.45px" width="22.5" height="22.5" viewBox="0 0 24 24"><path fill="#fff" d="M7.77 6.76L6.23 5.48.82 12l5.41 6.52 1.54-1.28L3.42 12l4.35-5.24zM7 13h2v-2H7v2zm10-2h-2v2h2v-2zm-6 2h2v-2h-2v2zm6.77-7.52l-1.54 1.28L20.58 12l-4.35 5.24 1.54 1.28L23.18 12l-5.41-6.52z"/></svg>
<svg class="ic" style="left:20.00px;top:451.45px" width="22.5" height="22.5" viewBox="0 0 24 24"><path fill="#fff" d="M12 5c-3.87 0-7 3.13-7 7h2c0-2.76 2.24-5 5-5s5 2.24 5 5h2c0-3.87-3.13-7-7-7zm1 9.29c.88-.39 1.5-1.26 1.5-2.29 0-1.38-1.12-2.5-2.5-2.5S9.5 10.62 9.5 12c0 1.02.62 1.9 1.5 2.29v3.3L7.59 21 9 22.41l3-3 3 3L16.41 21 13 17.59v-3.3zM12 1C5.93 1 1 5.93 1 12h2c0-4.97 4.03-9 9-9s9 4.03 9 9h2c0-6.07-4.93-11-11-11z"/></svg>
<svg class="ic" style="left:20.00px;top:502.45px" width="22.5" height="22.5" viewBox="0 0 24 24"><path fill="#fff" d="M13.783 15.172l2.121-2.121 5.996 5.996-2.121 2.121zM17.5 10c1.93 0 3.5-1.57 3.5-3.5 0-.58-.16-1.12-.41-1.6l-2.7 2.7-1.49-1.49 2.7-2.7c-.48-.25-1.02-.41-1.6-.41C15.57 3 14 4.57 14 6.5c0 .41.08.8.21 1.16l-1.85 1.85-1.78-1.78.71-.71-1.41-1.41L12 3.49c-1.17-1.17-3.07-1.17-4.24 0L4.22 7.03l1.41 1.41H2.81l-.71.71 3.54 3.54.71-.71V9.15l1.41 1.41.71-.71 1.78 1.78-7.41 7.41 2.12 2.12L16.34 9.79c.36.13.75.21 1.16.21z"/></svg>
<svg class="ic" style="left:20.00px;top:553.45px" width="22.5" height="22.5" viewBox="0 0 24 24"><path fill="#fff" d="M10 4H4c-1.1 0-1.99.9-1.99 2L2 18c0 1.1.9 2 2 2h16c1.1 0 2-.9 2-2V8c0-1.1-.9-2-2-2h-8l-2-2z"/></svg>
<svg class="ic" style="left:20.00px;top:604.45px" width="22.5" height="22.5" viewBox="0 0 24 24"><path fill="#fff" d="M22 6.98V16c0 1.1-.9 2-2 2H6l-4 4V4c0-1.1.9-2 2-2h10.1c-.06.32-.1.66-.1 1 0 2.76 2.24 5 5 5 1.13 0 2.16-.39 3-1.02zM16 3c0 1.66 1.34 3 3 3s3-1.34 3-3-1.34-3-3-3-3 1.34-3 3z"/></svg>
<svg class="ic" style="left:20.00px;top:655.45px" width="22.5" height="22.5" viewBox="0 0 24 24"><path fill="#fff" d="M17 1.01L7 1c-1.1 0-2 .9-2 2v18c0 1.1.9 2 2 2h10c1.1 0 2-.9 2-2V3c0-1.1-.9-1.99-2-1.99zM17 19H7V5h10v14z"/></svg>
<svg class="ic" style="left:20.00px;top:706.45px" width="22.5" height="22.5" viewBox="0 0 24 24"><path fill="#fff" d="M19 3H5c-1.1 0-2 .9-2 2v14c0 1.1.9 2 2 2h14c1.1 0 2-.9 2-2V5c0-1.1-.9-2-2-2zM9 17H7v-7h2v7zm4 0h-2V7h2v10zm4 0h-2v-4h2v4z"/></svg>
<svg class="ic" style="left:20.00px;top:757.45px" width="22.5" height="22.5" viewBox="0 0 24 24"><path fill="#fff" d="M19.14 12.94c.04-.3.06-.61.06-.94 0-.32-.02-.64-.07-.94l2.03-1.58c.18-.14.23-.41.12-.61l-1.92-3.32c-.12-.22-.37-.29-.59-.22l-2.39.96c-.5-.38-1.03-.7-1.62-.94l-.36-2.54c-.04-.24-.24-.41-.48-.41h-3.84c-.24 0-.43.17-.47.41l-.36 2.54c-.59.24-1.13.57-1.62.94l-2.39-.96c-.22-.08-.47 0-.59.22L2.74 8.87c-.12.21-.08.47.12.61l2.03 1.58c-.05.3-.09.63-.09.94s.02.64.07.94l-2.03 1.58c-.18.14-.23.41-.12.61l1.92 3.32c.12.22.37.29.59.22l2.39-.96c.5.38 1.03.7 1.62.94l.36 2.54c.05.24.24.41.48.41h3.84c.24 0 .44-.17.47-.41l.36-2.54c.59-.24 1.13-.56 1.62-.94l2.39.96c.22.08.47 0 .59-.22l1.92-3.32c.12-.22.07-.47-.12-.61l-2.01-1.58zM12 15.6c-1.98 0-3.6-1.62-3.6-3.6s1.62-3.6 3.6-3.6 3.6 1.62 3.6 3.6-1.62 3.6-3.6 3.6z"/></svg>
<svg class="ic" style="left:20.00px;top:808.45px" width="22.5" height="22.5" viewBox="0 0 24 24"><path fill="#fff" d="M12 1L3 5v6c0 5.55 3.84 10.74 9 12 5.16-1.26 9-6.45 9-12V5l-9-4zm0 10.99h7c-.53 4.12-3.28 7.79-7 8.94V12H5V6.3l7-3.11v8.8z"/></svg>
<svg class="ic" style="left:267.70px;top:243.70px" width="30" height="30" viewBox="0 0 24 24"><path fill="none" stroke="#fff" stroke-width="3.0" d="M6.6 9.3L12 14.7L17.4 9.3"/></svg>
<svg class="ic" style="left:267.70px;top:294.70px" width="30" height="30" viewBox="0 0 24 24"><path fill="none" stroke="#fff" stroke-width="3.0" d="M6.6 9.3L12 14.7L17.4 9.3"/></svg>
<svg class="ic" style="left:267.70px;top:447.70px" width="30" height="30" viewBox="0 0 24 24"><path fill="none" stroke="#fff" stroke-width="3.0" d="M6.6 9.3L12 14.7L17.4 9.3"/></svg>
<svg class="ic" style="left:267.70px;top:498.70px" width="30" height="30" viewBox="0 0 24 24"><path fill="none" stroke="#fff" stroke-width="3.0" d="M6.6 9.3L12 14.7L17.4 9.3"/></svg>
<svg class="ic" style="left:267.70px;top:549.70px" width="30" height="30" viewBox="0 0 24 24"><path fill="none" stroke="#fff" stroke-width="3.0" d="M6.6 9.3L12 14.7L17.4 9.3"/></svg>
<svg class="ic" style="left:267.70px;top:804.70px" width="30" height="30" viewBox="0 0 24 24"><path fill="none" stroke="#fff" stroke-width="3.0" d="M6.6 9.3L12 14.7L17.4 9.3"/></svg>
<svg class="ic" style="left:1794.50px;top:127.50px" width="31" height="31" viewBox="0 0 24 24"><path fill="#fff" d="M12 2C6.48 2 2 6.48 2 12s4.48 10 10 10 10-4.48 10-10S17.52 2 12 2zm1 17h-2v-2h2v2zm2.07-7.75l-.9.92C13.45 12.9 13 13.5 13 15h-2v-.5c0-1.1.45-2.1 1.17-2.83l1.24-1.26c.37-.36.59-.86.59-1.41 0-1.1-.9-2-2-2s-2 .9-2 2H8c0-2.21 1.79-4 4-4s4 1.79 4 4c0 .88-.36 1.68-.93 2.25z"/></svg>
<svg class="ic" style="left:1855.00px;top:128.20px" width="30" height="30" viewBox="0 0 24 24"><path fill="#fff" d="M19 6.41L17.59 5 12 10.59 6.41 5 5 6.41 10.59 12 5 17.59 6.41 19 12 13.41 17.59 19 19 17.59 13.41 12z"/></svg>
<svg class="ic" style="left:1519.95px;top:245.95px" width="22.5" height="22.5" viewBox="0 0 24 24"><path fill="#0b5585" d="M12 4.5C7 4.5 2.73 7.61 1 12c1.73 4.39 6 7.5 11 7.5s9.27-3.11 11-7.5c-1.73-4.39-6-7.5-11-7.5zM12 17c-2.76 0-5-2.24-5-5s2.24-5 5-5 5 2.24 5 5-2.24 5-5 5zm0-8c-1.66 0-3 1.34-3 3s1.34 3 3 3 3-1.34 3-3-1.34-3-3-3z"/></svg>
<svg class="ic" style="left:1654.35px;top:245.85px" width="22.5" height="22.5" viewBox="0 0 24 24"><path fill="none" stroke="#a9a9a9" stroke-width="1.5" d="M5.6 5.6L18.4 18.4M18.4 5.6L5.6 18.4"/></svg>
<svg class="ic" style="left:1794.75px;top:246.05px" width="22.5" height="22.5" viewBox="0 0 24 24"><path fill="none" stroke="#9c9c9c" stroke-width="1.5" d="M3.8 12.6L9 17.8L20.5 6.3"/></svg>
<svg class="ic" style="left:1732.20px;top:467.00px" width="30" height="30" viewBox="0 0 24 24"><path fill="#999" d="M19.14 12.94c.04-.3.06-.61.06-.94 0-.32-.02-.64-.07-.94l2.03-1.58c.18-.14.23-.41.12-.61l-1.92-3.32c-.12-.22-.37-.29-.59-.22l-2.39.96c-.5-.38-1.03-.7-1.62-.94l-.36-2.54c-.04-.24-.24-.41-.48-.41h-3.84c-.24 0-.43.17-.47.41l-.36 2.54c-.59.24-1.13.57-1.62.94l-2.39-.96c-.22-.08-.47 0-.59.22L2.74 8.87c-.12.21-.08.47.12.61l2.03 1.58c-.05.3-.09.63-.09.94s.02.64.07.94l-2.03 1.58c-.18.14-.23.41-.12.61l1.92 3.32c.12.22.37.29.59.22l2.39-.96c.5.38 1.03.7 1.62.94l.36 2.54c.05.24.24.41.48.41h3.84c.24 0 .44-.17.47-.41l.36-2.54c.59-.24 1.13-.56 1.62-.94l2.39.96c.22.08.47 0 .59-.22l1.92-3.32c.12-.22.07-.47-.12-.61l-2.01-1.58zM12 15.6c-1.98 0-3.6-1.62-3.6-3.6s1.62-3.6 3.6-3.6 3.6 1.62 3.6 3.6-1.62 3.6-3.6 3.6z"/></svg>
<svg class="ic" style="left:1782.00px;top:466.40px" width="30" height="30" viewBox="0 0 24 24"><path fill="#999" d="M6 19c0 1.1.9 2 2 2h8c1.1 0 2-.9 2-2V7H6v12zM19 4h-3.5l-1-1h-5l-1 1H5v2h14V4z"/></svg>
<svg class="ic" style="left:1832.00px;top:467.00px" width="30" height="30" viewBox="0 0 24 24"><path fill="#999" d="M11 18c0 1.1-.9 2-2 2s-2-.9-2-2 .9-2 2-2 2 .9 2 2zm-2-8c-1.1 0-2 .9-2 2s.9 2 2 2 2-.9 2-2-.9-2-2-2zm0-6c-1.1 0-2 .9-2 2s.9 2 2 2 2-.9 2-2-.9-2-2-2zm6 4c1.1 0 2-.9 2-2s-.9-2-2-2-2 .9-2 2 .9 2 2 2zm0 2c-1.1 0-2 .9-2 2s.9 2 2 2 2-.9 2-2-.9-2-2-2zm0 6c-1.1 0-2 .9-2 2s.9 2 2 2 2-.9 2-2-.9-2-2-2z"/></svg>
<svg class="ic" style="left:1732.20px;top:533.40px" width="30" height="30" viewBox="0 0 24 24"><path fill="#999" d="M19.14 12.94c.04-.3.06-.61.06-.94 0-.32-.02-.64-.07-.94l2.03-1.58c.18-.14.23-.41.12-.61l-1.92-3.32c-.12-.22-.37-.29-.59-.22l-2.39.96c-.5-.38-1.03-.7-1.62-.94l-.36-2.54c-.04-.24-.24-.41-.48-.41h-3.84c-.24 0-.43.17-.47.41l-.36 2.54c-.59.24-1.13.57-1.62.94l-2.39-.96c-.22-.08-.47 0-.59.22L2.74 8.87c-.12.21-.08.47.12.61l2.03 1.58c-.05.3-.09.63-.09.94s.02.64.07.94l-2.03 1.58c-.18.14-.23.41-.12.61l1.92 3.32c.12.22.37.29.59.22l2.39-.96c.5.38 1.03.7 1.62.94l.36 2.54c.05.24.24.41.48.41h3.84c.24 0 .44-.17.47-.41l.36-2.54c.59-.24 1.13-.56 1.62-.94l2.39.96c.22.08.47 0 .59-.22l1.92-3.32c.12-.22.07-.47-.12-.61l-2.01-1.58zM12 15.6c-1.98 0-3.6-1.62-3.6-3.6s1.62-3.6 3.6-3.6 3.6 1.62 3.6 3.6-1.62 3.6-3.6 3.6z"/></svg>
<svg class="ic" style="left:1782.00px;top:532.80px" width="30" height="30" viewBox="0 0 24 24"><path fill="#999" d="M6 19c0 1.1.9 2 2 2h8c1.1 0 2-.9 2-2V7H6v12zM19 4h-3.5l-1-1h-5l-1 1H5v2h14V4z"/></svg>
<svg class="ic" style="left:1832.00px;top:533.40px" width="30" height="30" viewBox="0 0 24 24"><path fill="#999" d="M11 18c0 1.1-.9 2-2 2s-2-.9-2-2 .9-2 2-2 2 .9 2 2zm-2-8c-1.1 0-2 .9-2 2s.9 2 2 2 2-.9 2-2-.9-2-2-2zm0-6c-1.1 0-2 .9-2 2s.9 2 2 2 2-.9 2-2-.9-2-2-2zm6 4c1.1 0 2-.9 2-2s-.9-2-2-2-2 .9-2 2 .9 2 2 2zm0 2c-1.1 0-2 .9-2 2s.9 2 2 2 2-.9 2-2-.9-2-2-2zm0 6c-1.1 0-2 .9-2 2s.9 2 2 2 2-.9 2-2-.9-2-2-2z"/></svg>
<svg class="ic" style="left:1732.20px;top:599.80px" width="30" height="30" viewBox="0 0 24 24"><path fill="#999" d="M19.14 12.94c.04-.3.06-.61.06-.94 0-.32-.02-.64-.07-.94l2.03-1.58c.18-.14.23-.41.12-.61l-1.92-3.32c-.12-.22-.37-.29-.59-.22l-2.39.96c-.5-.38-1.03-.7-1.62-.94l-.36-2.54c-.04-.24-.24-.41-.48-.41h-3.84c-.24 0-.43.17-.47.41l-.36 2.54c-.59.24-1.13.57-1.62.94l-2.39-.96c-.22-.08-.47 0-.59.22L2.74 8.87c-.12.21-.08.47.12.61l2.03 1.58c-.05.3-.09.63-.09.94s.02.64.07.94l-2.03 1.58c-.18.14-.23.41-.12.61l1.92 3.32c.12.22.37.29.59.22l2.39-.96c.5.38 1.03.7 1.62.94l.36 2.54c.05.24.24.41.48.41h3.84c.24 0 .44-.17.47-.41l.36-2.54c.59-.24 1.13-.56 1.62-.94l2.39.96c.22.08.47 0 .59-.22l1.92-3.32c.12-.22.07-.47-.12-.61l-2.01-1.58zM12 15.6c-1.98 0-3.6-1.62-3.6-3.6s1.62-3.6 3.6-3.6 3.6 1.62 3.6 3.6-1.62 3.6-3.6 3.6z"/></svg>
<svg class="ic" style="left:1782.00px;top:599.20px" width="30" height="30" viewBox="0 0 24 24"><path fill="#999" d="M6 19c0 1.1.9 2 2 2h8c1.1 0 2-.9 2-2V7H6v12zM19 4h-3.5l-1-1h-5l-1 1H5v2h14V4z"/></svg>
<svg class="ic" style="left:1832.00px;top:599.80px" width="30" height="30" viewBox="0 0 24 24"><path fill="#999" d="M11 18c0 1.1-.9 2-2 2s-2-.9-2-2 .9-2 2-2 2 .9 2 2zm-2-8c-1.1 0-2 .9-2 2s.9 2 2 2 2-.9 2-2-.9-2-2-2zm0-6c-1.1 0-2 .9-2 2s.9 2 2 2 2-.9 2-2-.9-2-2-2zm6 4c1.1 0 2-.9 2-2s-.9-2-2-2-2 .9-2 2 .9 2 2 2zm0 2c-1.1 0-2 .9-2 2s.9 2 2 2 2-.9 2-2-.9-2-2-2zm0 6c-1.1 0-2 .9-2 2s.9 2 2 2 2-.9 2-2-.9-2-2-2z"/></svg>
<svg class="ic" style="left:1782.00px;top:665.60px" width="30" height="30" viewBox="0 0 24 24"><path fill="#999" d="M6 19c0 1.1.9 2 2 2h8c1.1 0 2-.9 2-2V7H6v12zM19 4h-3.5l-1-1h-5l-1 1H5v2h14V4z"/></svg>
<svg class="ic" style="left:1832.00px;top:666.20px" width="30" height="30" viewBox="0 0 24 24"><path fill="#999" d="M11 18c0 1.1-.9 2-2 2s-2-.9-2-2 .9-2 2-2 2 .9 2 2zm-2-8c-1.1 0-2 .9-2 2s.9 2 2 2 2-.9 2-2-.9-2-2-2zm0-6c-1.1 0-2 .9-2 2s.9 2 2 2 2-.9 2-2-.9-2-2-2zm6 4c1.1 0 2-.9 2-2s-.9-2-2-2-2 .9-2 2 .9 2 2 2zm0 2c-1.1 0-2 .9-2 2s.9 2 2 2 2-.9 2-2-.9-2-2-2zm0 6c-1.1 0-2 .9-2 2s.9 2 2 2 2-.9 2-2-.9-2-2-2z"/></svg>
<svg class="ic" style="left:853.75px;top:856.75px" width="22.5" height="22.5" viewBox="0 0 24 24"><path fill="#dedede" d="M12 2C6.48 2 2 6.48 2 12s4.48 10 10 10 10-4.48 10-10S17.52 2 12 2zm1 15h-2v-6h2v6zm0-8h-2V7h2v2z"/></svg>
<svg class="a" style="left:340px;top:212px" width="60" height="144" viewBox="340 212 60 144"><path d="M361.7 238.7H375.7M368.7 231.7V245.7M361.7 277H375.7" stroke="#6a6a6a" stroke-width="2" fill="none"/><path d="M368.3 319L378.6 324.7L368.3 330.4L358 324.7Z" fill="#6a6a6a"/><path d="M358.7 328.6L368.3 333.4L378 328.6M358.7 332.8L368.3 337.7L378 332.8" stroke="#6a6a6a" stroke-width="1.8" fill="none"/></svg><svg class="a" style="left:40px;top:10.8px" width="70" height="60" viewBox="40 10 70 60">
<path d="M49.1 40.5 A21.2 21.2 0 0 1 71.0 18.6 M91.5 39.1 A21.2 21.2 0 0 1 69.6 61.0" fill="none" stroke="#fff" stroke-width="2.1" stroke-linecap="round"/>
<circle cx="55.0" cy="25.1" r="3.7" fill="#005581" stroke="#fff" stroke-width="2.1"/><circle cx="85.6" cy="54.5" r="3.7" fill="#005581" stroke="#fff" stroke-width="2.1"/>
<g transform="translate(70.3 39.8) rotate(-46)">
<rect x="-9.6" y="-9.6" width="19.2" height="19.2" rx="2" fill="#fff"/>
<path d="M-4.2 -9.6V-14.0M-4.2 9.6V14.0M-9.6 -4.2H-14.0M9.6 -4.2H14.0 M4.2 -9.6V-14.0M4.2 9.6V14.0M-9.6 4.2H-14.0M9.6 4.2H14.0" stroke="#fff" stroke-width="2.1" stroke-linecap="round" fill="none"/>
</g>
<path d="M72.9 32.3L70.9 35.6L74.3 37.4L74.4 40.1L66.9 42.4L68.3 47.7" fill="none" stroke="#005581" stroke-width="2.3" stroke-linejoin="miter" stroke-linecap="butt"/>
</svg><!-- hand cursor -->
<svg class="a" style="left:1736px;top:692px;z-index:50" width="24" height="32" viewBox="1736 692 24 32">
<path d="M1744.9 695.2 c-1 0 -1.6 .6 -1.6 1.6 v9.6 l-1.6 -1.7 c-.8 -.8 -1.7 -.8 -2.3 -.2 c-.6 .6 -.5 1.4 0 2.2 l4.9 8.6 v1.2 h9.6 v-1.2 l1.9 -5.2 c.3 -.9 .4 -1.5 .4 -2.4 v-3.6 c0 -1.6 -2.3 -1.9 -2.7 -.5 v-1 c0 -1.7 -2.5 -2 -2.8 -.4 v-.9 c0 -1.6 -2.6 -1.9 -2.9 -.3 v-4.2 c0 -1 -.9 -1.6 -1.9 -1.6z" fill="#fff" stroke="#000" stroke-width="1.1" stroke-linejoin="round"/>
<path d="M1747.7 701.4v3.6M1750.5 702.6v2.8M1753.2 704v2" stroke="#000" stroke-width="1" fill="none"/>
<rect x="1744.4" y="716.3" width="9.4" height="5.4" fill="#fcc53a" stroke="#000" stroke-width="1.1"/>
<rect x="1750.3" y="718" width="1.7" height="1.7" fill="#000"/>
</svg>


<!-- tooltip -->
<div class="a" style="left:1687px;top:616px;width:120px;height:30px;border-radius:5px;background:#616161"></div>

<!-- ===== tutorial annotation ===== -->
<svg class="a" style="left:0;top:0" width="1920" height="1080" viewBox="0 0 1920 1080">
  <circle cx="1747" cy="681" r="26.5" fill="#f5f5f5" stroke="#fff" stroke-width="5" stroke-opacity=".7"/>
  <circle cx="1747" cy="681" r="26.5" fill="none" stroke="#fcc53a" stroke-width="3"/><circle cx="1747" cy="681" r="28" fill="none" stroke="#9a7410" stroke-opacity=".35" stroke-width=".6"/><circle cx="1747" cy="681" r="25" fill="none" stroke="#9a7410" stroke-opacity=".3" stroke-width=".6"/>
  <g transform="translate(1732.2 666.2) scale(1.25)"><path fill="#999" d="M19.14 12.94c.04-.3.06-.61.06-.94 0-.32-.02-.64-.07-.94l2.03-1.58c.18-.14.23-.41.12-.61l-1.92-3.32c-.12-.22-.37-.29-.59-.22l-2.39.96c-.5-.38-1.03-.7-1.62-.94l-.36-2.54c-.04-.24-.24-.41-.48-.41h-3.84c-.24 0-.43.17-.47.41l-.36 2.54c-.59.24-1.13.57-1.62.94l-2.39-.96c-.22-.08-.47 0-.59.22L2.74 8.87c-.12.21-.08.47.12.61l2.03 1.58c-.05.3-.09.63-.09.94s.02.64.07.94l-2.03 1.58c-.18.14-.23.41-.12.61l1.92 3.32c.12.22.37.29.59.22l2.39-.96c.5.38 1.03.7 1.62.94l.36 2.54c.05.24.24.41.48.41h3.84c.24 0 .44-.17.47-.41l.36-2.54c.59-.24 1.13-.56 1.62-.94l2.39.96c.22.08.47 0 .59-.22l1.92-3.32c.12-.22.07-.47-.12-.61l-2.01-1.58zM12 15.6c-1.98 0-3.6-1.62-3.6-3.6s1.62-3.6 3.6-3.6 3.6 1.62 3.6 3.6-1.62 3.6-3.6 3.6z"/></g>
  <circle cx="1726.5" cy="697.8" r="5.3" fill="#fcc53a"/>
  <path d="M1726.5 697.8V709.6M1726.5 715.3V736.1M1726.5 741.2V750" stroke="#fcc53a" stroke-width="3" fill="none"/>
</svg>
<div class="a" style="left:1486px;top:748.2px;width:421.4px;height:75.1px;border:3px solid #fcc53a;border-radius:9px;background:#fff0e0;box-shadow:0 0 5px 1px rgba(252,197,58,.55)"></div>
<div class="a" style="left:1512.6px;top:716.3px;width:29.2px;height:35px;border:3px solid #fcc53a;border-radius:8px;background:#fff;box-shadow:0 0 4px 1px rgba(252,197,58,.5)"></div>

<span class="t" style="left:98.75px;top:24.61px;font-size:30px;color:#ffffff;transform:scaleX(0.9809);">ThingsBoard</span>
<span class="t" style="left:389.00px;top:31.38px;font-size:22px;color:#c6d7e2;transform:scaleX(1.0141);">Dashboards</span>
<span class="t" style="left:535.75px;top:30.16px;font-size:18px;color:#ffffff;">&gt;</span>
<span class="t" style="left:608.50px;top:31.38px;font-size:22px;color:#ffffff;transform:scaleX(1.0312);">Gas stations map</span>
<span class="t" style="left:1692.50px;top:19.24px;font-size:16.25px;color:#ffffff;transform:scaleX(0.9748);">John Doe</span>
<span class="t" style="left:1692.50px;top:42.84px;font-size:16.25px;color:#b9cfdc;">Tenant administrator</span>
<span class="t" style="left:53.00px;top:97.39px;font-size:17.5px;color:#ffffff;-webkit-text-stroke:0.55px #ffffff;transform:scaleX(1.0337);">Home</span>
<span class="t" style="left:53.00px;top:148.39px;font-size:17.5px;color:#ffffff;-webkit-text-stroke:0.55px #ffffff;transform:scaleX(1.0749);">Alarms</span>
<span class="t" style="left:53.00px;top:199.39px;font-size:17.5px;color:#ffffff;-webkit-text-stroke:0.55px #ffffff;transform:scaleX(1.0443);">Dashboards</span>
<span class="t" style="left:53.00px;top:250.39px;font-size:17.5px;color:#ffffff;-webkit-text-stroke:0.55px #ffffff;transform:scaleX(1.0801);">Entities</span>
<span class="t" style="left:53.00px;top:301.39px;font-size:17.5px;color:#ffffff;-webkit-text-stroke:0.55px #ffffff;transform:scaleX(1.0915);">Profiles</span>
<span class="t" style="left:53.00px;top:352.39px;font-size:17.5px;color:#ffffff;-webkit-text-stroke:0.55px #ffffff;transform:scaleX(1.0542);">Customers</span>
<span class="t" style="left:53.00px;top:403.39px;font-size:17.5px;color:#ffffff;-webkit-text-stroke:0.55px #ffffff;transform:scaleX(1.0422);">Rule chains</span>
<span class="t" style="left:53.00px;top:454.39px;font-size:17.5px;color:#ffffff;-webkit-text-stroke:0.55px #ffffff;transform:scaleX(1.0414);">Edge management</span>
<span class="t" style="left:53.00px;top:505.39px;font-size:17.5px;color:#ffffff;-webkit-text-stroke:0.55px #ffffff;transform:scaleX(1.0620);">Advanced features</span>
<span class="t" style="left:53.00px;top:556.39px;font-size:17.5px;color:#ffffff;-webkit-text-stroke:0.55px #ffffff;transform:scaleX(1.0341);">Resources</span>
<span class="t" style="left:53.00px;top:607.39px;font-size:17.5px;color:#ffffff;-webkit-text-stroke:0.55px #ffffff;transform:scaleX(1.1136);">Notification center</span>
<span class="t" style="left:53.00px;top:658.39px;font-size:17.5px;color:#ffffff;-webkit-text-stroke:0.55px #ffffff;transform:scaleX(1.0848);">Mobile center</span>
<span class="t" style="left:53.00px;top:709.39px;font-size:17.5px;color:#ffffff;-webkit-text-stroke:0.55px #ffffff;transform:scaleX(1.0401);">API usage</span>
<span class="t" style="left:53.00px;top:760.39px;font-size:17.5px;color:#ffffff;-webkit-text-stroke:0.55px #ffffff;transform:scaleX(1.0749);">Settings</span>
<span class="t" style="left:53.00px;top:811.39px;font-size:17.5px;color:#ffffff;-webkit-text-stroke:0.55px #ffffff;transform:scaleX(1.0605);">Security</span>
<span class="t" style="left:338.75px;top:86.05px;font-size:15px;color:#666666;transform:scaleX(1.1384);">Title*</span>
<span class="t" style="left:338.75px;top:107.92px;font-size:39.2px;color:#141414;-webkit-text-stroke:0.9px #141414;transform:scaleX(1.0320);">Gas stations map</span>
<span class="t" style="left:336.00px;top:171.82px;font-size:20px;color:#1c1c1c;transform:scaleX(1.0154);">Map</span>
<span class="t" style="left:756.25px;top:107.95px;font-size:29px;color:#ffffff;transform:scaleX(1.0194);">Map</span>
<span class="t" style="left:756.00px;top:155.07px;font-size:20px;color:#ccdde6;transform:scaleX(0.9833);">Map</span>
<span class="t" style="left:1588.50px;top:133.69px;font-size:17.5px;color:#005581;-webkit-text-stroke:0.5px #005581;transform:scaleX(1.0167);">Basic</span>
<span class="t" style="left:1663.70px;top:133.69px;font-size:17.5px;color:#ccdde6;transform:scaleX(1.0042);">Advanced</span>
<span class="t" style="left:1549.20px;top:248.94px;font-size:17.5px;color:#0b5585;-webkit-text-stroke:0.5px #0b5585;transform:scaleX(1.0369);">Preview</span>
<span class="t" style="left:1683.30px;top:249.49px;font-size:17.5px;color:#a9a9a9;-webkit-text-stroke:0.5px #a9a9a9;transform:scaleX(1.0469);">Decline</span>
<span class="t" style="left:1823.80px;top:249.49px;font-size:17.5px;color:#9c9c9c;-webkit-text-stroke:0.5px #9c9c9c;transform:scaleX(1.0491);">Apply</span>
<span class="t" style="left:765.50px;top:329.27px;font-size:20px;color:#1d1d1d;-webkit-text-stroke:0.75px #1d1d1d;transform:scaleX(1.0146);">Map type</span>
<span class="t" style="left:1739.40px;top:331.59px;font-size:17.5px;color:#0b5585;-webkit-text-stroke:0.5px #0b5585;transform:scaleX(1.0136);">Map</span>
<span class="t" style="left:1806.00px;top:331.59px;font-size:17.5px;color:#a8a8a8;">Image</span>
<span class="t" style="left:781.30px;top:401.79px;font-size:17.5px;color:#7d7d7d;">Label</span>
<span class="t" style="left:1095.40px;top:401.79px;font-size:17.5px;color:#7d7d7d;">Provider</span>
<span class="t" style="left:1408.80px;top:401.79px;font-size:17.5px;color:#7d7d7d;transform:scaleX(0.9714);">Layer</span>
<div class="a" style="left:790px;top:462px;width:275.5px;height:40px;overflow:hidden">
<span class="t" style="left:5.80px;top:12.59px;font-size:17.5px;color:#2a2a2a;transform:scaleX(1.0827);">{i18n:widgets.maps.layer.roadmap}</span>
</div>
<div class="a" style="left:790px;top:528.4px;width:275.5px;height:40px;overflow:hidden">
<span class="t" style="left:5.80px;top:12.59px;font-size:17.5px;color:#2a2a2a;transform:scaleX(1.0827);">{i18n:widgets.maps.layer.satellite}</span>
</div>
<div class="a" style="left:790px;top:594.8px;width:275.5px;height:40px;overflow:hidden">
<span class="t" style="left:5.80px;top:12.59px;font-size:17.5px;color:#2a2a2a;transform:scaleX(1.0827);">{i18n:widgets.maps.layer.hybrid}</span>
</div>
<span class="t" style="left:796.40px;top:672.99px;font-size:17.5px;color:#2a2a2a;transform:scaleX(1.0495);">My map layer</span>
<span class="t" style="left:1110.20px;top:473.79px;font-size:17.5px;color:#2a2a2a;transform:scaleX(1.0200);">OpenStreet</span>
<span class="t" style="left:1110.20px;top:540.19px;font-size:17.5px;color:#2a2a2a;transform:scaleX(1.0200);">OpenStreet</span>
<span class="t" style="left:1110.20px;top:606.59px;font-size:17.5px;color:#2a2a2a;transform:scaleX(1.0200);">OpenStreet</span>
<span class="t" style="left:1110.20px;top:672.99px;font-size:17.5px;color:#2a2a2a;transform:scaleX(1.0200);">OpenStreet</span>
<span class="t" style="left:1423.20px;top:473.79px;font-size:17.5px;color:#2a2a2a;transform:scaleX(1.0579);">Mapnik</span>
<span class="t" style="left:1423.20px;top:540.19px;font-size:17.5px;color:#2a2a2a;transform:scaleX(1.0554);">WorldImagery</span>
<span class="t" style="left:1423.20px;top:606.59px;font-size:17.5px;color:#2a2a2a;transform:scaleX(1.0554);">WorldImagery</span>
<span class="t" style="left:1423.20px;top:672.99px;font-size:17.5px;color:#2a2a2a;transform:scaleX(1.0532);">WorldStreetMap</span>
<span class="t" style="left:784.70px;top:756.99px;font-size:17.5px;color:#0b5585;-webkit-text-stroke:0.5px #0b5585;transform:scaleX(1.0522);">Add layer</span>
<span class="t" style="left:1697.25px;top:622.24px;font-size:16.25px;color:#ffffff;-webkit-text-stroke:0.2px #ffffff;transform:scaleX(0.9851);">Layer settings</span>
<span class="t" style="left:765.25px;top:858.07px;font-size:20px;color:#1d1d1d;-webkit-text-stroke:0.75px #1d1d1d;transform:scaleX(0.9823);">Overlays</span>
<span class="t" style="left:1599.70px;top:860.19px;font-size:17.5px;color:#0b5585;-webkit-text-stroke:0.5px #0b5585;transform:scaleX(1.0384);">Markers</span>
<span class="t" style="left:1697.20px;top:860.79px;font-size:17.5px;color:#a8a8a8;transform:scaleX(1.0109);">Polygons</span>
<span class="t" style="left:1801.25px;top:860.79px;font-size:17.5px;color:#a8a8a8;transform:scaleX(1.0054);">Circles</span>
<span class="t" style="left:780.90px;top:929.59px;font-size:17.5px;color:#7d7d7d;">Source</span>
<span class="t" style="left:1269.30px;top:929.59px;font-size:17.5px;color:#7d7d7d;transform:scaleX(1.0168);">Latitude key</span>
<span class="t" style="left:1521.00px;top:929.59px;font-size:17.5px;color:#7d7d7d;transform:scaleX(1.0153);">Longitude key</span>
<span class="t" style="left:1203.00px;top:997.55px;font-size:22.5px;color:#a9a9a9;transform:scaleX(1.0194);">No markers configured</span>
<div class="a" style="left:1516px;top:720px;width:22px;height:23.4px;overflow:hidden"><span class="t" style="left:3.9px;top:0.25px;font-size:27.5px;color:#000;transform-origin:0 0;transform:scale(1,1.144)">1</span></div>
<span class="t" style="left:1494.70px;top:755.82px;font-size:27.5px;color:#000;transform:scaleX(1.0124);">Go to the "Layer settings"</span>
<span class="t" style="left:1494.70px;top:790.42px;font-size:27.5px;color:#000;transform:scaleX(1.0131);">by clicking the "gear" icon button</span>

</body></html>
